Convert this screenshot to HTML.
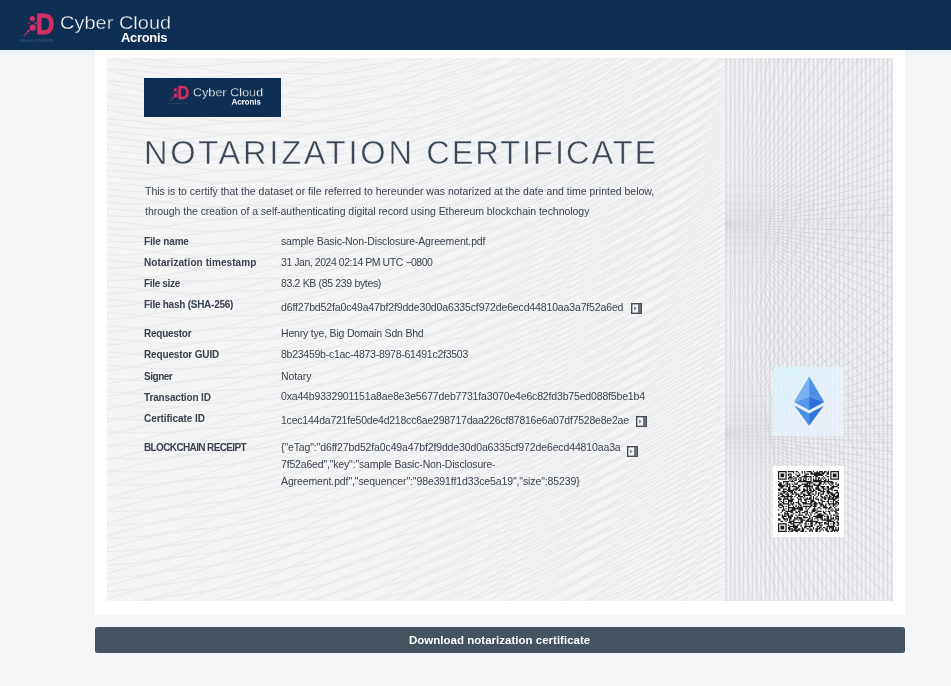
<!DOCTYPE html>
<html lang="en"><head><meta charset="utf-8"><title>Notarization certificate</title>
<style>
*{box-sizing:border-box}
html,body,dl,dt,dd,p,h1{margin:0;padding:0}
body{width:951px;height:686px;overflow:hidden;background:#f4f6f8;font-family:"Liberation Sans",sans-serif;position:relative}
.hdr{position:absolute;left:0;top:0;width:951px;height:49.5px;background:#0e2f54}
.hl{position:absolute;left:0;top:49.5px;width:951px;height:5.5px;background:#ecf3fa}
.card{position:absolute;left:94.6px;top:49.5px;width:810.6px;height:565px;background:#fff}
.cert{position:absolute;left:107px;top:58px;width:786px;height:543px;background:#f5f5f6;overflow:hidden}
.cert svg.bg{position:absolute;left:0;top:0}
.btn{position:absolute;left:95px;top:627px;width:810px;height:26px;background:#45525f;border-radius:2.5px;border:0;padding:0;margin:0;font:inherit;display:block;cursor:pointer}
.lg{position:absolute;width:180px;height:50px}
.lbox{position:absolute;left:143.5px;top:78px;width:137px;height:38.5px;background:#0e2f54}
.eth{position:absolute;left:772.5px;top:366.5px;width:71.5px;height:69px;background:linear-gradient(135deg,rgba(214,244,252,.85),rgba(232,243,253,.78) 55%,rgba(236,242,253,.72))}
.qrbox{position:absolute;left:772.7px;top:466.2px;width:71.3px;height:70.8px;background:#fff}
.qrbox svg{position:absolute;left:5.3px;top:5.2px}

.t{position:absolute;white-space:nowrap;line-height:1;margin:0;font-weight:400;will-change:transform}
.ttl{font-size:32.6px;color:#3c4858;-webkit-text-stroke:.5px #f3f4f6}
.v{font-size:10.5px;color:#3a434f}
.l{font-size:10px;font-weight:700;color:#39414d}
.bt{font-size:11.5px;font-weight:700;color:#fff}
.cc{font-size:18.6px;color:#fff;-webkit-text-stroke:.35px #0e2f54;transform:scaleX(1.07);transform-origin:0 0}
.ac{font-size:13px;font-weight:700;color:#fff}
.cc2{font-size:10.8px;color:#fff;-webkit-text-stroke:.25px #0e2f54}
.ac2{font-size:7.6px;font-weight:700;color:#fff}

</style></head><body>
<header>
<div class="hdr"></div>
<div class="lg" role="img" aria-label="Cyber Cloud Acronis" style="left:0px;top:0px;"><svg style="position:absolute;left:18px;top:8px" width="40.0" height="36.0" viewBox="0 0 40 36"><text x="17.6" y="25.7" font-family="Liberation Sans, sans-serif" font-weight="700" font-size="30" fill="#d42e63" stroke="#d42e63" stroke-width=".8" stroke-linejoin="round" textLength="18.6" lengthAdjust="spacingAndGlyphs">D</text><circle cx="14.3" cy="10.6" r="2.6" fill="#d42e63"/><circle cx="14.7" cy="19.7" r="3.1" fill="#d42e63"/><circle cx="10.5" cy="23" r="1.5" fill="#c12c62"/><circle cx="8.3" cy="25.6" r="1.2" fill="#a92a60"/><circle cx="6.4" cy="27.6" r="1" fill="#8f2a5f"/><circle cx="10.8" cy="15" r="1.1" fill="#a92a60"/><circle cx="17.6" cy="15.1" r="1.2" fill="#c12c62"/><text x="2" y="33.6" font-family="Liberation Sans, sans-serif" font-size="3.8" fill="#3f5781" textLength="33" lengthAdjust="spacingAndGlyphs">BIGDOMAIN</text></svg><span class="t cc" style="left:59.6px;top:14.06px;letter-spacing:0.050px">Cyber Cloud</span><span class="t ac" style="left:120.9px;top:30.60px;letter-spacing:-0.315px">Acronis</span></div>
<div class="hl"></div>
</header>
<main>
<div class="card"></div>
<section class="cert">
 <svg class="bg" width="786" height="543" viewBox="0 0 786 543">
 <defs><linearGradient id="fg" gradientUnits="userSpaceOnUse" x1="618.0" y1="0" x2="663.0" y2="0"><stop offset="0" stop-color="#c8cacf" stop-opacity=".12"/><stop offset="1" stop-color="#c3c6cc" stop-opacity=".6"/></linearGradient><linearGradient id="lg2" gradientUnits="userSpaceOnUse" x1="240" y1="0" x2="618.0" y2="0"><stop offset="0" stop-color="#e7e8ea" stop-opacity="0"/><stop offset="1" stop-color="#e7e8ea" stop-opacity="1"/></linearGradient><clipPath id="sc"><rect x="618.0" y="0" width="168.0" height="543"/></clipPath></defs>
 <path d="M-10 -18.4 L-1 -15.4 L8 -12.6 L17 -10.1 L26 -7.8 L35 -6.0 L44 -4.5 L53 -3.5 L62 -2.9 L71 -2.7 L80 -2.8 L89 -3.3 L98 -3.9 L107 -4.7 L116 -5.6 L125 -6.4 L134 -7.2 L143 -7.8 L152 -8.2 L161 -8.5 L170 -8.5 L179 -8.4 L188 -8.2 L197 -8.0 L206 -7.7 L215 -7.6 L224 -7.6 L233 -7.9 L242 -8.5 L251 -9.5 L260 -10.9 L269 -12.8 L278 -15.0 L287 -17.7 L296 -20.7 L305 -23.9 L314 -27.4 L323 -31.0 L332 -34.7 L341 -38.4 L350 -41.9 L359 -45.3 L368 -48.6 L377 -51.6 L386 -54.5 L395 -57.2 L404 -59.8 L413 -62.3 L422 -64.9 L431 -67.6 L440 -70.4 L449 -73.6 L458 -77.0 L467 -80.9 L476 -85.2 L485 -89.9 L494 -95.0 L503 -100.5 L512 -106.3 L521 -112.4 L530 -118.8 L539 -125.2 L548 -131.7 L557 -138.1 L566 -144.5 L575 -150.7 L584 -156.7 L593 -162.5 L602 -168.2 L611 -173.7 L620 -179.1 L629 -184.5 M-10 -4.9 L-1 -2.1 L8 0.6 L17 3.0 L26 5.1 L35 6.8 L44 8.1 L53 9.0 L62 9.4 L71 9.5 L80 9.2 L89 8.7 L98 7.9 L107 7.1 L116 6.2 L125 5.3 L134 4.6 L143 4.0 L152 3.6 L161 3.4 L170 3.4 L179 3.5 L188 3.7 L197 4.0 L206 4.2 L215 4.3 L224 4.1 L233 3.7 L242 3.0 L251 1.9 L260 0.4 L269 -1.6 L278 -4.0 L287 -6.7 L296 -9.8 L305 -13.2 L314 -16.7 L323 -20.3 L332 -24.0 L341 -27.6 L350 -31.1 L359 -34.5 L368 -37.6 L377 -40.6 L386 -43.4 L395 -46.0 L404 -48.6 L413 -51.1 L422 -53.7 L431 -56.4 L440 -59.3 L449 -62.5 L458 -66.0 L467 -70.0 L476 -74.3 L485 -79.1 L494 -84.3 L503 -89.9 L512 -95.8 L521 -101.9 L530 -108.2 L539 -114.7 L548 -121.1 L557 -127.5 L566 -133.7 L575 -139.8 L584 -145.8 L593 -151.5 L602 -157.0 L611 -162.4 L620 -167.7 L629 -173.0 M-10 8.5 L-1 11.3 L8 13.9 L17 16.1 L26 18.1 L35 19.6 L44 20.7 L53 21.4 L62 21.7 L71 21.6 L80 21.2 L89 20.6 L98 19.8 L107 18.9 L116 18.0 L125 17.1 L134 16.4 L143 15.8 L152 15.5 L161 15.3 L170 15.3 L179 15.4 L188 15.6 L197 15.9 L206 16.0 L215 16.1 L224 15.9 L233 15.4 L242 14.5 L251 13.3 L260 11.6 L269 9.5 L278 7.0 L287 4.2 L296 1.0 L305 -2.4 L314 -5.9 L323 -9.6 L332 -13.2 L341 -16.8 L350 -20.3 L359 -23.5 L368 -26.6 L377 -29.5 L386 -32.3 L395 -34.8 L404 -37.4 L413 -39.9 L422 -42.4 L431 -45.2 L440 -48.1 L449 -51.4 L458 -55.0 L467 -59.1 L476 -63.5 L485 -68.4 L494 -73.7 L503 -79.3 L512 -85.2 L521 -91.4 L530 -97.7 L539 -104.1 L548 -110.5 L557 -116.8 L566 -123.0 L575 -129.0 L584 -134.8 L593 -140.4 L602 -145.8 L611 -151.1 L620 -156.4 L629 -161.6 M-10 21.9 L-1 24.6 L8 27.1 L17 29.2 L26 31.0 L35 32.4 L44 33.3 L53 33.8 L62 34.0 L71 33.8 L80 33.3 L89 32.5 L98 31.6 L107 30.7 L116 29.8 L125 28.9 L134 28.2 L143 27.7 L152 27.3 L161 27.2 L170 27.2 L179 27.4 L188 27.6 L197 27.8 L206 27.9 L215 27.9 L224 27.6 L233 27.0 L242 26.0 L251 24.6 L260 22.9 L269 20.6 L278 18.0 L287 15.1 L296 11.8 L305 8.4 L314 4.8 L323 1.1 L332 -2.5 L341 -6.0 L350 -9.4 L359 -12.6 L368 -15.6 L377 -18.5 L386 -21.1 L395 -23.7 L404 -26.1 L413 -28.6 L422 -31.2 L431 -34.0 L440 -37.0 L449 -40.4 L458 -44.1 L467 -48.2 L476 -52.7 L485 -57.7 L494 -63.1 L503 -68.7 L512 -74.7 L521 -80.9 L530 -87.2 L539 -93.5 L548 -99.9 L557 -106.1 L566 -112.2 L575 -118.0 L584 -123.7 L593 -129.2 L602 -134.6 L611 -139.8 L620 -145.0 L629 -150.2 M-10 35.4 L-1 37.9 L8 40.3 L17 42.3 L26 43.9 L35 45.1 L44 45.9 L53 46.2 L62 46.2 L71 45.9 L80 45.3 L89 44.4 L98 43.5 L107 42.5 L116 41.6 L125 40.7 L134 40.1 L143 39.6 L152 39.3 L161 39.1 L170 39.2 L179 39.4 L188 39.6 L197 39.7 L206 39.8 L215 39.7 L224 39.3 L233 38.6 L242 37.5 L251 36.0 L260 34.1 L269 31.7 L278 29.0 L287 26.0 L296 22.7 L305 19.1 L314 15.5 L323 11.9 L332 8.3 L341 4.8 L350 1.5 L359 -1.7 L368 -4.6 L377 -7.4 L386 -10.0 L395 -12.5 L404 -14.9 L413 -17.4 L422 -20.0 L431 -22.8 L440 -25.9 L449 -29.3 L458 -33.1 L467 -37.4 L476 -42.0 L485 -47.0 L494 -52.5 L503 -58.2 L512 -64.2 L521 -70.4 L530 -76.7 L539 -83.0 L548 -89.2 L557 -95.4 L566 -101.3 L575 -107.1 L584 -112.7 L593 -118.1 L602 -123.4 L611 -128.5 L620 -133.6 L629 -138.8 M-10 48.8 L-1 51.3 L8 53.4 L17 55.3 L26 56.7 L35 57.8 L44 58.4 L53 58.6 L62 58.4 L71 58.0 L80 57.2 L89 56.4 L98 55.4 L107 54.4 L116 53.4 L125 52.6 L134 51.9 L143 51.5 L152 51.2 L161 51.1 L170 51.2 L179 51.3 L188 51.5 L197 51.7 L206 51.7 L215 51.5 L224 51.0 L233 50.1 L242 48.9 L251 47.3 L260 45.2 L269 42.8 L278 40.0 L287 36.8 L296 33.5 L305 29.9 L314 26.3 L323 22.7 L332 19.1 L341 15.7 L350 12.4 L359 9.3 L368 6.5 L377 3.8 L386 1.2 L395 -1.2 L404 -3.7 L413 -6.2 L422 -8.8 L431 -11.7 L440 -14.8 L449 -18.3 L458 -22.2 L467 -26.5 L476 -31.3 L485 -36.4 L494 -41.9 L503 -47.7 L512 -53.7 L521 -59.9 L530 -66.1 L539 -72.4 L548 -78.6 L557 -84.6 L566 -90.5 L575 -96.1 L584 -101.6 L593 -106.9 L602 -112.1 L611 -117.2 L620 -122.2 L629 -127.4 M-10 62.2 L-1 64.6 L8 66.6 L17 68.3 L26 69.6 L35 70.4 L44 70.9 L53 70.9 L62 70.6 L71 70.1 L80 69.2 L89 68.3 L98 67.2 L107 66.2 L116 65.3 L125 64.5 L134 63.8 L143 63.4 L152 63.2 L161 63.1 L170 63.2 L179 63.3 L188 63.5 L197 63.6 L206 63.5 L215 63.2 L224 62.6 L233 61.7 L242 60.3 L251 58.6 L260 56.4 L269 53.8 L278 50.9 L287 47.7 L296 44.3 L305 40.7 L314 37.1 L323 33.4 L332 29.9 L341 26.5 L350 23.3 L359 20.3 L368 17.5 L377 14.9 L386 12.4 L395 10.0 L404 7.6 L413 5.0 L422 2.4 L431 -0.6 L440 -3.8 L449 -7.4 L458 -11.3 L467 -15.8 L476 -20.6 L485 -25.8 L494 -31.3 L503 -37.1 L512 -43.2 L521 -49.4 L530 -55.6 L539 -61.8 L548 -67.9 L557 -73.8 L566 -79.6 L575 -85.2 L584 -90.5 L593 -95.7 L602 -100.8 L611 -105.8 L620 -110.9 L629 -116.0 M-10 75.6 L-1 77.8 L8 79.7 L17 81.2 L26 82.4 L35 83.1 L44 83.4 L53 83.3 L62 82.8 L71 82.1 L80 81.2 L89 80.2 L98 79.1 L107 78.1 L116 77.1 L125 76.3 L134 75.7 L143 75.3 L152 75.1 L161 75.1 L170 75.2 L179 75.3 L188 75.5 L197 75.5 L206 75.4 L215 75.0 L224 74.3 L233 73.2 L242 71.7 L251 69.8 L260 67.5 L269 64.8 L278 61.8 L287 58.5 L296 55.0 L305 51.5 L314 47.8 L323 44.2 L332 40.8 L341 37.4 L350 34.3 L359 31.4 L368 28.6 L377 26.1 L386 23.6 L395 21.2 L404 18.8 L413 16.3 L422 13.5 L431 10.6 L440 7.3 L449 3.6 L458 -0.5 L467 -5.0 L476 -9.9 L485 -15.2 L494 -20.8 L503 -26.6 L512 -32.7 L521 -38.8 L530 -45.0 L539 -51.2 L548 -57.2 L557 -63.0 L566 -68.7 L575 -74.1 L584 -79.4 L593 -84.5 L602 -89.5 L611 -94.5 L620 -99.5 L629 -104.6 M-10 89.0 L-1 91.1 L8 92.8 L17 94.2 L26 95.1 L35 95.7 L44 95.8 L53 95.6 L62 95.0 L71 94.2 L80 93.2 L89 92.1 L98 91.0 L107 90.0 L116 89.0 L125 88.3 L134 87.7 L143 87.3 L152 87.2 L161 87.1 L170 87.2 L179 87.4 L188 87.5 L197 87.4 L206 87.2 L215 86.7 L224 85.9 L233 84.7 L242 83.1 L251 81.0 L260 78.6 L269 75.8 L278 72.7 L287 69.4 L296 65.8 L305 62.2 L314 58.6 L323 55.1 L332 51.6 L341 48.4 L350 45.3 L359 42.5 L368 39.8 L377 37.3 L386 34.8 L395 32.5 L404 30.0 L413 27.5 L422 24.7 L431 21.7 L440 18.3 L449 14.5 L458 10.3 L467 5.7 L476 0.8 L485 -4.6 L494 -10.2 L503 -16.1 L512 -22.2 L521 -28.3 L530 -34.4 L539 -40.5 L548 -46.4 L557 -52.2 L566 -57.7 L575 -63.1 L584 -68.3 L593 -73.3 L602 -78.2 L611 -83.1 L620 -88.1 L629 -93.2 M-10 102.4 L-1 104.3 L8 105.9 L17 107.1 L26 107.9 L35 108.3 L44 108.2 L53 107.8 L62 107.2 L71 106.3 L80 105.2 L89 104.0 L98 102.9 L107 101.9 L116 100.9 L125 100.2 L134 99.7 L143 99.3 L152 99.2 L161 99.2 L170 99.3 L179 99.4 L188 99.4 L197 99.3 L206 99.0 L215 98.4 L224 97.5 L233 96.2 L242 94.4 L251 92.2 L260 89.7 L269 86.8 L278 83.6 L287 80.2 L296 76.6 L305 73.0 L314 69.4 L323 65.9 L332 62.5 L341 59.3 L350 56.3 L359 53.5 L368 50.9 L377 48.5 L386 46.1 L395 43.7 L404 41.3 L413 38.7 L422 35.9 L431 32.7 L440 29.3 L449 25.4 L458 21.1 L467 16.5 L476 11.4 L485 6.0 L494 0.3 L503 -5.6 L512 -11.7 L521 -17.8 L530 -23.9 L539 -29.8 L548 -35.7 L557 -41.3 L566 -46.8 L575 -52.0 L584 -57.1 L593 -62.0 L602 -66.9 L611 -71.7 L620 -76.7 L629 -81.8 M-10 115.8 L-1 117.6 L8 119.0 L17 120.0 L26 120.6 L35 120.8 L44 120.6 L53 120.1 L62 119.3 L71 118.3 L80 117.2 L89 116.0 L98 114.8 L107 113.8 L116 112.9 L125 112.2 L134 111.7 L143 111.4 L152 111.3 L161 111.3 L170 111.3 L179 111.4 L188 111.4 L197 111.2 L206 110.8 L215 110.1 L224 109.1 L233 107.6 L242 105.7 L251 103.4 L260 100.8 L269 97.8 L278 94.5 L287 91.0 L296 87.4 L305 83.8 L314 80.2 L323 76.8 L332 73.4 L341 70.3 L350 67.4 L359 64.7 L368 62.1 L377 59.7 L386 57.3 L395 55.0 L404 52.5 L413 49.9 L422 47.0 L431 43.8 L440 40.2 L449 36.3 L458 31.9 L467 27.1 L476 22.0 L485 16.5 L494 10.8 L503 4.9 L512 -1.2 L521 -7.2 L530 -13.3 L539 -19.2 L548 -24.9 L557 -30.5 L566 -35.8 L575 -40.9 L584 -45.9 L593 -50.8 L602 -55.6 L611 -60.4 L620 -65.3 L629 -70.4 M-10 129.2 L-1 130.8 L8 132.0 L17 132.9 L26 133.3 L35 133.3 L44 133.0 L53 132.4 L62 131.5 L71 130.4 L80 129.2 L89 127.9 L98 126.8 L107 125.7 L116 124.9 L125 124.2 L134 123.7 L143 123.4 L152 123.3 L161 123.3 L170 123.4 L179 123.4 L188 123.4 L197 123.1 L206 122.6 L215 121.8 L224 120.6 L233 119.0 L242 117.0 L251 114.6 L260 111.8 L269 108.7 L278 105.4 L287 101.9 L296 98.2 L305 94.6 L314 91.1 L323 87.6 L332 84.4 L341 81.3 L350 78.5 L359 75.8 L368 73.3 L377 70.9 L386 68.6 L395 66.2 L404 63.7 L413 61.0 L422 58.1 L431 54.8 L440 51.2 L449 47.1 L458 42.7 L467 37.8 L476 32.6 L485 27.1 L494 21.3 L503 15.4 L512 9.3 L521 3.3 L530 -2.6 L539 -8.4 L548 -14.1 L557 -19.5 L566 -24.8 L575 -29.8 L584 -34.7 L593 -39.5 L602 -44.2 L611 -49.0 L620 -53.9 L629 -59.0 M-10 142.5 L-1 143.9 L8 145.0 L17 145.7 L26 146.0 L35 145.9 L44 145.4 L53 144.6 L62 143.6 L71 142.4 L80 141.2 L89 139.9 L98 138.7 L107 137.7 L116 136.9 L125 136.2 L134 135.8 L143 135.5 L152 135.4 L161 135.4 L170 135.5 L179 135.5 L188 135.3 L197 135.0 L206 134.4 L215 133.4 L224 132.1 L233 130.4 L242 128.2 L251 125.7 L260 122.8 L269 119.6 L278 116.2 L287 112.7 L296 109.1 L305 105.5 L314 101.9 L323 98.5 L332 95.3 L341 92.3 L350 89.6 L359 87.0 L368 84.5 L377 82.2 L386 79.8 L395 77.5 L404 74.9 L413 72.2 L422 69.2 L431 65.8 L440 62.1 L449 57.9 L458 53.4 L467 48.4 L476 43.2 L485 37.6 L494 31.8 L503 25.9 L512 19.9 L521 13.9 L530 8.0 L539 2.3 L548 -3.3 L557 -8.6 L566 -13.7 L575 -18.7 L584 -23.5 L593 -28.2 L602 -32.9 L611 -37.6 L620 -42.6 L629 -47.7 M-10 155.8 L-1 157.1 L8 158.0 L17 158.5 L26 158.6 L35 158.3 L44 157.7 L53 156.8 L62 155.7 L71 154.5 L80 153.2 L89 151.9 L98 150.7 L107 149.7 L116 148.9 L125 148.3 L134 147.9 L143 147.6 L152 147.5 L161 147.5 L170 147.6 L179 147.5 L188 147.3 L197 146.9 L206 146.1 L215 145.1 L224 143.6 L233 141.7 L242 139.5 L251 136.8 L260 133.8 L269 130.6 L278 127.1 L287 123.5 L296 119.9 L305 116.3 L314 112.8 L323 109.5 L332 106.3 L341 103.4 L350 100.7 L359 98.2 L368 95.8 L377 93.4 L386 91.1 L395 88.7 L404 86.1 L413 83.4 L422 80.3 L431 76.8 L440 73.0 L449 68.7 L458 64.1 L467 59.1 L476 53.7 L485 48.1 L494 42.3 L503 36.4 L512 30.4 L521 24.5 L530 18.7 L539 13.0 L548 7.6 L557 2.4 L566 -2.7 L575 -7.5 L584 -12.2 L593 -16.9 L602 -21.5 L611 -26.3 L620 -31.2 L629 -36.4 M-10 169.1 L-1 170.2 L8 171.0 L17 171.3 L26 171.2 L35 170.8 L44 170.1 L53 169.0 L62 167.8 L71 166.5 L80 165.2 L89 163.9 L98 162.7 L107 161.7 L116 160.9 L125 160.3 L134 160.0 L143 159.8 L152 159.7 L161 159.7 L170 159.6 L179 159.5 L188 159.2 L197 158.7 L206 157.9 L215 156.7 L224 155.1 L233 153.1 L242 150.7 L251 147.9 L260 144.8 L269 141.5 L278 138.0 L287 134.3 L296 130.7 L305 127.2 L314 123.7 L323 120.4 L332 117.4 L341 114.5 L350 111.8 L359 109.4 L368 107.0 L377 104.7 L386 102.4 L395 99.9 L404 97.3 L413 94.5 L422 91.3 L431 87.8 L440 83.8 L449 79.5 L458 74.8 L467 69.7 L476 64.3 L485 58.6 L494 52.8 L503 46.9 L512 40.9 L521 35.1 L530 29.4 L539 23.8 L548 18.5 L557 13.4 L566 8.4 L575 3.7 L584 -1.0 L593 -5.6 L602 -10.2 L611 -14.9 L620 -19.9 L629 -25.0 M-10 182.4 L-1 183.3 L8 183.9 L17 184.1 L26 183.8 L35 183.3 L44 182.4 L53 181.2 L62 180.0 L71 178.6 L80 177.2 L89 175.9 L98 174.8 L107 173.8 L116 173.0 L125 172.5 L134 172.1 L143 171.9 L152 171.8 L161 171.8 L170 171.7 L179 171.5 L188 171.2 L197 170.5 L206 169.6 L215 168.2 L224 166.5 L233 164.4 L242 161.8 L251 159.0 L260 155.8 L269 152.4 L278 148.8 L287 145.2 L296 141.6 L305 138.0 L314 134.6 L323 131.4 L332 128.4 L341 125.6 L350 123.0 L359 120.6 L368 118.3 L377 116.0 L386 113.6 L395 111.2 L404 108.5 L413 105.6 L422 102.3 L431 98.7 L440 94.7 L449 90.2 L458 85.4 L467 80.2 L476 74.8 L485 69.1 L494 63.3 L503 57.4 L512 51.5 L521 45.7 L530 40.1 L539 34.6 L548 29.4 L557 24.4 L566 19.5 L575 14.9 L584 10.3 L593 5.7 L602 1.1 L611 -3.6 L620 -8.5 L629 -13.7 M-10 195.6 L-1 196.4 L8 196.8 L17 196.8 L26 196.4 L35 195.7 L44 194.7 L53 193.4 L62 192.1 L71 190.7 L80 189.3 L89 188.0 L98 186.8 L107 185.9 L116 185.1 L125 184.6 L134 184.2 L143 184.1 L152 184.0 L161 183.9 L170 183.8 L179 183.5 L188 183.1 L197 182.3 L206 181.2 L215 179.8 L224 177.9 L233 175.6 L242 173.0 L251 170.0 L260 166.7 L269 163.3 L278 159.7 L287 156.0 L296 152.4 L305 148.9 L314 145.6 L323 142.4 L332 139.5 L341 136.8 L350 134.2 L359 131.8 L368 129.5 L377 127.2 L386 124.9 L395 122.4 L404 119.7 L413 116.7 L422 113.3 L431 109.6 L440 105.5 L449 100.9 L458 96.0 L467 90.8 L476 85.3 L485 79.6 L494 73.8 L503 67.9 L512 62.1 L521 56.4 L530 50.8 L539 45.5 L548 40.3 L557 35.4 L566 30.7 L575 26.1 L584 21.6 L593 17.1 L602 12.5 L611 7.8 L620 2.8 L629 -2.5 M-10 208.8 L-1 209.5 L8 209.7 L17 209.5 L26 209.0 L35 208.1 L44 207.0 L53 205.6 L62 204.2 L71 202.7 L80 201.3 L89 200.0 L98 198.9 L107 198.0 L116 197.2 L125 196.7 L134 196.4 L143 196.2 L152 196.1 L161 196.0 L170 195.9 L179 195.5 L188 195.0 L197 194.1 L206 192.9 L215 191.3 L224 189.3 L233 186.9 L242 184.1 L251 181.0 L260 177.7 L269 174.2 L278 170.5 L287 166.9 L296 163.3 L305 159.8 L314 156.6 L323 153.5 L332 150.6 L341 147.9 L350 145.4 L359 143.1 L368 140.8 L377 138.5 L386 136.2 L395 133.6 L404 130.8 L413 127.8 L422 124.3 L431 120.5 L440 116.2 L449 111.6 L458 106.6 L467 101.3 L476 95.8 L485 90.1 L494 84.3 L503 78.4 L512 72.7 L521 67.0 L530 61.6 L539 56.3 L548 51.3 L557 46.5 L566 41.8 L575 37.3 L584 32.9 L593 28.4 L602 23.8 L611 19.1 L620 14.1 L629 8.8 M-10 222.0 L-1 222.5 L8 222.5 L17 222.2 L26 221.5 L35 220.5 L44 219.2 L53 217.8 L62 216.3 L71 214.8 L80 213.4 L89 212.1 L98 211.0 L107 210.1 L116 209.4 L125 208.9 L134 208.6 L143 208.4 L152 208.3 L161 208.2 L170 207.9 L179 207.5 L188 206.9 L197 205.9 L206 204.5 L215 202.8 L224 200.6 L233 198.1 L242 195.2 L251 192.0 L260 188.6 L269 185.1 L278 181.4 L287 177.8 L296 174.2 L305 170.8 L314 167.6 L323 164.5 L332 161.7 L341 159.1 L350 156.7 L359 154.4 L368 152.1 L377 149.8 L386 147.4 L395 144.8 L404 142.0 L413 138.8 L422 135.3 L431 131.3 L440 127.0 L449 122.3 L458 117.2 L467 111.9 L476 106.3 L485 100.6 L494 94.8 L503 89.0 L512 83.3 L521 77.7 L530 72.4 L539 67.2 L548 62.3 L557 57.6 L566 53.0 L575 48.6 L584 44.2 L593 39.7 L602 35.1 L611 30.4 L620 25.4 L629 20.0 M-10 235.2 L-1 235.5 L8 235.3 L17 234.8 L26 234.0 L35 232.9 L44 231.5 L53 230.0 L62 228.5 L71 226.9 L80 225.5 L89 224.2 L98 223.1 L107 222.2 L116 221.6 L125 221.1 L134 220.8 L143 220.7 L152 220.5 L161 220.3 L170 220.0 L179 219.5 L188 218.7 L197 217.6 L206 216.1 L215 214.2 L224 212.0 L233 209.3 L242 206.3 L251 203.0 L260 199.6 L269 196.0 L278 192.3 L287 188.7 L296 185.1 L305 181.8 L314 178.6 L323 175.6 L332 172.9 L341 170.3 L350 167.9 L359 165.7 L368 163.4 L377 161.1 L386 158.7 L395 156.0 L404 153.1 L413 149.8 L422 146.2 L431 142.1 L440 137.7 L449 132.9 L458 127.8 L467 122.4 L476 116.8 L485 111.1 L494 105.3 L503 99.6 L512 93.9 L521 88.5 L530 83.2 L539 78.2 L548 73.3 L557 68.7 L566 64.2 L575 59.8 L584 55.5 L593 51.0 L602 46.5 L611 41.7 L620 36.6 L629 31.2 M-10 248.3 L-1 248.4 L8 248.1 L17 247.5 L26 246.5 L35 245.2 L44 243.8 L53 242.2 L62 240.6 L71 239.1 L80 237.6 L89 236.4 L98 235.3 L107 234.4 L116 233.8 L125 233.4 L134 233.1 L143 232.9 L152 232.7 L161 232.4 L170 232.1 L179 231.4 L188 230.5 L197 229.3 L206 227.7 L215 225.7 L224 223.3 L233 220.5 L242 217.4 L251 214.0 L260 210.5 L269 206.9 L278 203.2 L287 199.6 L296 196.1 L305 192.8 L314 189.6 L323 186.7 L332 184.1 L341 181.6 L350 179.2 L359 177.0 L368 174.7 L377 172.4 L386 169.9 L395 167.2 L404 164.2 L413 160.8 L422 157.1 L431 152.9 L440 148.4 L449 143.5 L458 138.3 L467 132.9 L476 127.3 L485 121.6 L494 115.8 L503 110.1 L512 104.6 L521 99.2 L530 94.0 L539 89.1 L548 84.4 L557 79.8 L566 75.4 L575 71.1 L584 66.8 L593 62.3 L602 57.8 L611 53.0 L620 47.8 L629 42.4 M-10 261.4 L-1 261.4 L8 260.9 L17 260.1 L26 259.0 L35 257.6 L44 256.1 L53 254.4 L62 252.8 L71 251.2 L80 249.8 L89 248.5 L98 247.5 L107 246.6 L116 246.0 L125 245.6 L134 245.3 L143 245.1 L152 244.9 L161 244.6 L170 244.1 L179 243.4 L188 242.4 L197 241.0 L206 239.2 L215 237.1 L224 234.5 L233 231.6 L242 228.4 L251 225.0 L260 221.4 L269 217.8 L278 214.1 L287 210.5 L296 207.0 L305 203.8 L314 200.7 L323 197.9 L332 195.3 L341 192.8 L350 190.5 L359 188.3 L368 186.0 L377 183.6 L386 181.1 L395 178.3 L404 175.2 L413 171.8 L422 167.9 L431 163.7 L440 159.1 L449 154.1 L458 148.9 L467 143.4 L476 137.8 L485 132.1 L494 126.4 L503 120.7 L512 115.3 L521 110.0 L530 104.9 L539 100.1 L548 95.4 L557 91.0 L566 86.7 L575 82.4 L584 78.1 L593 73.7 L602 69.1 L611 64.2 L620 59.1 L629 53.5 M-10 274.5 L-1 274.3 L8 273.7 L17 272.7 L26 271.4 L35 269.9 L44 268.3 L53 266.6 L62 265.0 L71 263.4 L80 261.9 L89 260.7 L98 259.7 L107 258.9 L116 258.3 L125 257.9 L134 257.6 L143 257.3 L152 257.1 L161 256.7 L170 256.1 L179 255.3 L188 254.1 L197 252.6 L206 250.7 L215 248.4 L224 245.8 L233 242.8 L242 239.5 L251 236.0 L260 232.4 L269 228.7 L278 225.0 L287 221.4 L296 218.0 L305 214.8 L314 211.8 L323 209.1 L332 206.5 L341 204.1 L350 201.8 L359 199.6 L368 197.3 L377 194.9 L386 192.3 L395 189.5 L404 186.3 L413 182.7 L422 178.8 L431 174.5 L440 169.7 L449 164.7 L458 159.4 L467 153.9 L476 148.3 L485 142.6 L494 136.9 L503 131.4 L512 126.0 L521 120.8 L530 115.8 L539 111.1 L548 106.5 L557 102.2 L566 97.9 L575 93.7 L584 89.4 L593 85.0 L602 80.3 L611 75.5 L620 70.2 L629 64.6 M-10 287.6 L-1 287.2 L8 286.4 L17 285.3 L26 283.9 L35 282.3 L44 280.6 L53 278.8 L62 277.1 L71 275.6 L80 274.1 L89 272.9 L98 271.9 L107 271.1 L116 270.6 L125 270.2 L134 269.9 L143 269.6 L152 269.3 L161 268.8 L170 268.1 L179 267.2 L188 265.9 L197 264.3 L206 262.2 L215 259.8 L224 257.0 L233 253.9 L242 250.5 L251 247.0 L260 243.3 L269 239.6 L278 235.9 L287 232.4 L296 229.0 L305 225.9 L314 223.0 L323 220.3 L332 217.7 L341 215.4 L350 213.1 L359 210.9 L368 208.6 L377 206.2 L386 203.5 L395 200.6 L404 197.3 L413 193.6 L422 189.6 L431 185.2 L440 180.4 L449 175.3 L458 169.9 L467 164.4 L476 158.7 L485 153.1 L494 147.5 L503 142.0 L512 136.7 L521 131.6 L530 126.7 L539 122.1 L548 117.7 L557 113.4 L566 109.1 L575 104.9 L584 100.7 L593 96.2 L602 91.6 L611 86.7 L620 81.4 L629 75.7 M-10 300.6 L-1 300.0 L8 299.1 L17 297.8 L26 296.3 L35 294.6 L44 292.9 L53 291.1 L62 289.4 L71 287.8 L80 286.3 L89 285.2 L98 284.2 L107 283.4 L116 282.9 L125 282.5 L134 282.1 L143 281.8 L152 281.4 L161 280.9 L170 280.1 L179 279.1 L188 277.7 L197 275.9 L206 273.7 L215 271.1 L224 268.2 L233 265.0 L242 261.6 L251 257.9 L260 254.2 L269 250.5 L278 246.9 L287 243.4 L296 240.1 L305 237.0 L314 234.1 L323 231.5 L332 229.0 L341 226.7 L350 224.5 L359 222.2 L368 219.9 L377 217.4 L386 214.7 L395 211.7 L404 208.3 L413 204.5 L422 200.4 L431 195.9 L440 191.0 L449 185.8 L458 180.4 L467 174.9 L476 169.2 L485 163.6 L494 158.1 L503 152.7 L512 147.5 L521 142.5 L530 137.7 L539 133.2 L548 128.8 L557 124.6 L566 120.4 L575 116.2 L584 112.0 L593 107.5 L602 102.8 L611 97.9 L620 92.5 L629 86.8 M-10 313.6 L-1 312.9 L8 311.8 L17 310.4 L26 308.7 L35 307.0 L44 305.1 L53 303.3 L62 301.6 L71 300.0 L80 298.6 L89 297.4 L98 296.5 L107 295.8 L116 295.2 L125 294.8 L134 294.4 L143 294.1 L152 293.6 L161 293.0 L170 292.1 L179 290.9 L188 289.4 L197 287.4 L206 285.1 L215 282.4 L224 279.4 L233 276.1 L242 272.6 L251 268.9 L260 265.2 L269 261.5 L278 257.9 L287 254.4 L296 251.2 L305 248.1 L314 245.3 L323 242.7 L332 240.3 L341 238.0 L350 235.8 L359 233.5 L368 231.2 L377 228.6 L386 225.8 L395 222.7 L404 219.2 L413 215.4 L422 211.1 L431 206.5 L440 201.6 L449 196.4 L458 190.9 L467 185.4 L476 179.7 L485 174.2 L494 168.7 L503 163.4 L512 158.2 L521 153.3 L530 148.7 L539 144.2 L548 139.9 L557 135.8 L566 131.7 L575 127.5 L584 123.2 L593 118.8 L602 114.1 L611 109.0 L620 103.6 L629 97.8 M-10 326.6 L-1 325.7 L8 324.4 L17 322.9 L26 321.2 L35 319.3 L44 317.4 L53 315.6 L62 313.8 L71 312.2 L80 310.9 L89 309.7 L98 308.8 L107 308.1 L116 307.5 L125 307.1 L134 306.7 L143 306.3 L152 305.8 L161 305.1 L170 304.1 L179 302.7 L188 301.1 L197 299.0 L206 296.5 L215 293.7 L224 290.6 L233 287.2 L242 283.6 L251 279.9 L260 276.1 L269 272.4 L278 268.9 L287 265.4 L296 262.2 L305 259.3 L314 256.5 L323 254.0 L332 251.6 L341 249.4 L350 247.1 L359 244.8 L368 242.4 L377 239.8 L386 237.0 L395 233.8 L404 230.2 L413 226.2 L422 221.9 L431 217.2 L440 212.2 L449 206.9 L458 201.4 L467 195.9 L476 190.3 L485 184.7 L494 179.3 L503 174.1 L512 169.0 L521 164.3 L530 159.7 L539 155.3 L548 151.1 L557 147.0 L566 142.9 L575 138.8 L584 134.5 L593 130.0 L602 125.3 L611 120.2 L620 114.7 L629 108.9 M-10 339.6 L-1 338.5 L8 337.1 L17 335.4 L26 333.6 L35 331.7 L44 329.7 L53 327.8 L62 326.1 L71 324.5 L80 323.2 L89 322.0 L98 321.1 L107 320.4 L116 319.9 L125 319.5 L134 319.0 L143 318.6 L152 317.9 L161 317.1 L170 316.0 L179 314.5 L188 312.7 L197 310.5 L206 307.9 L215 305.0 L224 301.7 L233 298.3 L242 294.6 L251 290.9 L260 287.1 L269 283.4 L278 279.9 L287 276.5 L296 273.4 L305 270.5 L314 267.8 L323 265.3 L332 262.9 L341 260.7 L350 258.5 L359 256.2 L368 253.7 L377 251.0 L386 248.1 L395 244.8 L404 241.1 L413 237.0 L422 232.6 L431 227.8 L440 222.7 L449 217.4 L458 211.9 L467 206.4 L476 200.8 L485 195.3 L494 190.0 L503 184.8 L512 179.9 L521 175.2 L530 170.7 L539 166.4 L548 162.3 L557 158.2 L566 154.2 L575 150.1 L584 145.8 L593 141.3 L602 136.5 L611 131.3 L620 125.8 L629 119.8 M-10 352.5 L-1 351.2 L8 349.7 L17 347.9 L26 346.0 L35 344.0 L44 342.0 L53 340.1 L62 338.4 L71 336.8 L80 335.5 L89 334.4 L98 333.5 L107 332.8 L116 332.3 L125 331.8 L134 331.3 L143 330.8 L152 330.1 L161 329.1 L170 327.9 L179 326.3 L188 324.3 L197 322.0 L206 319.3 L215 316.2 L224 312.9 L233 309.3 L242 305.6 L251 301.8 L260 298.1 L269 294.4 L278 290.9 L287 287.6 L296 284.5 L305 281.7 L314 279.0 L323 276.6 L332 274.3 L341 272.1 L350 269.8 L359 267.5 L368 265.0 L377 262.2 L386 259.2 L395 255.7 L404 252.0 L413 247.8 L422 243.3 L431 238.4 L440 233.3 L449 227.9 L458 222.4 L467 216.9 L476 211.3 L485 205.9 L494 200.6 L503 195.6 L512 190.7 L521 186.2 L530 181.8 L539 177.6 L548 173.5 L557 169.5 L566 165.5 L575 161.3 L584 157.0 L593 152.5 L602 147.6 L611 142.4 L620 136.8 L629 130.8 M-10 365.4 L-1 364.0 L8 362.3 L17 360.4 L26 358.4 L35 356.4 L44 354.4 L53 352.4 L62 350.7 L71 349.1 L80 347.8 L89 346.8 L98 345.9 L107 345.2 L116 344.7 L125 344.2 L134 343.6 L143 343.0 L152 342.2 L161 341.2 L170 339.8 L179 338.1 L188 335.9 L197 333.5 L206 330.6 L215 327.4 L224 324.0 L233 320.4 L242 316.6 L251 312.8 L260 309.1 L269 305.4 L278 302.0 L287 298.7 L296 295.7 L305 292.9 L314 290.3 L323 287.9 L332 285.6 L341 283.4 L350 281.1 L359 278.8 L368 276.2 L377 273.4 L386 270.2 L395 266.7 L404 262.8 L413 258.6 L422 253.9 L431 249.0 L440 243.8 L449 238.4 L458 232.9 L467 227.4 L476 221.9 L485 216.5 L494 211.3 L503 206.4 L512 201.6 L521 197.1 L530 192.9 L539 188.7 L548 184.7 L557 180.7 L566 176.7 L575 172.6 L584 168.3 L593 163.7 L602 158.7 L611 153.5 L620 147.8 L629 141.7 M-10 378.3 L-1 376.7 L8 374.9 L17 372.9 L26 370.9 L35 368.7 L44 366.7 L53 364.8 L62 363.0 L71 361.5 L80 360.2 L89 359.2 L98 358.3 L107 357.6 L116 357.1 L125 356.5 L134 355.9 L143 355.2 L152 354.3 L161 353.2 L170 351.6 L179 349.8 L188 347.5 L197 344.9 L206 341.9 L215 338.6 L224 335.1 L233 331.4 L242 327.6 L251 323.8 L260 320.1 L269 316.5 L278 313.1 L287 309.9 L296 306.9 L305 304.2 L314 301.6 L323 299.3 L332 297.0 L341 294.8 L350 292.5 L359 290.1 L368 287.4 L377 284.5 L386 281.3 L395 277.6 L404 273.6 L413 269.3 L422 264.6 L431 259.6 L440 254.3 L449 248.9 L458 243.4 L467 237.9 L476 232.5 L485 227.2 L494 222.1 L503 217.2 L512 212.6 L521 208.2 L530 203.9 L539 199.9 L548 195.9 L557 192.0 L566 188.0 L575 183.8 L584 179.5 L593 174.8 L602 169.8 L611 164.5 L620 158.8 L629 152.6 M-10 391.1 L-1 389.4 L8 387.5 L17 385.4 L26 383.3 L35 381.1 L44 379.1 L53 377.1 L62 375.4 L71 373.9 L80 372.6 L89 371.6 L98 370.8 L107 370.1 L116 369.5 L125 368.9 L134 368.2 L143 367.4 L152 366.4 L161 365.1 L170 363.5 L179 361.5 L188 359.1 L197 356.3 L206 353.2 L215 349.8 L224 346.2 L233 342.5 L242 338.6 L251 334.8 L260 331.1 L269 327.5 L278 324.2 L287 321.0 L296 318.1 L305 315.4 L314 313.0 L323 310.6 L332 308.4 L341 306.1 L350 303.8 L359 301.3 L368 298.6 L377 295.6 L386 292.3 L395 288.5 L404 284.4 L413 280.0 L422 275.2 L431 270.1 L440 264.8 L449 259.4 L458 253.9 L467 248.4 L476 243.1 L485 237.8 L494 232.8 L503 228.0 L512 223.5 L521 219.2 L530 215.1 L539 211.1 L548 207.2 L557 203.3 L566 199.3 L575 195.1 L584 190.7 L593 186.0 L602 180.9 L611 175.5 L620 169.7 L629 163.5 M-10 404.0 L-1 402.1 L8 400.1 L17 397.9 L26 395.7 L35 393.5 L44 391.4 L53 389.5 L62 387.8 L71 386.3 L80 385.1 L89 384.0 L98 383.2 L107 382.5 L116 381.9 L125 381.3 L134 380.5 L143 379.6 L152 378.5 L161 377.1 L170 375.3 L179 373.1 L188 370.6 L197 367.7 L206 364.5 L215 361.0 L224 357.3 L233 353.5 L242 349.7 L251 345.9 L260 342.2 L269 338.6 L278 335.3 L287 332.2 L296 329.4 L305 326.8 L314 324.3 L323 322.0 L332 319.8 L341 317.5 L350 315.1 L359 312.6 L368 309.8 L377 306.7 L386 303.2 L395 299.4 L404 295.2 L413 290.7 L422 285.8 L431 280.7 L440 275.3 L449 269.9 L458 264.4 L467 259.0 L476 253.7 L485 248.5 L494 243.6 L503 238.9 L512 234.5 L521 230.3 L530 226.2 L539 222.3 L548 218.4 L557 214.5 L566 210.5 L575 206.3 L584 201.9 L593 197.1 L602 192.0 L611 186.5 L620 180.6 L629 174.4 M-10 416.8 L-1 414.8 L8 412.7 L17 410.4 L26 408.2 L35 405.9 L44 403.8 L53 401.9 L62 400.2 L71 398.7 L80 397.5 L89 396.5 L98 395.7 L107 395.0 L116 394.3 L125 393.6 L134 392.8 L143 391.8 L152 390.6 L161 389.0 L170 387.1 L179 384.8 L188 382.1 L197 379.1 L206 375.7 L215 372.2 L224 368.4 L233 364.6 L242 360.7 L251 356.9 L260 353.2 L269 349.7 L278 346.5 L287 343.4 L296 340.7 L305 338.1 L314 335.7 L323 333.4 L332 331.1 L341 328.9 L350 326.4 L359 323.8 L368 321.0 L377 317.8 L386 314.2 L395 310.3 L404 306.0 L413 301.3 L422 296.4 L431 291.2 L440 285.8 L449 280.4 L458 274.9 L467 269.5 L476 264.3 L485 259.2 L494 254.4 L503 249.8 L512 245.5 L521 241.3 L530 237.4 L539 233.5 L548 229.6 L557 225.8 L566 221.7 L575 217.5 L584 213.0 L593 208.2 L602 203.0 L611 197.4 L620 191.5 L629 185.2 M-10 429.6 L-1 427.5 L8 425.3 L17 422.9 L26 420.6 L35 418.3 L44 416.2 L53 414.3 L62 412.6 L71 411.2 L80 410.0 L89 409.0 L98 408.2 L107 407.4 L116 406.7 L125 406.0 L134 405.1 L143 404.0 L152 402.6 L161 400.9 L170 398.8 L179 396.4 L188 393.6 L197 390.4 L206 387.0 L215 383.3 L224 379.5 L233 375.6 L242 371.7 L251 368.0 L260 364.3 L269 360.9 L278 357.7 L287 354.7 L296 352.0 L305 349.4 L314 347.1 L323 344.8 L332 342.5 L341 340.2 L350 337.7 L359 335.1 L368 332.1 L377 328.8 L386 325.1 L395 321.1 L404 316.7 L413 312.0 L422 306.9 L431 301.7 L440 296.3 L449 290.9 L458 285.5 L467 280.1 L476 275.0 L485 270.0 L494 265.2 L503 260.8 L512 256.5 L521 252.4 L530 248.5 L539 244.7 L548 240.9 L557 237.0 L566 233.0 L575 228.7 L584 224.1 L593 219.3 L602 214.0 L611 208.4 L620 202.4 L629 196.1 M-10 442.4 L-1 440.2 L8 437.8 L17 435.4 L26 433.1 L35 430.8 L44 428.7 L53 426.8 L62 425.1 L71 423.7 L80 422.5 L89 421.5 L98 420.7 L107 419.9 L116 419.2 L125 418.3 L134 417.3 L143 416.1 L152 414.6 L161 412.8 L170 410.5 L179 408.0 L188 405.0 L197 401.8 L206 398.2 L215 394.5 L224 390.6 L233 386.7 L242 382.8 L251 379.0 L260 375.4 L269 372.0 L278 368.9 L287 366.0 L296 363.3 L305 360.8 L314 358.5 L323 356.2 L332 353.9 L341 351.6 L350 349.0 L359 346.3 L368 343.2 L377 339.8 L386 336.0 L395 331.9 L404 327.4 L413 322.6 L422 317.5 L431 312.2 L440 306.8 L449 301.4 L458 296.0 L467 290.7 L476 285.6 L485 280.7 L494 276.1 L503 271.7 L512 267.5 L521 263.6 L530 259.7 L539 255.9 L548 252.1 L557 248.2 L566 244.2 L575 239.9 L584 235.3 L593 230.3 L602 225.0 L611 219.3 L620 213.2 L629 206.9 M-10 455.2 L-1 452.8 L8 450.4 L17 448.0 L26 445.5 L35 443.3 L44 441.1 L53 439.3 L62 437.6 L71 436.2 L80 435.0 L89 434.0 L98 433.2 L107 432.4 L116 431.6 L125 430.7 L134 429.6 L143 428.2 L152 426.6 L161 424.6 L170 422.2 L179 419.5 L188 416.4 L197 413.1 L206 409.4 L215 405.6 L224 401.7 L233 397.8 L242 393.9 L251 390.1 L260 386.6 L269 383.2 L278 380.1 L287 377.3 L296 374.6 L305 372.2 L314 369.9 L323 367.6 L332 365.3 L341 362.9 L350 360.3 L359 357.5 L368 354.3 L377 350.8 L386 346.9 L395 342.7 L404 338.1 L413 333.2 L422 328.0 L431 322.7 L440 317.3 L449 311.9 L458 306.6 L467 301.4 L476 296.3 L485 291.5 L494 287.0 L503 282.7 L512 278.6 L521 274.7 L530 270.9 L539 267.2 L548 263.4 L557 259.5 L566 255.4 L575 251.0 L584 246.3 L593 241.3 L602 235.9 L611 230.1 L620 224.0 L629 217.6 M-10 467.9 L-1 465.5 L8 463.0 L17 460.5 L26 458.0 L35 455.7 L44 453.6 L53 451.8 L62 450.1 L71 448.8 L80 447.6 L89 446.6 L98 445.7 L107 444.9 L116 444.0 L125 443.0 L134 441.8 L143 440.3 L152 438.6 L161 436.4 L170 433.9 L179 431.1 L188 427.9 L197 424.4 L206 420.6 L215 416.8 L224 412.8 L233 408.8 L242 405.0 L251 401.2 L260 397.7 L269 394.4 L278 391.4 L287 388.6 L296 386.0 L305 383.6 L314 381.3 L323 379.0 L332 376.7 L341 374.2 L350 371.6 L359 368.6 L368 365.4 L377 361.7 L386 357.8 L395 353.4 L404 348.7 L413 343.8 L422 338.6 L431 333.2 L440 327.8 L449 322.4 L458 317.1 L467 312.0 L476 307.1 L485 302.4 L494 297.9 L503 293.7 L512 289.7 L521 285.8 L530 282.1 L539 278.4 L548 274.6 L557 270.7 L566 266.5 L575 262.1 L584 257.4 L593 252.3 L602 246.8 L611 241.0 L620 234.8 L629 228.4 M-10 480.7 L-1 478.2 L8 475.6 L17 473.0 L26 470.6 L35 468.2 L44 466.1 L53 464.3 L62 462.7 L71 461.3 L80 460.2 L89 459.2 L98 458.3 L107 457.4 L116 456.4 L125 455.3 L134 454.0 L143 452.4 L152 450.5 L161 448.2 L170 445.6 L179 442.6 L188 439.2 L197 435.6 L206 431.8 L215 427.9 L224 423.9 L233 419.9 L242 416.1 L251 412.4 L260 408.9 L269 405.7 L278 402.7 L287 400.0 L296 397.4 L305 395.0 L314 392.7 L323 390.4 L332 388.1 L341 385.5 L350 382.8 L359 379.8 L368 376.4 L377 372.7 L386 368.6 L395 364.1 L404 359.4 L413 354.3 L422 349.1 L431 343.7 L440 338.4 L449 333.0 L458 327.7 L467 322.7 L476 317.8 L485 313.2 L494 308.9 L503 304.7 L512 300.8 L521 297.0 L530 293.3 L539 289.6 L548 285.8 L557 281.9 L566 277.7 L575 273.2 L584 268.4 L593 263.3 L602 257.7 L611 251.8 L620 245.6 L629 239.2 M-10 493.4 L-1 490.8 L8 488.2 L17 485.6 L26 483.1 L35 480.8 L44 478.7 L53 476.9 L62 475.3 L71 473.9 L80 472.8 L89 471.7 L98 470.8 L107 469.9 L116 468.8 L125 467.6 L134 466.2 L143 464.5 L152 462.4 L161 460.0 L170 457.2 L179 454.0 L188 450.6 L197 446.9 L206 443.0 L215 439.0 L224 435.0 L233 431.0 L242 427.2 L251 423.6 L260 420.1 L269 417.0 L278 414.0 L287 411.3 L296 408.8 L305 406.5 L314 404.1 L323 401.8 L332 399.4 L341 396.8 L350 394.0 L359 390.9 L368 387.4 L377 383.6 L386 379.4 L395 374.8 L404 370.0 L413 364.9 L422 359.6 L431 354.3 L440 348.9 L449 343.6 L458 338.4 L467 333.4 L476 328.6 L485 324.1 L494 319.8 L503 315.8 L512 311.9 L521 308.2 L530 304.5 L539 300.8 L548 297.0 L557 293.1 L566 288.8 L575 284.3 L584 279.4 L593 274.2 L602 268.6 L611 262.6 L620 256.4 L629 249.9 M-10 506.2 L-1 503.5 L8 500.8 L17 498.1 L26 495.6 L35 493.3 L44 491.3 L53 489.4 L62 487.9 L71 486.5 L80 485.4 L89 484.3 L98 483.3 L107 482.3 L116 481.2 L125 479.9 L134 478.4 L143 476.5 L152 474.3 L161 471.7 L170 468.8 L179 465.5 L188 461.9 L197 458.2 L206 454.2 L215 450.2 L224 446.1 L233 442.2 L242 438.4 L251 434.7 L260 431.4 L269 428.2 L278 425.4 L287 422.7 L296 420.3 L305 417.9 L314 415.6 L323 413.2 L332 410.8 L341 408.1 L350 405.2 L359 402.0 L368 398.4 L377 394.4 L386 390.1 L395 385.5 L404 380.6 L413 375.4 L422 370.1 L431 364.8 L440 359.4 L449 354.1 L458 349.0 L467 344.1 L476 339.4 L485 335.0 L494 330.8 L503 326.9 L512 323.1 L521 319.4 L530 315.7 L539 312.1 L548 308.2 L557 304.2 L566 300.0 L575 295.4 L584 290.4 L593 285.1 L602 279.4 L611 273.4 L620 267.1 L629 260.6 M-10 518.9 L-1 516.2 L8 513.4 L17 510.7 L26 508.2 L35 505.9 L44 503.9 L53 502.1 L62 500.5 L71 499.2 L80 498.0 L89 496.9 L98 495.9 L107 494.8 L116 493.6 L125 492.2 L134 490.5 L143 488.5 L152 486.1 L161 483.4 L170 480.4 L179 477.0 L188 473.3 L197 469.4 L206 465.4 L215 461.3 L224 457.3 L233 453.3 L242 449.5 L251 446.0 L260 442.6 L269 439.6 L278 436.8 L287 434.1 L296 431.7 L305 429.3 L314 427.0 L323 424.6 L332 422.1 L341 419.4 L350 416.4 L359 413.0 L368 409.3 L377 405.3 L386 400.9 L395 396.2 L404 391.2 L413 386.0 L422 380.7 L431 375.3 L440 370.0 L449 364.7 L458 359.7 L467 354.8 L476 350.3 L485 345.9 L494 341.8 L503 337.9 L512 334.2 L521 330.6 L530 327.0 L539 323.3 L548 319.4 L557 315.4 L566 311.0 L575 306.4 L584 301.4 L593 296.0 L602 290.2 L611 284.2 L620 277.9 L629 271.4 M-10 531.7 L-1 528.8 L8 526.0 L17 523.3 L26 520.8 L35 518.5 L44 516.5 L53 514.7 L62 513.2 L71 511.8 L80 510.6 L89 509.5 L98 508.4 L107 507.3 L116 506.0 L125 504.4 L134 502.6 L143 500.5 L152 498.0 L161 495.1 L170 491.9 L179 488.4 L188 484.6 L197 480.6 L206 476.6 L215 472.5 L224 468.4 L233 464.5 L242 460.7 L251 457.2 L260 453.9 L269 450.9 L278 448.2 L287 445.6 L296 443.2 L305 440.8 L314 438.5 L323 436.0 L332 433.4 L341 430.6 L350 427.5 L359 424.1 L368 420.3 L377 416.1 L386 411.6 L395 406.8 L404 401.7 L413 396.5 L422 391.2 L431 385.8 L440 380.5 L449 375.3 L458 370.4 L467 365.6 L476 361.1 L485 356.9 L494 352.9 L503 349.1 L512 345.4 L521 341.8 L530 338.2 L539 334.5 L548 330.6 L557 326.5 L566 322.1 L575 317.4 L584 312.3 L593 306.8 L602 301.0 L611 294.9 L620 288.6 L629 282.1 M-10 544.4 L-1 541.5 L8 538.7 L17 535.9 L26 533.4 L35 531.2 L44 529.1 L53 527.4 L62 525.8 L71 524.5 L80 523.3 L89 522.1 L98 521.0 L107 519.8 L116 518.3 L125 516.7 L134 514.7 L143 512.4 L152 509.8 L161 506.8 L170 503.4 L179 499.8 L188 495.9 L197 491.9 L206 487.7 L215 483.6 L224 479.6 L233 475.7 L242 471.9 L251 468.5 L260 465.3 L269 462.3 L278 459.6 L287 457.0 L296 454.6 L305 452.3 L314 449.9 L323 447.4 L332 444.8 L341 441.9 L350 438.6 L359 435.1 L368 431.2 L377 426.9 L386 422.3 L395 417.4 L404 412.3 L413 407.0 L422 401.7 L431 396.3 L440 391.1 L449 386.0 L458 381.1 L467 376.4 L476 372.0 L485 367.9 L494 363.9 L503 360.2 L512 356.6 L521 353.0 L530 349.4 L539 345.7 L548 341.8 L557 337.6 L566 333.2 L575 328.3 L584 323.2 L593 317.6 L602 311.8 L611 305.7 L620 299.3 L629 292.8 M-10 557.2 L-1 554.2 L8 551.3 L17 548.6 L26 546.1 L35 543.8 L44 541.8 L53 540.1 L62 538.5 L71 537.2 L80 535.9 L89 534.8 L98 533.5 L107 532.2 L116 530.7 L125 528.9 L134 526.8 L143 524.4 L152 521.5 L161 518.4 L170 514.9 L179 511.2 L188 507.2 L197 503.1 L206 498.9 L215 494.8 L224 490.7 L233 486.9 L242 483.2 L251 479.8 L260 476.6 L269 473.7 L278 471.0 L287 468.5 L296 466.1 L305 463.7 L314 461.3 L323 458.8 L332 456.1 L341 453.1 L350 449.7 L359 446.1 L368 442.0 L377 437.7 L386 433.0 L395 428.0 L404 422.9 L413 417.6 L422 412.2 L431 406.9 L440 401.7 L449 396.6 L458 391.8 L467 387.2 L476 382.9 L485 378.9 L494 375.0 L503 371.3 L512 367.8 L521 364.2 L530 360.6 L539 356.9 L548 352.9 L557 348.7 L566 344.2 L575 339.3 L584 334.0 L593 328.5 L602 322.5 L611 316.4 L620 310.0 L629 303.5 M-10 569.9 L-1 566.9 L8 564.0 L17 561.3 L26 558.8 L35 556.5 L44 554.5 L53 552.8 L62 551.2 L71 549.9 L80 548.6 L89 547.4 L98 546.1 L107 544.6 L116 543.0 L125 541.1 L134 538.8 L143 536.2 L152 533.3 L161 530.0 L170 526.4 L179 522.5 L188 518.5 L197 514.3 L206 510.1 L215 506.0 L224 501.9 L233 498.1 L242 494.5 L251 491.1 L260 488.0 L269 485.1 L278 482.5 L287 480.0 L296 477.6 L305 475.2 L314 472.7 L323 470.1 L332 467.3 L341 464.2 L350 460.8 L359 457.0 L368 452.9 L377 448.4 L386 443.6 L395 438.6 L404 433.4 L413 428.1 L422 422.7 L431 417.5 L440 412.3 L449 407.3 L458 402.6 L467 398.1 L476 393.9 L485 389.9 L494 386.1 L503 382.5 L512 379.0 L521 375.4 L530 371.8 L539 368.0 L548 364.1 L557 359.8 L566 355.2 L575 350.2 L584 344.9 L593 339.2 L602 333.3 L611 327.1 L620 320.7 L629 314.2 M-10 582.7 L-1 579.6 L8 576.7 L17 574.0 L26 571.5 L35 569.2 L44 567.2 L53 565.5 L62 564.0 L71 562.6 L80 561.3 L89 560.0 L98 558.6 L107 557.1 L116 555.3 L125 553.2 L134 550.9 L143 548.1 L152 545.0 L161 541.6 L170 537.9 L179 533.9 L188 529.8 L197 525.6 L206 521.3 L215 517.2 L224 513.2 L233 509.3 L242 505.8 L251 502.5 L260 499.4 L269 496.6 L278 494.0 L287 491.5 L296 489.1 L305 486.7 L314 484.2 L323 481.5 L332 478.6 L341 475.4 L350 471.8 L359 468.0 L368 463.7 L377 459.1 L386 454.3 L395 449.2 L404 443.9 L413 438.6 L422 433.3 L431 428.0 L440 422.9 L449 418.0 L458 413.4 L467 409.0 L476 404.8 L485 400.9 L494 397.2 L503 393.7 L512 390.2 L521 386.6 L530 383.0 L539 379.2 L548 375.2 L557 370.8 L566 366.1 L575 361.1 L584 355.7 L593 350.0 L602 344.0 L611 337.8 L620 331.4 L629 325.0 M-10 595.4 L-1 592.3 L8 589.4 L17 586.7 L26 584.2 L35 582.0 L44 580.0 L53 578.3 L62 576.7 L71 575.3 L80 574.0 L89 572.6 L98 571.1 L107 569.5 L116 567.6 L125 565.4 L134 562.8 L143 560.0 L152 556.7 L161 553.1 L170 549.3 L179 545.3 L188 541.1 L197 536.8 L206 532.5 L215 528.4 L224 524.4 L233 520.6 L242 517.1 L251 513.8 L260 510.8 L269 508.1 L278 505.5 L287 503.0 L296 500.6 L305 498.1 L314 495.6 L323 492.8 L332 489.8 L341 486.5 L350 482.9 L359 478.9 L368 474.5 L377 469.8 L386 464.9 L395 459.8 L404 454.5 L413 449.1 L422 443.8 L431 438.6 L440 433.6 L449 428.8 L458 424.2 L467 419.9 L476 415.8 L485 412.0 L494 408.4 L503 404.8 L512 401.4 L521 397.8 L530 394.2 L539 390.3 L548 386.2 L557 381.8 L566 377.1 L575 371.9 L584 366.5 L593 360.7 L602 354.7 L611 348.4 L620 342.1 L629 335.7 M-10 608.2 L-1 605.1 L8 602.1 L17 599.4 L26 596.9 L35 594.7 L44 592.8 L53 591.1 L62 589.5 L71 588.1 L80 586.7 L89 585.2 L98 583.6 L107 581.9 L116 579.8 L125 577.5 L134 574.8 L143 571.8 L152 568.4 L161 564.7 L170 560.7 L179 556.6 L188 552.3 L197 548.0 L206 543.8 L215 539.6 L224 535.7 L233 531.9 L242 528.4 L251 525.2 L260 522.3 L269 519.5 L278 517.0 L287 514.5 L296 512.1 L305 509.6 L314 507.0 L323 504.1 L332 501.0 L341 497.6 L350 493.9 L359 489.7 L368 485.3 L377 480.5 L386 475.5 L395 470.3 L404 465.0 L413 459.7 L422 454.4 L431 449.2 L440 444.3 L449 439.5 L458 435.0 L467 430.8 L476 426.9 L485 423.1 L494 419.5 L503 416.0 L512 412.6 L521 409.0 L530 405.4 L539 401.5 L548 397.3 L557 392.8 L566 388.0 L575 382.8 L584 377.3 L593 371.4 L602 365.4 L611 359.1 L620 352.8 L629 346.4 M-10 621.0 L-1 617.9 L8 614.9 L17 612.2 L26 609.7 L35 607.5 L44 605.6 L53 603.9 L62 602.3 L71 600.8 L80 599.3 L89 597.8 L98 596.1 L107 594.2 L116 592.1 L125 589.6 L134 586.7 L143 583.6 L152 580.0 L161 576.2 L170 572.2 L179 567.9 L188 563.6 L197 559.3 L206 555.0 L215 550.9 L224 546.9 L233 543.3 L242 539.8 L251 536.7 L260 533.8 L269 531.1 L278 528.5 L287 526.0 L296 523.6 L305 521.0 L314 518.3 L323 515.4 L332 512.2 L341 508.7 L350 504.8 L359 500.6 L368 496.0 L377 491.2 L386 486.1 L395 480.9 L404 475.6 L413 470.2 L422 465.0 L431 459.9 L440 455.0 L449 450.3 L458 445.9 L467 441.8 L476 437.9 L485 434.2 L494 430.7 L503 427.2 L512 423.8 L521 420.2 L530 416.5 L539 412.6 L548 408.3 L557 403.8 L566 398.9 L575 393.6 L584 388.0 L593 382.1 L602 376.0 L611 369.8 L620 363.5 L629 357.1 M-10 633.8 L-1 630.6 L8 627.7 L17 625.0 L26 622.5 L35 620.3 L44 618.4 L53 616.7 L62 615.1 L71 613.6 L80 612.0 L89 610.4 L98 608.6 L107 606.6 L116 604.3 L125 601.6 L134 598.7 L143 595.3 L152 591.7 L161 587.7 L170 583.6 L179 579.3 L188 574.9 L197 570.5 L206 566.3 L215 562.2 L224 558.3 L233 554.6 L242 551.2 L251 548.1 L260 545.3 L269 542.6 L278 540.0 L287 537.6 L296 535.1 L305 532.5 L314 529.7 L323 526.7 L332 523.4 L341 519.7 L350 515.7 L359 511.4 L368 506.8 L377 501.8 L386 496.7 L395 491.4 L404 486.1 L413 480.8 L422 475.6 L431 470.5 L440 465.7 L449 461.1 L458 456.8 L467 452.8 L476 449.0 L485 445.4 L494 441.9 L503 438.4 L512 435.0 L521 431.4 L530 427.6 L539 423.6 L548 419.3 L557 414.7 L566 409.7 L575 404.4 L584 398.7 L593 392.8 L602 386.7 L611 380.5 L620 374.2 L629 367.9 M-10 646.6 L-1 643.5 L8 640.5 L17 637.8 L26 635.4 L35 633.2 L44 631.3 L53 629.5 L62 627.9 L71 626.3 L80 624.7 L89 623.0 L98 621.1 L107 618.9 L116 616.5 L125 613.7 L134 610.5 L143 607.1 L152 603.3 L161 599.2 L170 595.0 L179 590.6 L188 586.2 L197 581.8 L206 577.5 L215 573.5 L224 569.6 L233 566.0 L242 562.7 L251 559.6 L260 556.8 L269 554.1 L278 551.6 L287 549.1 L296 546.6 L305 543.9 L314 541.0 L323 537.9 L332 534.5 L341 530.8 L350 526.7 L359 522.2 L368 517.5 L377 512.5 L386 507.3 L395 502.0 L404 496.6 L413 491.4 L422 486.2 L431 481.2 L440 476.5 L449 472.0 L458 467.7 L467 463.8 L476 460.1 L485 456.5 L494 453.0 L503 449.6 L512 446.2 L521 442.6 L530 438.8 L539 434.7 L548 430.3 L557 425.6 L566 420.5 L575 415.1 L584 409.4 L593 403.5 L602 397.4 L611 391.1 L620 384.9 L629 378.7 M-10 659.5 L-1 656.3 L8 653.3 L17 650.6 L26 648.2 L35 646.1 L44 644.1 L53 642.4 L62 640.7 L71 639.1 L80 637.4 L89 635.6 L98 633.5 L107 631.2 L116 628.6 L125 625.7 L134 622.4 L143 618.8 L152 614.8 L161 610.7 L170 606.3 L179 601.9 L188 597.5 L197 593.1 L206 588.8 L215 584.8 L224 581.0 L233 577.4 L242 574.1 L251 571.1 L260 568.3 L269 565.7 L278 563.1 L287 560.6 L296 558.0 L305 555.3 L314 552.4 L323 549.2 L332 545.6 L341 541.8 L350 537.5 L359 533.0 L368 528.2 L377 523.1 L386 517.9 L395 512.5 L404 507.2 L413 501.9 L422 496.8 L431 491.9 L440 487.2 L449 482.8 L458 478.7 L467 474.8 L476 471.2 L485 467.6 L494 464.2 L503 460.8 L512 457.3 L521 453.7 L530 449.9 L539 445.7 L548 441.3 L557 436.5 L566 431.3 L575 425.9 L584 420.1 L593 414.1 L602 408.0 L611 401.8 L620 395.6 L629 389.4 M-10 672.4 L-1 669.2 L8 666.2 L17 663.5 L26 661.1 L35 659.0 L44 657.0 L53 655.2 L62 653.5 L71 651.8 L80 650.0 L89 648.1 L98 646.0 L107 643.5 L116 640.8 L125 637.7 L134 634.2 L143 630.5 L152 626.4 L161 622.1 L170 617.7 L179 613.2 L188 608.8 L197 604.4 L206 600.1 L215 596.1 L224 592.3 L233 588.9 L242 585.6 L251 582.6 L260 579.9 L269 577.2 L278 574.7 L287 572.1 L296 569.5 L305 566.7 L314 563.7 L323 560.4 L332 556.7 L341 552.7 L350 548.4 L359 543.7 L368 538.8 L377 533.7 L386 528.4 L395 523.1 L404 517.8 L413 512.5 L422 507.5 L431 502.6 L440 498.0 L449 493.7 L458 489.7 L467 485.9 L476 482.3 L485 478.8 L494 475.4 L503 472.0 L512 468.5 L521 464.8 L530 460.9 L539 456.7 L548 452.2 L557 447.3 L566 442.1 L575 436.6 L584 430.8 L593 424.8 L602 418.7 L611 412.5 L620 406.3 L629 400.2 M-10 685.2 L-1 682.0 L8 679.1 L17 676.5 L26 674.2 L35 672.0 L44 670.1 L53 668.4 L62 666.6 L71 664.9 L80 663.1 L89 661.1 L98 658.8 L107 656.3 L116 653.4 L125 650.2 L134 646.6 L143 642.7 L152 638.6 L161 634.3 L170 629.8 L179 625.3 L188 620.8 L197 616.5 L206 612.3 L215 608.3 L224 604.6 L233 601.2 L242 598.1 L251 595.1 L260 592.4 L269 589.8 L278 587.3 L287 584.7 L296 582.0 L305 579.1 L314 576.0 L323 572.6 L332 568.9 L341 564.8 L350 560.3 L359 555.6 L368 550.6 L377 545.4 L386 540.1 L395 534.8 L404 529.5 L413 524.3 L422 519.3 L431 514.6 L440 510.1 L449 505.9 L458 501.9 L467 498.2 L476 494.6 L485 491.2 L494 487.8 L503 484.4 L512 480.9 L521 477.1 L530 473.2 L539 468.9 L548 464.3 L557 459.3 L566 454.0 L575 448.4 L584 442.6 L593 436.6 L602 430.4 L611 424.2 L620 418.1 L629 412.1 M-10 698.0 L-1 694.9 L8 692.1 L17 689.6 L26 687.3 L35 685.3 L44 683.4 L53 681.7 L62 680.0 L71 678.2 L80 676.4 L89 674.3 L98 672.0 L107 669.4 L116 666.4 L125 663.1 L134 659.4 L143 655.5 L152 651.3 L161 646.9 L170 642.5 L179 638.0 L188 633.5 L197 629.2 L206 625.1 L215 621.2 L224 617.6 L233 614.3 L242 611.2 L251 608.4 L260 605.7 L269 603.1 L278 600.6 L287 598.0 L296 595.3 L305 592.4 L314 589.2 L323 585.7 L332 581.9 L341 577.7 L350 573.2 L359 568.4 L368 563.3 L377 558.1 L386 552.8 L395 547.5 L404 542.2 L413 537.1 L422 532.2 L431 527.5 L440 523.1 L449 519.0 L458 515.1 L467 511.4 L476 507.9 L485 504.5 L494 501.2 L503 497.7 L512 494.2 L521 490.4 L530 486.3 L539 482.0 L548 477.3 L557 472.2 L566 466.8 L575 461.2 L584 455.3 L593 449.2 L602 443.1 L611 436.9 L620 430.8 L629 424.9 M-10 710.8 L-1 707.9 L8 705.1 L17 702.7 L26 700.5 L35 698.6 L44 696.7 L53 695.0 L62 693.3 L71 691.6 L80 689.7 L89 687.5 L98 685.1 L107 682.4 L116 679.4 L125 676.0 L134 672.2 L143 668.2 L152 664.0 L161 659.6 L170 655.1 L179 650.6 L188 646.2 L197 642.0 L206 638.0 L215 634.2 L224 630.7 L233 627.4 L242 624.4 L251 621.7 L260 619.0 L269 616.5 L278 614.0 L287 611.3 L296 608.6 L305 605.6 L314 602.3 L323 598.7 L332 594.8 L341 590.5 L350 586.0 L359 581.1 L368 576.0 L377 570.8 L386 565.4 L395 560.1 L404 554.9 L413 549.9 L422 545.0 L431 540.4 L440 536.1 L449 532.1 L458 528.3 L467 524.7 L476 521.3 L485 517.9 L494 514.5 L503 511.1 L512 507.4 L521 503.6 L530 499.5 L539 495.0 L548 490.2 L557 485.1 L566 479.6 L575 473.9 L584 467.9 L593 461.9 L602 455.7 L611 449.6 L620 443.6 L629 437.7 M-10 723.7 L-1 720.8 L8 718.2 L17 715.8 L26 713.7 L35 711.8 L44 710.1 L53 708.4 L62 706.7 L71 704.9 L80 702.9 L89 700.7 L98 698.3 L107 695.5 L116 692.3 L125 688.8 L134 685.0 L143 680.9 L152 676.7 L161 672.2 L170 667.8 L179 663.3 L188 659.0 L197 654.8 L206 650.8 L215 647.1 L224 643.7 L233 640.6 L242 637.7 L251 634.9 L260 632.4 L269 629.8 L278 627.3 L287 624.7 L296 621.9 L305 618.8 L314 615.5 L323 611.8 L332 607.8 L341 603.4 L350 598.7 L359 593.8 L368 588.7 L377 583.4 L386 578.1 L395 572.8 L404 567.7 L413 562.7 L422 557.9 L431 553.4 L440 549.2 L449 545.2 L458 541.5 L467 538.0 L476 534.6 L485 531.2 L494 527.9 L503 524.4 L512 520.7 L521 516.8 L530 512.6 L539 508.0 L548 503.1 L557 497.9 L566 492.4 L575 486.6 L584 480.6 L593 474.5 L602 468.4 L611 462.3 L620 456.3 L629 450.5 M-10 736.6 L-1 733.8 L8 731.3 L17 729.0 L26 727.0 L35 725.1 L44 723.4 L53 721.7 L62 720.0 L71 718.2 L80 716.2 L89 713.9 L98 711.4 L107 708.5 L116 705.2 L125 701.7 L134 697.8 L143 693.6 L152 689.3 L161 684.9 L170 680.4 L179 676.0 L188 671.7 L197 667.6 L206 663.7 L215 660.1 L224 656.8 L233 653.7 L242 650.9 L251 648.2 L260 645.7 L269 643.2 L278 640.6 L287 638.0 L296 635.1 L305 632.0 L314 628.6 L323 624.8 L332 620.7 L341 616.2 L350 611.5 L359 606.5 L368 601.3 L377 596.1 L386 590.8 L395 585.5 L404 580.4 L413 575.5 L422 570.8 L431 566.4 L440 562.3 L449 558.4 L458 554.8 L467 551.3 L476 547.9 L485 544.6 L494 541.2 L503 537.7 L512 534.0 L521 530.0 L530 525.7 L539 521.0 L548 516.0 L557 510.7 L566 505.1 L575 499.3 L584 493.3 L593 487.2 L602 481.0 L611 475.0 L620 469.1 L629 463.3 M-10 749.5 L-1 746.8 L8 744.4 L17 742.2 L26 740.2 L35 738.4 L44 736.7 L53 735.1 L62 733.4 L71 731.5 L80 729.4 L89 727.1 L98 724.4 L107 721.5 L116 718.1 L125 714.5 L134 710.5 L143 706.3 L152 702.0 L161 697.5 L170 693.1 L179 688.7 L188 684.5 L197 680.5 L206 676.7 L215 673.2 L224 669.9 L233 666.9 L242 664.2 L251 661.6 L260 659.0 L269 656.5 L278 654.0 L287 651.3 L296 648.3 L305 645.1 L314 641.6 L323 637.8 L332 633.6 L341 629.0 L350 624.2 L359 619.2 L368 614.0 L377 608.7 L386 603.4 L395 598.2 L404 593.2 L413 588.4 L422 583.8 L431 579.5 L440 575.4 L449 571.6 L458 568.0 L467 564.6 L476 561.3 L485 557.9 L494 554.5 L503 551.0 L512 547.2 L521 543.1 L530 538.7 L539 534.0 L548 528.9 L557 523.5 L566 517.9 L575 512.0 L584 505.9 L593 499.8 L602 493.7 L611 487.7 L620 481.8 L629 476.2 M-10 762.5 L-1 759.8 L8 757.5 L17 755.4 L26 753.5 L35 751.8 L44 750.1 L53 748.4 L62 746.7 L71 744.8 L80 742.7 L89 740.2 L98 737.5 L107 734.4 L116 731.0 L125 727.3 L134 723.2 L143 719.0 L152 714.6 L161 710.2 L170 705.8 L179 701.4 L188 697.3 L197 693.3 L206 689.6 L215 686.2 L224 683.1 L233 680.1 L242 677.4 L251 674.9 L260 672.4 L269 669.9 L278 667.3 L287 664.5 L296 661.5 L305 658.3 L314 654.7 L323 650.7 L332 646.4 L341 641.8 L350 636.9 L359 631.9 L368 626.6 L377 621.4 L386 616.1 L395 611.0 L404 606.0 L413 601.2 L422 596.7 L431 592.5 L440 588.6 L449 584.8 L458 581.3 L467 577.9 L476 574.6 L485 571.3 L494 567.8 L503 564.2 L512 560.4 L521 556.2 L530 551.8 L539 546.9 L548 541.8 L557 536.3 L566 530.6 L575 524.6 L584 518.6 L593 512.5 L602 506.4 L611 500.4 L620 494.6 L629 489.1 M-10 775.4 L-1 772.9 L8 770.6 L17 768.6 L26 766.8 L35 765.1 L44 763.4 L53 761.8 L62 760.0 L71 758.1 L80 755.9 L89 753.4 L98 750.5 L107 747.3 L116 743.8 L125 740.0 L134 735.9 L143 731.7 L152 727.3 L161 722.9 L170 718.5 L179 714.2 L188 710.1 L197 706.2 L206 702.6 L215 699.3 L224 696.2 L233 693.4 L242 690.7 L251 688.2 L260 685.7 L269 683.2 L278 680.6 L287 677.8 L296 674.7 L305 671.4 L314 667.7 L323 663.6 L332 659.3 L341 654.6 L350 649.6 L359 644.5 L368 639.3 L377 634.0 L386 628.8 L395 623.7 L404 618.8 L413 614.1 L422 609.7 L431 605.6 L440 601.7 L449 598.1 L458 594.6 L467 591.3 L476 588.0 L485 584.6 L494 581.2 L503 577.5 L512 573.6 L521 569.3 L530 564.8 L539 559.8 L548 554.6 L557 549.1 L566 543.3 L575 537.3 L584 531.2 L593 525.1 L602 519.1 L611 513.2 L620 507.5 L629 502.0 M-10 788.4 L-1 786.0 L8 783.8 L17 781.9 L26 780.1 L35 778.4 L44 776.8 L53 775.1 L62 773.3 L71 771.3 L80 769.0 L89 766.4 L98 763.5 L107 760.3 L116 756.7 L125 752.8 L134 748.6 L143 744.3 L152 739.9 L161 735.5 L170 731.2 L179 726.9 L188 722.9 L197 719.1 L206 715.6 L215 712.4 L224 709.4 L233 706.6 L242 704.0 L251 701.6 L260 699.1 L269 696.6 L278 693.9 L287 691.0 L296 687.9 L305 684.4 L314 680.7 L323 676.5 L332 672.1 L341 667.3 L350 662.3 L359 657.2 L368 651.9 L377 646.7 L386 641.5 L395 636.5 L404 631.6 L413 627.1 L422 622.7 L431 618.7 L440 614.9 L449 611.3 L458 607.9 L467 604.6 L476 601.3 L485 598.0 L494 594.4 L503 590.7 L512 586.7 L521 582.4 L530 577.7 L539 572.7 L548 567.4 L557 561.8 L566 555.9 L575 550.0 L584 543.9 L593 537.8 L602 531.8 L611 526.0 L620 520.3 L629 514.9 M-10 801.5 L-1 799.1 L8 797.0 L17 795.1 L26 793.4 L35 791.8 L44 790.1 L53 788.4 L62 786.6 L71 784.5 L80 782.2 L89 779.5 L98 776.5 L107 773.1 L116 769.5 L125 765.5 L134 761.3 L143 757.0 L152 752.6 L161 748.2 L170 743.9 L179 739.7 L188 735.8 L197 732.1 L206 728.7 L215 725.5 L224 722.6 L233 719.9 L242 717.4 L251 714.9 L260 712.4 L269 709.9 L278 707.2 L287 704.3 L296 701.0 L305 697.5 L314 693.6 L323 689.4 L332 684.9 L341 680.0 L350 675.0 L359 669.8 L368 664.6 L377 659.4 L386 654.2 L395 649.3 L404 644.5 L413 640.0 L422 635.8 L431 631.8 L440 628.1 L449 624.6 L458 621.3 L467 618.0 L476 614.7 L485 611.3 L494 607.7 L503 603.9 L512 599.8 L521 595.4 L530 590.7 L539 585.6 L548 580.2 L557 574.5 L566 568.6 L575 562.6 L584 556.5 L593 550.5 L602 544.5 L611 538.7 L620 533.2 L629 527.9 M-10 814.5 L-1 812.3 L8 810.2 L17 808.4 L26 806.7 L35 805.1 L44 803.5 L53 801.8 L62 799.9 L71 797.7 L80 795.3 L89 792.5 L98 789.4 L107 786.0 L116 782.2 L125 778.2 L134 774.0 L143 769.6 L152 765.2 L161 760.9 L170 756.6 L179 752.5 L188 748.6 L197 745.0 L206 741.7 L215 738.7 L224 735.8 L233 733.2 L242 730.7 L251 728.3 L260 725.8 L269 723.2 L278 720.5 L287 717.5 L296 714.2 L305 710.5 L314 706.5 L323 702.2 L332 697.6 L341 692.7 L350 687.7 L359 682.5 L368 677.2 L377 672.0 L386 667.0 L395 662.1 L404 657.4 L413 653.0 L422 648.9 L431 645.0 L440 641.4 L449 637.9 L458 634.6 L467 631.3 L476 628.0 L485 624.6 L494 621.0 L503 617.1 L512 612.9 L521 608.4 L530 603.6 L539 598.4 L548 592.9 L557 587.2 L566 581.3 L575 575.3 L584 569.2 L593 563.2 L602 557.3 L611 551.6 L620 546.1 L629 540.9" fill="none" stroke="#e9eaec" stroke-width="1.3"/>
<path d="M-10 -15.7 L-1 -15.0 L8 -14.4 L17 -13.7 L26 -13.0 L35 -12.1 L44 -11.0 L53 -9.8 L62 -8.3 L71 -6.7 L80 -5.0 L89 -3.2 L98 -1.5 L107 0.2 L116 1.7 L125 2.9 L134 3.8 L143 4.3 L152 4.4 L161 4.1 L170 3.4 L179 2.2 L188 0.7 L197 -1.0 L206 -3.0 L215 -5.1 L224 -7.3 L233 -9.4 L242 -11.4 L251 -13.3 L260 -15.1 L269 -16.6 L278 -17.9 L287 -19.1 L296 -20.2 L305 -21.2 L314 -22.3 L323 -23.5 L332 -24.8 L341 -26.4 L350 -28.4 L359 -30.7 L368 -33.5 L377 -36.6 L386 -40.2 L395 -44.2 L404 -48.5 L413 -53.1 L422 -57.9 L431 -62.9 L440 -67.8 L449 -72.8 L458 -77.6 L467 -82.3 L476 -86.8 L485 -91.1 L494 -95.2 L503 -99.2 L512 -103.1 L521 -106.9 L530 -110.8 L539 -114.8 L548 -119.0 L557 -123.4 L566 -128.2 L575 -133.4 L584 -139.0 L593 -145.0 L602 -151.5 L611 -158.3 L620 -165.5 L629 -172.9 M-10 -3.0 L-1 -2.4 L8 -1.8 L17 -1.1 L26 -0.4 L35 0.5 L44 1.6 L53 2.9 L62 4.3 L71 5.9 L80 7.6 L89 9.4 L98 11.1 L107 12.7 L116 14.0 L125 15.1 L134 15.9 L143 16.3 L152 16.3 L161 15.8 L170 14.9 L179 13.7 L188 12.1 L197 10.2 L206 8.2 L215 6.0 L224 3.9 L233 1.8 L242 -0.3 L251 -2.1 L260 -3.8 L269 -5.3 L278 -6.5 L287 -7.7 L296 -8.8 L305 -9.8 L314 -10.9 L323 -12.1 L332 -13.5 L341 -15.2 L350 -17.2 L359 -19.7 L368 -22.5 L377 -25.8 L386 -29.5 L395 -33.6 L404 -37.9 L413 -42.6 L422 -47.4 L431 -52.3 L440 -57.3 L449 -62.1 L458 -66.9 L467 -71.5 L476 -75.9 L485 -80.2 L494 -84.2 L503 -88.1 L512 -91.9 L521 -95.7 L530 -99.6 L539 -103.6 L548 -107.8 L557 -112.3 L566 -117.2 L575 -122.4 L584 -128.1 L593 -134.2 L602 -140.7 L611 -147.6 L620 -154.8 L629 -162.2 M-10 9.7 L-1 10.3 L8 10.9 L17 11.5 L26 12.2 L35 13.1 L44 14.2 L53 15.5 L62 17.0 L71 18.6 L80 20.3 L89 22.0 L98 23.6 L107 25.1 L116 26.4 L125 27.4 L134 28.0 L143 28.3 L152 28.1 L161 27.5 L170 26.4 L179 25.1 L188 23.4 L197 21.5 L206 19.4 L215 17.2 L224 15.0 L233 12.9 L242 10.9 L251 9.1 L260 7.5 L269 6.1 L278 4.9 L287 3.7 L296 2.7 L305 1.7 L314 0.6 L323 -0.7 L332 -2.2 L341 -3.9 L350 -6.1 L359 -8.6 L368 -11.6 L377 -15.0 L386 -18.8 L395 -22.9 L404 -27.4 L413 -32.1 L422 -36.9 L431 -41.8 L440 -46.7 L449 -51.5 L458 -56.2 L467 -60.7 L476 -65.1 L485 -69.2 L494 -73.2 L503 -77.0 L512 -80.8 L521 -84.5 L530 -88.4 L539 -92.4 L548 -96.6 L557 -101.2 L566 -106.1 L575 -111.4 L584 -117.2 L593 -123.3 L602 -129.9 L611 -136.8 L620 -144.0 L629 -151.5 M-10 22.5 L-1 23.0 L8 23.5 L17 24.1 L26 24.9 L35 25.8 L44 26.9 L53 28.2 L62 29.7 L71 31.3 L80 32.9 L89 34.6 L98 36.2 L107 37.6 L116 38.8 L125 39.6 L134 40.1 L143 40.2 L152 39.9 L161 39.1 L170 38.0 L179 36.5 L188 34.7 L197 32.7 L206 30.6 L215 28.4 L224 26.2 L233 24.1 L242 22.2 L251 20.4 L260 18.9 L269 17.5 L278 16.3 L287 15.2 L296 14.2 L305 13.1 L314 12.0 L323 10.7 L332 9.1 L341 7.3 L350 5.0 L359 2.4 L368 -0.7 L377 -4.2 L386 -8.1 L395 -12.3 L404 -16.8 L413 -21.5 L422 -26.4 L431 -31.3 L440 -36.1 L449 -40.9 L458 -45.5 L467 -49.9 L476 -54.2 L485 -58.2 L494 -62.1 L503 -65.8 L512 -69.6 L521 -73.3 L530 -77.2 L539 -81.2 L548 -85.5 L557 -90.1 L566 -95.1 L575 -100.5 L584 -106.3 L593 -112.5 L602 -119.1 L611 -126.1 L620 -133.3 L629 -140.8 M-10 35.2 L-1 35.7 L8 36.2 L17 36.8 L26 37.5 L35 38.4 L44 39.6 L53 40.9 L62 42.4 L71 44.0 L80 45.6 L89 47.2 L98 48.7 L107 50.0 L116 51.1 L125 51.8 L134 52.2 L143 52.1 L152 51.6 L161 50.7 L170 49.5 L179 47.8 L188 46.0 L197 43.9 L206 41.7 L215 39.5 L224 37.4 L233 35.3 L242 33.4 L251 31.7 L260 30.2 L269 28.9 L278 27.7 L287 26.7 L296 25.7 L305 24.6 L314 23.4 L323 22.1 L332 20.4 L341 18.5 L350 16.1 L359 13.3 L368 10.1 L377 6.6 L386 2.6 L395 -1.7 L404 -6.3 L413 -11.0 L422 -15.8 L431 -20.7 L440 -25.5 L449 -30.2 L458 -34.7 L467 -39.1 L476 -43.2 L485 -47.2 L494 -51.0 L503 -54.7 L512 -58.4 L521 -62.1 L530 -65.9 L539 -70.0 L548 -74.3 L557 -79.0 L566 -84.1 L575 -89.5 L584 -95.4 L593 -101.7 L602 -108.4 L611 -115.4 L620 -122.6 L629 -130.0 M-10 48.0 L-1 48.4 L8 48.9 L17 49.4 L26 50.2 L35 51.1 L44 52.3 L53 53.6 L62 55.1 L71 56.7 L80 58.3 L89 59.8 L98 61.3 L107 62.5 L116 63.4 L125 64.0 L134 64.2 L143 64.0 L152 63.4 L161 62.3 L170 60.9 L179 59.2 L188 57.3 L197 55.1 L206 52.9 L215 50.7 L224 48.6 L233 46.6 L242 44.7 L251 43.1 L260 41.6 L269 40.3 L278 39.2 L287 38.2 L296 37.2 L305 36.1 L314 34.9 L323 33.4 L332 31.7 L341 29.6 L350 27.2 L359 24.3 L368 21.0 L377 17.3 L386 13.2 L395 8.9 L404 4.3 L413 -0.5 L422 -5.3 L431 -10.1 L440 -14.9 L449 -19.5 L458 -24.0 L467 -28.2 L476 -32.3 L485 -36.1 L494 -39.9 L503 -43.5 L512 -47.2 L521 -50.9 L530 -54.7 L539 -58.8 L548 -63.2 L557 -68.0 L566 -73.1 L575 -78.6 L584 -84.6 L593 -91.0 L602 -97.7 L611 -104.7 L620 -111.9 L629 -119.3 M-10 60.7 L-1 61.1 L8 61.6 L17 62.1 L26 62.9 L35 63.9 L44 65.0 L53 66.4 L62 67.9 L71 69.4 L80 71.0 L89 72.5 L98 73.8 L107 74.9 L116 75.7 L125 76.2 L134 76.2 L143 75.8 L152 75.1 L161 73.9 L170 72.4 L179 70.6 L188 68.5 L197 66.4 L206 64.1 L215 61.9 L224 59.8 L233 57.8 L242 56.0 L251 54.4 L260 53.0 L269 51.8 L278 50.7 L287 49.7 L296 48.7 L305 47.5 L314 46.3 L323 44.8 L332 43.0 L341 40.8 L350 38.2 L359 35.2 L368 31.8 L377 28.0 L386 23.9 L395 19.4 L404 14.8 L413 10.0 L422 5.2 L431 0.4 L440 -4.3 L449 -8.8 L458 -13.2 L467 -17.3 L476 -21.3 L485 -25.1 L494 -28.8 L503 -32.4 L512 -36.0 L521 -39.7 L530 -43.6 L539 -47.7 L548 -52.1 L557 -56.9 L566 -62.1 L575 -67.8 L584 -73.8 L593 -80.2 L602 -87.0 L611 -94.0 L620 -101.2 L629 -108.6 M-10 73.5 L-1 73.9 L8 74.3 L17 74.9 L26 75.7 L35 76.6 L44 77.8 L53 79.1 L62 80.6 L71 82.1 L80 83.6 L89 85.1 L98 86.3 L107 87.3 L116 88.0 L125 88.3 L134 88.2 L143 87.7 L152 86.8 L161 85.5 L170 83.8 L179 81.9 L188 79.8 L197 77.6 L206 75.4 L215 73.2 L224 71.1 L233 69.1 L242 67.4 L251 65.8 L260 64.5 L269 63.3 L278 62.2 L287 61.2 L296 60.2 L305 59.0 L314 57.7 L323 56.1 L332 54.2 L341 51.9 L350 49.2 L359 46.1 L368 42.6 L377 38.7 L386 34.5 L395 30.0 L404 25.3 L413 20.6 L422 15.8 L431 11.0 L440 6.4 L449 1.9 L458 -2.3 L467 -6.4 L476 -10.3 L485 -14.0 L494 -17.6 L503 -21.2 L512 -24.8 L521 -28.5 L530 -32.4 L539 -36.6 L548 -41.1 L557 -45.9 L566 -51.2 L575 -56.9 L584 -63.0 L593 -69.5 L602 -76.3 L611 -83.3 L620 -90.6 L629 -97.9 M-10 86.3 L-1 86.6 L8 87.0 L17 87.6 L26 88.4 L35 89.4 L44 90.6 L53 91.9 L62 93.4 L71 94.9 L80 96.3 L89 97.7 L98 98.8 L107 99.7 L116 100.2 L125 100.4 L134 100.1 L143 99.5 L152 98.4 L161 97.0 L170 95.2 L179 93.3 L188 91.1 L197 88.9 L206 86.6 L215 84.4 L224 82.3 L233 80.4 L242 78.7 L251 77.2 L260 75.9 L269 74.8 L278 73.7 L287 72.7 L296 71.6 L305 70.5 L314 69.1 L323 67.4 L332 65.4 L341 63.0 L350 60.2 L359 57.0 L368 53.3 L377 49.4 L386 45.1 L395 40.6 L404 35.9 L413 31.1 L422 26.4 L431 21.7 L440 17.1 L449 12.7 L458 8.5 L467 4.5 L476 0.8 L485 -2.9 L494 -6.5 L503 -10.0 L512 -13.6 L521 -17.3 L530 -21.2 L539 -25.4 L548 -30.0 L557 -35.0 L566 -40.3 L575 -46.1 L584 -52.3 L593 -58.8 L602 -65.6 L611 -72.7 L620 -79.9 L629 -87.1 M-10 99.1 L-1 99.4 L8 99.8 L17 100.4 L26 101.2 L35 102.2 L44 103.4 L53 104.7 L62 106.2 L71 107.6 L80 109.0 L89 110.3 L98 111.3 L107 112.0 L116 112.4 L125 112.5 L134 112.1 L143 111.3 L152 110.1 L161 108.5 L170 106.7 L179 104.6 L188 102.4 L197 100.1 L206 97.8 L215 95.7 L224 93.6 L233 91.8 L242 90.1 L251 88.7 L260 87.4 L269 86.3 L278 85.3 L287 84.2 L296 83.1 L305 81.9 L314 80.4 L323 78.7 L332 76.6 L341 74.0 L350 71.1 L359 67.8 L368 64.1 L377 60.0 L386 55.7 L395 51.1 L404 46.4 L413 41.7 L422 36.9 L431 32.3 L440 27.8 L449 23.5 L458 19.4 L467 15.5 L476 11.8 L485 8.2 L494 4.7 L503 1.2 L512 -2.4 L521 -6.1 L530 -10.1 L539 -14.4 L548 -19.0 L557 -24.0 L566 -29.4 L575 -35.3 L584 -41.5 L593 -48.1 L602 -54.9 L611 -62.0 L620 -69.2 L629 -76.4 M-10 111.9 L-1 112.2 L8 112.6 L17 113.2 L26 114.0 L35 115.1 L44 116.2 L53 117.6 L62 119.0 L71 120.4 L80 121.7 L89 122.9 L98 123.8 L107 124.4 L116 124.6 L125 124.5 L134 124.0 L143 123.0 L152 121.7 L161 120.0 L170 118.1 L179 115.9 L188 113.7 L197 111.4 L206 109.1 L215 106.9 L224 105.0 L233 103.1 L242 101.6 L251 100.2 L260 98.9 L269 97.8 L278 96.8 L287 95.8 L296 94.6 L305 93.3 L314 91.8 L323 89.9 L332 87.7 L341 85.1 L350 82.1 L359 78.6 L368 74.8 L377 70.7 L386 66.3 L395 61.7 L404 57.0 L413 52.2 L422 47.5 L431 43.0 L440 38.6 L449 34.3 L458 30.3 L467 26.5 L476 22.9 L485 19.4 L494 15.9 L503 12.4 L512 8.8 L521 5.1 L530 1.0 L539 -3.3 L548 -8.0 L557 -13.1 L566 -18.6 L575 -24.5 L584 -30.8 L593 -37.4 L602 -44.3 L611 -51.3 L620 -58.5 L629 -65.6 M-10 124.8 L-1 125.0 L8 125.4 L17 126.1 L26 126.9 L35 127.9 L44 129.1 L53 130.4 L62 131.8 L71 133.1 L80 134.4 L89 135.4 L98 136.2 L107 136.7 L116 136.8 L125 136.5 L134 135.8 L143 134.7 L152 133.3 L161 131.5 L170 129.5 L179 127.2 L188 124.9 L197 122.6 L206 120.4 L215 118.3 L224 116.3 L233 114.5 L242 113.0 L251 111.6 L260 110.5 L269 109.4 L278 108.4 L287 107.3 L296 106.1 L305 104.8 L314 103.1 L323 101.2 L332 98.8 L341 96.1 L350 92.9 L359 89.4 L368 85.5 L377 81.3 L386 76.8 L395 72.2 L404 67.5 L413 62.8 L422 58.2 L431 53.7 L440 49.3 L449 45.2 L458 41.3 L467 37.5 L476 34.0 L485 30.5 L494 27.1 L503 23.6 L512 20.0 L521 16.2 L530 12.2 L539 7.8 L548 3.0 L557 -2.2 L566 -7.8 L575 -13.8 L584 -20.1 L593 -26.8 L602 -33.6 L611 -40.7 L620 -47.8 L629 -54.9 M-10 137.6 L-1 137.9 L8 138.3 L17 138.9 L26 139.8 L35 140.8 L44 142.0 L53 143.3 L62 144.6 L71 145.9 L80 147.0 L89 148.0 L98 148.7 L107 149.0 L116 149.0 L125 148.5 L134 147.7 L143 146.4 L152 144.8 L161 143.0 L170 140.8 L179 138.6 L188 136.2 L197 133.9 L206 131.7 L215 129.6 L224 127.7 L233 126.0 L242 124.5 L251 123.2 L260 122.0 L269 120.9 L278 119.9 L287 118.8 L296 117.6 L305 116.2 L314 114.4 L323 112.4 L332 109.9 L341 107.1 L350 103.8 L359 100.2 L368 96.2 L377 91.9 L386 87.4 L395 82.8 L404 78.1 L413 73.4 L422 68.8 L431 64.4 L440 60.1 L449 56.1 L458 52.2 L467 48.6 L476 45.1 L485 41.7 L494 38.3 L503 34.8 L512 31.2 L521 27.4 L530 23.2 L539 18.8 L548 13.9 L557 8.7 L566 3.0 L575 -3.0 L584 -9.4 L593 -16.1 L602 -23.0 L611 -30.0 L620 -37.0 L629 -44.1 M-10 150.5 L-1 150.7 L8 151.2 L17 151.8 L26 152.7 L35 153.7 L44 154.9 L53 156.1 L62 157.4 L71 158.6 L80 159.7 L89 160.5 L98 161.1 L107 161.3 L116 161.1 L125 160.5 L134 159.5 L143 158.1 L152 156.4 L161 154.4 L170 152.2 L179 149.9 L188 147.5 L197 145.2 L206 143.0 L215 140.9 L224 139.1 L233 137.4 L242 136.0 L251 134.7 L260 133.6 L269 132.5 L278 131.5 L287 130.3 L296 129.1 L305 127.5 L314 125.7 L323 123.6 L332 121.0 L341 118.0 L350 114.7 L359 110.9 L368 106.8 L377 102.5 L386 98.0 L395 93.3 L404 88.6 L413 84.0 L422 79.5 L431 75.1 L440 70.9 L449 67.0 L458 63.2 L467 59.7 L476 56.2 L485 52.8 L494 49.5 L503 46.0 L512 42.4 L521 38.5 L530 34.3 L539 29.8 L548 24.8 L557 19.5 L566 13.8 L575 7.7 L584 1.2 L593 -5.5 L602 -12.3 L611 -19.3 L620 -26.3 L629 -33.3 M-10 163.4 L-1 163.6 L8 164.1 L17 164.7 L26 165.6 L35 166.6 L44 167.8 L53 169.0 L62 170.2 L71 171.4 L80 172.3 L89 173.1 L98 173.5 L107 173.5 L116 173.2 L125 172.4 L134 171.3 L143 169.8 L152 167.9 L161 165.9 L170 163.6 L179 161.2 L188 158.9 L197 156.5 L206 154.4 L215 152.3 L224 150.5 L233 148.9 L242 147.5 L251 146.3 L260 145.2 L269 144.1 L278 143.0 L287 141.9 L296 140.5 L305 138.9 L314 137.0 L323 134.7 L332 132.0 L341 129.0 L350 125.5 L359 121.6 L368 117.5 L377 113.1 L386 108.5 L395 103.9 L404 99.2 L413 94.6 L422 90.2 L431 85.9 L440 81.8 L449 77.9 L458 74.2 L467 70.7 L476 67.4 L485 64.0 L494 60.6 L503 57.2 L512 53.5 L521 49.6 L530 45.4 L539 40.7 L548 35.7 L557 30.3 L566 24.5 L575 18.3 L584 11.9 L593 5.2 L602 -1.7 L611 -8.6 L620 -15.6 L629 -22.5 M-10 176.3 L-1 176.5 L8 177.0 L17 177.7 L26 178.5 L35 179.6 L44 180.7 L53 181.9 L62 183.1 L71 184.1 L80 185.0 L89 185.6 L98 185.8 L107 185.7 L116 185.2 L125 184.3 L134 183.1 L143 181.4 L152 179.5 L161 177.3 L170 175.0 L179 172.6 L188 170.2 L197 167.9 L206 165.7 L215 163.7 L224 162.0 L233 160.4 L242 159.0 L251 157.8 L260 156.7 L269 155.7 L278 154.6 L287 153.4 L296 152.0 L305 150.3 L314 148.2 L323 145.9 L332 143.1 L341 139.9 L350 136.3 L359 132.3 L368 128.1 L377 123.7 L386 119.1 L395 114.5 L404 109.8 L413 105.3 L422 100.9 L431 96.7 L440 92.7 L449 88.9 L458 85.3 L467 81.8 L476 78.5 L485 75.2 L494 71.8 L503 68.4 L512 64.7 L521 60.7 L530 56.4 L539 51.7 L548 46.6 L557 41.1 L566 35.2 L575 29.0 L584 22.5 L593 15.8 L602 9.0 L611 2.0 L620 -4.8 L629 -11.6 M-10 189.2 L-1 189.5 L8 189.9 L17 190.6 L26 191.5 L35 192.5 L44 193.6 L53 194.8 L62 195.9 L71 196.9 L80 197.6 L89 198.1 L98 198.2 L107 197.9 L116 197.3 L125 196.2 L134 194.8 L143 193.0 L152 191.0 L161 188.7 L170 186.4 L179 183.9 L188 181.5 L197 179.2 L206 177.1 L215 175.2 L224 173.4 L233 171.9 L242 170.6 L251 169.4 L260 168.4 L269 167.3 L278 166.2 L287 164.9 L296 163.4 L305 161.6 L314 159.5 L323 157.0 L332 154.0 L341 150.7 L350 147.1 L359 143.0 L368 138.8 L377 134.3 L386 129.7 L395 125.0 L404 120.4 L413 115.9 L422 111.6 L431 107.5 L440 103.6 L449 99.9 L458 96.3 L467 93.0 L476 89.7 L485 86.4 L494 83.0 L503 79.5 L512 75.8 L521 71.8 L530 67.4 L539 62.6 L548 57.4 L557 51.9 L566 45.9 L575 39.7 L584 33.1 L593 26.4 L602 19.6 L611 12.7 L620 5.9 L629 -0.7 M-10 202.2 L-1 202.5 L8 202.9 L17 203.6 L26 204.5 L35 205.5 L44 206.6 L53 207.7 L62 208.7 L71 209.6 L80 210.2 L89 210.5 L98 210.5 L107 210.1 L116 209.3 L125 208.1 L134 206.5 L143 204.6 L152 202.5 L161 200.2 L170 197.7 L179 195.3 L188 192.9 L197 190.6 L206 188.5 L215 186.6 L224 185.0 L233 183.5 L242 182.2 L251 181.1 L260 180.0 L269 178.9 L278 177.7 L287 176.4 L296 174.8 L305 172.9 L314 170.7 L323 168.0 L332 165.0 L341 161.6 L350 157.8 L359 153.7 L368 149.4 L377 144.9 L386 140.2 L395 135.6 L404 131.1 L413 126.6 L422 122.4 L431 118.3 L440 114.5 L449 110.9 L458 107.4 L467 104.1 L476 100.8 L485 97.6 L494 94.2 L503 90.7 L512 86.9 L521 82.8 L530 78.3 L539 73.5 L548 68.2 L557 62.6 L566 56.6 L575 50.3 L584 43.8 L593 37.0 L602 30.3 L611 23.5 L620 16.7 L629 10.1 M-10 215.2 L-1 215.5 L8 215.9 L17 216.6 L26 217.5 L35 218.5 L44 219.6 L53 220.6 L62 221.5 L71 222.3 L80 222.8 L89 223.0 L98 222.8 L107 222.2 L116 221.3 L125 219.9 L134 218.2 L143 216.2 L152 214.0 L161 211.6 L170 209.1 L179 206.7 L188 204.3 L197 202.0 L206 200.0 L215 198.1 L224 196.5 L233 195.1 L242 193.8 L251 192.7 L260 191.6 L269 190.5 L278 189.3 L287 187.8 L296 186.2 L305 184.2 L314 181.8 L323 179.1 L332 175.9 L341 172.4 L350 168.5 L359 164.4 L368 160.0 L377 155.4 L386 150.8 L395 146.2 L404 141.7 L413 137.3 L422 133.2 L431 129.2 L440 125.4 L449 121.9 L458 118.5 L467 115.3 L476 112.0 L485 108.8 L494 105.4 L503 101.8 L512 98.0 L521 93.8 L530 89.3 L539 84.3 L548 79.0 L557 73.3 L566 67.3 L575 60.9 L584 54.4 L593 47.7 L602 40.9 L611 34.2 L620 27.5 L629 21.1 M-10 228.2 L-1 228.5 L8 229.0 L17 229.7 L26 230.5 L35 231.5 L44 232.5 L53 233.5 L62 234.3 L71 235.0 L80 235.3 L89 235.4 L98 235.1 L107 234.3 L116 233.2 L125 231.7 L134 229.9 L143 227.8 L152 225.5 L161 223.0 L170 220.5 L179 218.1 L188 215.7 L197 213.5 L206 211.4 L215 209.6 L224 208.1 L233 206.7 L242 205.4 L251 204.3 L260 203.2 L269 202.1 L278 200.8 L287 199.3 L296 197.5 L305 195.5 L314 193.0 L323 190.1 L332 186.9 L341 183.2 L350 179.3 L359 175.0 L368 170.6 L377 166.0 L386 161.4 L395 156.8 L404 152.4 L413 148.1 L422 144.0 L431 140.1 L440 136.4 L449 133.0 L458 129.6 L467 126.4 L476 123.2 L485 120.0 L494 116.6 L503 112.9 L512 109.0 L521 104.8 L530 100.2 L539 95.2 L548 89.8 L557 84.0 L566 77.9 L575 71.5 L584 65.0 L593 58.3 L602 51.6 L611 44.9 L620 38.4 L629 32.0 M-10 241.3 L-1 241.5 L8 242.1 L17 242.7 L26 243.6 L35 244.5 L44 245.5 L53 246.4 L62 247.1 L71 247.6 L80 247.9 L89 247.8 L98 247.3 L107 246.4 L116 245.2 L125 243.5 L134 241.6 L143 239.4 L152 237.0 L161 234.5 L170 231.9 L179 229.5 L188 227.1 L197 224.9 L206 222.9 L215 221.2 L224 219.6 L233 218.3 L242 217.1 L251 216.0 L260 214.8 L269 213.7 L278 212.3 L287 210.8 L296 208.9 L305 206.7 L314 204.1 L323 201.1 L332 197.7 L341 194.0 L350 190.0 L359 185.7 L368 181.2 L377 176.6 L386 172.0 L395 167.5 L404 163.1 L413 158.8 L422 154.8 L431 151.0 L440 147.4 L449 144.0 L458 140.8 L467 137.6 L476 134.4 L485 131.1 L494 127.7 L503 124.1 L512 120.1 L521 115.8 L530 111.1 L539 106.0 L548 100.5 L557 94.7 L566 88.5 L575 82.1 L584 75.6 L593 68.9 L602 62.3 L611 55.7 L620 49.2 L629 42.9 M-10 254.3 L-1 254.6 L8 255.1 L17 255.8 L26 256.7 L35 257.6 L44 258.5 L53 259.3 L62 259.9 L71 260.3 L80 260.4 L89 260.2 L98 259.5 L107 258.5 L116 257.1 L125 255.3 L134 253.2 L143 250.9 L152 248.5 L161 245.9 L170 243.4 L179 240.9 L188 238.6 L197 236.4 L206 234.5 L215 232.8 L224 231.3 L233 229.9 L242 228.7 L251 227.6 L260 226.5 L269 225.2 L278 223.8 L287 222.2 L296 220.2 L305 217.9 L314 215.2 L323 212.1 L332 208.6 L341 204.8 L350 200.6 L359 196.3 L368 191.8 L377 187.2 L386 182.6 L395 178.1 L404 173.8 L413 169.6 L422 165.7 L431 162.0 L440 158.5 L449 155.1 L458 151.9 L467 148.8 L476 145.6 L485 142.3 L494 138.9 L503 135.1 L512 131.1 L521 126.7 L530 121.9 L539 116.8 L548 111.2 L557 105.3 L566 99.1 L575 92.7 L584 86.2 L593 79.6 L602 73.0 L611 66.5 L620 60.1 L629 53.9 M-10 267.4 L-1 267.7 L8 268.3 L17 268.9 L26 269.7 L35 270.6 L44 271.4 L53 272.1 L62 272.7 L71 272.9 L80 272.9 L89 272.5 L98 271.7 L107 270.5 L116 269.0 L125 267.1 L134 264.9 L143 262.5 L152 260.0 L161 257.4 L170 254.8 L179 252.3 L188 250.0 L197 247.9 L206 246.0 L215 244.4 L224 242.9 L233 241.6 L242 240.4 L251 239.3 L260 238.1 L269 236.8 L278 235.3 L287 233.6 L296 231.5 L305 229.1 L314 226.2 L323 223.0 L332 219.4 L341 215.5 L350 211.3 L359 206.9 L368 202.4 L377 197.8 L386 193.2 L395 188.8 L404 184.5 L413 180.4 L422 176.6 L431 173.0 L440 169.5 L449 166.3 L458 163.1 L467 160.0 L476 156.8 L485 153.5 L494 150.0 L503 146.2 L512 142.1 L521 137.6 L530 132.8 L539 127.5 L548 121.9 L557 115.9 L566 109.7 L575 103.3 L584 96.8 L593 90.2 L602 83.7 L611 77.3 L620 71.0 L629 65.0 M-10 280.6 L-1 280.9 L8 281.4 L17 282.1 L26 282.8 L35 283.6 L44 284.4 L53 285.0 L62 285.4 L71 285.6 L80 285.4 L89 284.8 L98 283.9 L107 282.5 L116 280.8 L125 278.8 L134 276.5 L143 274.0 L152 271.4 L161 268.8 L170 266.3 L179 263.8 L188 261.5 L197 259.4 L206 257.6 L215 256.0 L224 254.6 L233 253.3 L242 252.1 L251 251.0 L260 249.7 L269 248.4 L278 246.8 L287 245.0 L296 242.8 L305 240.2 L314 237.3 L323 233.9 L332 230.3 L341 226.2 L350 222.0 L359 217.5 L368 213.0 L377 208.4 L386 203.9 L395 199.5 L404 195.3 L413 191.3 L422 187.5 L431 184.0 L440 180.6 L449 177.4 L458 174.3 L467 171.1 L476 168.0 L485 164.6 L494 161.1 L503 157.3 L512 153.1 L521 148.5 L530 143.6 L539 138.2 L548 132.6 L557 126.6 L566 120.3 L575 113.9 L584 107.4 L593 100.9 L602 94.4 L611 88.1 L620 81.9 L629 76.0 M-10 293.7 L-1 294.0 L8 294.5 L17 295.2 L26 295.9 L35 296.7 L44 297.3 L53 297.9 L62 298.2 L71 298.2 L80 297.8 L89 297.1 L98 296.0 L107 294.5 L116 292.7 L125 290.5 L134 288.1 L143 285.6 L152 282.9 L161 280.3 L170 277.7 L179 275.3 L188 273.0 L197 271.0 L206 269.2 L215 267.6 L224 266.2 L233 265.0 L242 263.8 L251 262.6 L260 261.4 L269 259.9 L278 258.3 L287 256.3 L296 254.0 L305 251.4 L314 248.3 L323 244.8 L332 241.0 L341 237.0 L350 232.6 L359 228.1 L368 223.6 L377 219.0 L386 214.6 L395 210.2 L404 206.1 L413 202.2 L422 198.5 L431 195.0 L440 191.7 L449 188.5 L458 185.4 L467 182.3 L476 179.2 L485 175.8 L494 172.2 L503 168.3 L512 164.0 L521 159.4 L530 154.4 L539 148.9 L548 143.2 L557 137.2 L566 130.9 L575 124.5 L584 118.0 L593 111.5 L602 105.2 L611 98.9 L620 92.9 L629 87.1 M-10 306.9 L-1 307.2 L8 307.7 L17 308.4 L26 309.0 L35 309.7 L44 310.3 L53 310.7 L62 310.9 L71 310.7 L80 310.2 L89 309.4 L98 308.1 L107 306.5 L116 304.5 L125 302.2 L134 299.7 L143 297.1 L152 294.4 L161 291.8 L170 289.2 L179 286.8 L188 284.6 L197 282.6 L206 280.8 L215 279.3 L224 277.9 L233 276.7 L242 275.5 L251 274.3 L260 273.0 L269 271.5 L278 269.7 L287 267.7 L296 265.3 L305 262.5 L314 259.3 L323 255.7 L332 251.8 L341 247.7 L350 243.3 L359 238.8 L368 234.2 L377 229.7 L386 225.2 L395 221.0 L404 216.9 L413 213.1 L422 209.4 L431 206.0 L440 202.8 L449 199.7 L458 196.6 L467 193.5 L476 190.3 L485 186.9 L494 183.3 L503 179.3 L512 174.9 L521 170.2 L530 165.1 L539 159.6 L548 153.8 L557 147.7 L566 141.5 L575 135.1 L584 128.6 L593 122.2 L602 115.9 L611 109.8 L620 103.9 L629 98.2 M-10 320.1 L-1 320.4 L8 320.9 L17 321.5 L26 322.2 L35 322.8 L44 323.3 L53 323.5 L62 323.6 L71 323.3 L80 322.6 L89 321.6 L98 320.2 L107 318.4 L116 316.3 L125 313.9 L134 311.3 L143 308.7 L152 306.0 L161 303.3 L170 300.7 L179 298.3 L188 296.2 L197 294.2 L206 292.5 L215 291.0 L224 289.7 L233 288.4 L242 287.2 L251 286.0 L260 284.6 L269 283.0 L278 281.2 L287 279.0 L296 276.5 L305 273.5 L314 270.2 L323 266.6 L332 262.6 L341 258.3 L350 253.9 L359 249.4 L368 244.8 L377 240.3 L386 235.9 L395 231.7 L404 227.7 L413 224.0 L422 220.4 L431 217.1 L440 213.9 L449 210.9 L458 207.8 L467 204.7 L476 201.5 L485 198.0 L494 194.3 L503 190.3 L512 185.8 L521 181.0 L530 175.8 L539 170.3 L548 164.4 L557 158.3 L566 152.0 L575 145.7 L584 139.3 L593 132.9 L602 126.7 L611 120.7 L620 114.9 L629 109.3 M-10 333.4 L-1 333.7 L8 334.1 L17 334.7 L26 335.3 L35 335.8 L44 336.2 L53 336.4 L62 336.3 L71 335.8 L80 335.0 L89 333.8 L98 332.2 L107 330.3 L116 328.1 L125 325.6 L134 322.9 L143 320.2 L152 317.5 L161 314.8 L170 312.3 L179 309.9 L188 307.8 L197 305.9 L206 304.2 L215 302.7 L224 301.4 L233 300.1 L242 298.9 L251 297.6 L260 296.2 L269 294.5 L278 292.6 L287 290.3 L296 287.6 L305 284.6 L314 281.2 L323 277.4 L332 273.3 L341 269.0 L350 264.6 L359 260.0 L368 255.5 L377 251.0 L386 246.7 L395 242.5 L404 238.6 L413 234.9 L422 231.5 L431 228.2 L440 225.1 L449 222.0 L458 219.0 L467 215.9 L476 212.6 L485 209.1 L494 205.3 L503 201.2 L512 196.7 L521 191.8 L530 186.5 L539 180.9 L548 175.0 L557 168.9 L566 162.6 L575 156.2 L584 149.9 L593 143.6 L602 137.5 L611 131.6 L620 125.9 L629 120.4 M-10 346.6 L-1 346.9 L8 347.4 L17 347.9 L26 348.4 L35 348.8 L44 349.1 L53 349.2 L62 348.9 L71 348.3 L80 347.3 L89 346.0 L98 344.3 L107 342.2 L116 339.8 L125 337.3 L134 334.5 L143 331.8 L152 329.0 L161 326.3 L170 323.8 L179 321.5 L188 319.4 L197 317.5 L206 315.9 L215 314.4 L224 313.1 L233 311.9 L242 310.6 L251 309.3 L260 307.8 L269 306.0 L278 304.0 L287 301.6 L296 298.8 L305 295.6 L314 292.1 L323 288.2 L332 284.0 L341 279.7 L350 275.2 L359 270.6 L368 266.1 L377 261.7 L386 257.4 L395 253.3 L404 249.5 L413 245.9 L422 242.5 L431 239.3 L440 236.2 L449 233.2 L458 230.2 L467 227.1 L476 223.8 L485 220.2 L494 216.4 L503 212.1 L512 207.5 L521 202.6 L530 197.2 L539 191.5 L548 185.6 L557 179.4 L566 173.2 L575 166.8 L584 160.6 L593 154.4 L602 148.4 L611 142.5 L620 137.0 L629 131.6 M-10 359.9 L-1 360.2 L8 360.6 L17 361.1 L26 361.5 L35 361.9 L44 362.0 L53 361.9 L62 361.5 L71 360.8 L80 359.6 L89 358.1 L98 356.3 L107 354.1 L116 351.6 L125 348.9 L134 346.2 L143 343.3 L152 340.6 L161 337.9 L170 335.4 L179 333.1 L188 331.0 L197 329.2 L206 327.6 L215 326.2 L224 324.9 L233 323.6 L242 322.3 L251 320.9 L260 319.3 L269 317.5 L278 315.3 L287 312.8 L296 309.9 L305 306.6 L314 302.9 L323 299.0 L332 294.8 L341 290.4 L350 285.8 L359 281.3 L368 276.8 L377 272.4 L386 268.2 L395 264.2 L404 260.4 L413 256.9 L422 253.6 L431 250.5 L440 247.4 L449 244.4 L458 241.4 L467 238.2 L476 234.9 L485 231.3 L494 227.3 L503 223.0 L512 218.3 L521 213.3 L530 207.9 L539 202.1 L548 196.2 L557 190.0 L566 183.7 L575 177.5 L584 171.2 L593 165.1 L602 159.2 L611 153.5 L620 148.1 L629 142.8 M-10 373.2 L-1 373.5 L8 373.9 L17 374.3 L26 374.6 L35 374.9 L44 374.9 L53 374.7 L62 374.1 L71 373.2 L80 371.9 L89 370.3 L98 368.2 L107 365.9 L116 363.3 L125 360.6 L134 357.8 L143 354.9 L152 352.1 L161 349.5 L170 347.0 L179 344.7 L188 342.7 L197 341.0 L206 339.4 L215 338.0 L224 336.7 L233 335.4 L242 334.0 L251 332.6 L260 330.9 L269 328.9 L278 326.7 L287 324.0 L296 321.0 L305 317.6 L314 313.8 L323 309.8 L332 305.5 L341 301.0 L350 296.5 L359 291.9 L368 287.5 L377 283.1 L386 279.0 L395 275.1 L404 271.4 L413 267.9 L422 264.7 L431 261.6 L440 258.6 L449 255.6 L458 252.6 L467 249.4 L476 246.0 L485 242.3 L494 238.3 L503 233.9 L512 229.1 L521 224.0 L530 218.5 L539 212.7 L548 206.7 L557 200.6 L566 194.3 L575 188.1 L584 181.9 L593 175.9 L602 170.1 L611 164.5 L620 159.2 L629 154.0 M-10 386.5 L-1 386.8 L8 387.1 L17 387.5 L26 387.7 L35 387.9 L44 387.8 L53 387.4 L62 386.7 L71 385.6 L80 384.2 L89 382.4 L98 380.2 L107 377.8 L116 375.1 L125 372.3 L134 369.4 L143 366.5 L152 363.7 L161 361.1 L170 358.6 L179 356.4 L188 354.4 L197 352.7 L206 351.2 L215 349.8 L224 348.4 L233 347.1 L242 345.7 L251 344.2 L260 342.4 L269 340.4 L278 338.0 L287 335.2 L296 332.0 L305 328.5 L314 324.7 L323 320.5 L332 316.2 L341 311.7 L350 307.1 L359 302.6 L368 298.2 L377 293.9 L386 289.8 L395 286.0 L404 282.4 L413 279.0 L422 275.8 L431 272.8 L440 269.8 L449 266.8 L458 263.8 L467 260.5 L476 257.1 L485 253.3 L494 249.2 L503 244.7 L512 239.9 L521 234.7 L530 229.1 L539 223.3 L548 217.3 L557 211.1 L566 204.9 L575 198.7 L584 192.6 L593 186.7 L602 181.0 L611 175.5 L620 170.3 L629 165.3 M-10 399.9 L-1 400.1 L8 400.4 L17 400.7 L26 400.9 L35 400.9 L44 400.7 L53 400.1 L62 399.3 L71 398.0 L80 396.4 L89 394.4 L98 392.1 L107 389.6 L116 386.8 L125 383.9 L134 381.0 L143 378.1 L152 375.3 L161 372.7 L170 370.3 L179 368.1 L188 366.2 L197 364.5 L206 363.0 L215 361.6 L224 360.2 L233 358.9 L242 357.4 L251 355.8 L260 353.9 L269 351.8 L278 349.2 L287 346.3 L296 343.1 L305 339.4 L314 335.5 L323 331.3 L332 326.9 L341 322.3 L350 317.8 L359 313.3 L368 308.9 L377 304.7 L386 300.7 L395 296.9 L404 293.4 L413 290.1 L422 286.9 L431 283.9 L440 281.0 L449 278.0 L458 274.9 L467 271.7 L476 268.1 L485 264.3 L494 260.1 L503 255.6 L512 250.6 L521 245.3 L530 239.7 L539 233.9 L548 227.8 L557 221.7 L566 215.5 L575 209.4 L584 203.4 L593 197.6 L602 192.0 L611 186.6 L620 181.5 L629 176.6 M-10 413.2 L-1 413.4 L8 413.7 L17 413.9 L26 414.0 L35 413.9 L44 413.5 L53 412.8 L62 411.8 L71 410.4 L80 408.6 L89 406.5 L98 404.1 L107 401.4 L116 398.5 L125 395.6 L134 392.6 L143 389.7 L152 386.9 L161 384.3 L170 382.0 L179 379.8 L188 377.9 L197 376.3 L206 374.8 L215 373.4 L224 372.0 L233 370.6 L242 369.1 L251 367.4 L260 365.4 L269 363.1 L278 360.5 L287 357.5 L296 354.1 L305 350.3 L314 346.3 L323 342.0 L332 337.5 L341 333.0 L350 328.4 L359 324.0 L368 319.6 L377 315.5 L386 311.5 L395 307.8 L404 304.4 L413 301.2 L422 298.1 L431 295.1 L440 292.2 L449 289.2 L458 286.1 L467 282.8 L476 279.2 L485 275.3 L494 271.0 L503 266.3 L512 261.3 L521 256.0 L530 250.3 L539 244.4 L548 238.4 L557 232.2 L566 226.1 L575 220.0 L584 214.1 L593 208.4 L602 202.9 L611 197.7 L620 192.7 L629 187.9 M-10 426.6 L-1 426.8 L8 426.9 L17 427.1 L26 427.0 L35 426.8 L44 426.3 L53 425.5 L62 424.3 L71 422.7 L80 420.8 L89 418.5 L98 416.0 L107 413.2 L116 410.3 L125 407.3 L134 404.3 L143 401.3 L152 398.6 L161 396.0 L170 393.7 L179 391.6 L188 389.7 L197 388.1 L206 386.6 L215 385.2 L224 383.8 L233 382.4 L242 380.8 L251 379.0 L260 376.9 L269 374.5 L278 371.7 L287 368.6 L296 365.1 L305 361.2 L314 357.1 L323 352.7 L332 348.2 L341 343.7 L350 339.1 L359 334.7 L368 330.4 L377 326.3 L386 322.4 L395 318.8 L404 315.5 L413 312.3 L422 309.3 L431 306.3 L440 303.4 L449 300.4 L458 297.2 L467 293.9 L476 290.2 L485 286.2 L494 281.8 L503 277.1 L512 272.0 L521 266.6 L530 260.9 L539 254.9 L548 248.9 L557 242.8 L566 236.7 L575 230.7 L584 224.9 L593 219.3 L602 213.9 L611 208.8 L620 203.9 L629 199.2 M-10 440.0 L-1 440.1 L8 440.2 L17 440.2 L26 440.1 L35 439.8 L44 439.1 L53 438.1 L62 436.8 L71 435.0 L80 433.0 L89 430.6 L98 427.9 L107 425.0 L116 422.0 L125 418.9 L134 415.9 L143 413.0 L152 410.2 L161 407.7 L170 405.4 L179 403.4 L188 401.5 L197 399.9 L206 398.4 L215 397.0 L224 395.6 L233 394.1 L242 392.4 L251 390.5 L260 388.4 L269 385.8 L278 382.9 L287 379.6 L296 376.0 L305 372.1 L314 367.8 L323 363.4 L332 358.9 L341 354.3 L350 349.8 L359 345.4 L368 341.2 L377 337.2 L386 333.4 L395 329.8 L404 326.5 L413 323.4 L422 320.4 L431 317.5 L440 314.6 L449 311.6 L458 308.4 L467 304.9 L476 301.2 L485 297.1 L494 292.7 L503 287.8 L512 282.7 L521 277.2 L530 271.4 L539 265.5 L548 259.4 L557 253.4 L566 247.3 L575 241.4 L584 235.7 L593 230.2 L602 224.9 L611 219.9 L620 215.1 L629 210.5 M-10 453.4 L-1 453.5 L8 453.5 L17 453.4 L26 453.2 L35 452.7 L44 451.9 L53 450.7 L62 449.2 L71 447.3 L80 445.1 L89 442.5 L98 439.8 L107 436.8 L116 433.7 L125 430.6 L134 427.6 L143 424.7 L152 421.9 L161 419.4 L170 417.2 L179 415.2 L188 413.4 L197 411.8 L206 410.3 L215 408.9 L224 407.4 L233 405.8 L242 404.1 L251 402.1 L260 399.8 L269 397.1 L278 394.1 L287 390.7 L296 386.9 L305 382.9 L314 378.6 L323 374.2 L332 369.6 L341 365.0 L350 360.5 L359 356.2 L368 352.0 L377 348.0 L386 344.3 L395 340.9 L404 337.6 L413 334.6 L422 331.6 L431 328.7 L440 325.8 L449 322.7 L458 319.5 L467 316.0 L476 312.2 L485 308.0 L494 303.5 L503 298.5 L512 293.3 L521 287.7 L530 282.0 L539 276.0 L548 270.0 L557 263.9 L566 258.0 L575 252.2 L584 246.5 L593 241.1 L602 236.0 L611 231.1 L620 226.4 L629 221.9 M-10 466.8 L-1 466.8 L8 466.8 L17 466.6 L26 466.2 L35 465.6 L44 464.6 L53 463.3 L62 461.6 L71 459.6 L80 457.2 L89 454.5 L98 451.6 L107 448.6 L116 445.4 L125 442.3 L134 439.3 L143 436.4 L152 433.7 L161 431.2 L170 429.0 L179 427.0 L188 425.2 L197 423.6 L206 422.1 L215 420.7 L224 419.2 L233 417.6 L242 415.7 L251 413.6 L260 411.2 L269 408.4 L278 405.2 L287 401.7 L296 397.9 L305 393.7 L314 389.4 L323 384.9 L332 380.3 L341 375.7 L350 371.3 L359 366.9 L368 362.8 L377 358.9 L386 355.3 L395 351.9 L404 348.8 L413 345.7 L422 342.8 L431 339.9 L440 337.0 L449 333.9 L458 330.6 L467 327.0 L476 323.1 L485 318.9 L494 314.2 L503 309.2 L512 303.9 L521 298.3 L530 292.5 L539 286.5 L548 280.5 L557 274.5 L566 268.6 L575 262.9 L584 257.4 L593 252.1 L602 247.1 L611 242.3 L620 237.7 L629 233.2 M-10 480.3 L-1 480.2 L8 480.0 L17 479.7 L26 479.2 L35 478.4 L44 477.3 L53 475.9 L62 474.0 L71 471.8 L80 469.3 L89 466.5 L98 463.5 L107 460.4 L116 457.2 L125 454.0 L134 451.0 L143 448.1 L152 445.4 L161 443.0 L170 440.8 L179 438.8 L188 437.1 L197 435.5 L206 434.0 L215 432.5 L224 431.0 L233 429.3 L242 427.3 L251 425.1 L260 422.5 L269 419.6 L278 416.3 L287 412.7 L296 408.8 L305 404.5 L314 400.1 L323 395.6 L332 391.0 L341 386.4 L350 382.0 L359 377.7 L368 373.7 L377 369.9 L386 366.3 L395 363.0 L404 359.9 L413 356.9 L422 354.0 L431 351.1 L440 348.2 L449 345.0 L458 341.7 L467 338.0 L476 334.0 L485 329.7 L494 325.0 L503 319.9 L512 314.5 L521 308.9 L530 303.0 L539 297.1 L548 291.1 L557 285.1 L566 279.3 L575 273.7 L584 268.3 L593 263.1 L602 258.2 L611 253.5 L620 249.0 L629 244.6 M-10 493.7 L-1 493.5 L8 493.3 L17 492.9 L26 492.2 L35 491.3 L44 490.0 L53 488.4 L62 486.4 L71 484.0 L80 481.4 L89 478.4 L98 475.3 L107 472.1 L116 468.9 L125 465.7 L134 462.7 L143 459.8 L152 457.2 L161 454.8 L170 452.6 L179 450.7 L188 449.0 L197 447.4 L206 445.9 L215 444.4 L224 442.7 L233 440.9 L242 438.9 L251 436.6 L260 433.9 L269 430.8 L278 427.4 L287 423.7 L296 419.6 L305 415.3 L314 410.9 L323 406.3 L332 401.7 L341 397.2 L350 392.8 L359 388.6 L368 384.6 L377 380.9 L386 377.4 L395 374.1 L404 371.1 L413 368.1 L422 365.2 L431 362.3 L440 359.3 L449 356.2 L458 352.7 L467 349.0 L476 344.9 L485 340.5 L494 335.7 L503 330.5 L512 325.1 L521 319.4 L530 313.5 L539 307.6 L548 301.6 L557 295.8 L566 290.0 L575 284.5 L584 279.2 L593 274.1 L602 269.3 L611 264.7 L620 260.3 L629 256.0 M-10 507.1 L-1 506.9 L8 506.5 L17 506.0 L26 505.2 L35 504.1 L44 502.7 L53 500.9 L62 498.7 L71 496.2 L80 493.4 L89 490.4 L98 487.2 L107 483.9 L116 480.7 L125 477.5 L134 474.4 L143 471.6 L152 469.0 L161 466.6 L170 464.5 L179 462.6 L188 460.9 L197 459.3 L206 457.8 L215 456.2 L224 454.5 L233 452.6 L242 450.5 L251 448.0 L260 445.2 L269 442.0 L278 438.5 L287 434.6 L296 430.5 L305 426.1 L314 421.6 L323 417.0 L332 412.4 L341 407.9 L350 403.6 L359 399.4 L368 395.5 L377 391.8 L386 388.4 L395 385.3 L404 382.2 L413 379.3 L422 376.5 L431 373.6 L440 370.5 L449 367.3 L458 363.8 L467 360.0 L476 355.8 L485 351.3 L494 346.4 L503 341.1 L512 335.6 L521 329.9 L530 324.1 L539 318.1 L548 312.2 L557 306.4 L566 300.8 L575 295.3 L584 290.1 L593 285.2 L602 280.4 L611 276.0 L620 271.6 L629 267.4 M-10 520.6 L-1 520.3 L8 519.8 L17 519.1 L26 518.2 L35 516.9 L44 515.3 L53 513.4 L62 511.0 L71 508.4 L80 505.5 L89 502.3 L98 499.1 L107 495.7 L116 492.4 L125 489.2 L134 486.2 L143 483.4 L152 480.8 L161 478.5 L170 476.4 L179 474.5 L188 472.8 L197 471.2 L206 469.7 L215 468.0 L224 466.3 L233 464.3 L242 462.0 L251 459.4 L260 456.5 L269 453.2 L278 449.5 L287 445.6 L296 441.3 L305 436.9 L314 432.3 L323 427.7 L332 423.1 L341 418.7 L350 414.4 L359 410.3 L368 406.4 L377 402.9 L386 399.5 L395 396.4 L404 393.4 L413 390.5 L422 387.7 L431 384.7 L440 381.7 L449 378.4 L458 374.8 L467 370.9 L476 366.6 L485 362.0 L494 357.0 L503 351.7 L512 346.2 L521 340.4 L530 334.6 L539 328.7 L548 322.8 L557 317.1 L566 311.5 L575 306.2 L584 301.1 L593 296.2 L602 291.6 L611 287.2 L620 283.0 L629 278.8 M-10 534.0 L-1 533.6 L8 533.0 L17 532.2 L26 531.1 L35 529.7 L44 527.9 L53 525.8 L62 523.3 L71 520.5 L80 517.5 L89 514.2 L98 510.9 L107 507.5 L116 504.2 L125 501.0 L134 498.0 L143 495.2 L152 492.6 L161 490.4 L170 488.3 L179 486.5 L188 484.8 L197 483.2 L206 481.5 L215 479.8 L224 478.0 L233 475.9 L242 473.5 L251 470.8 L260 467.8 L269 464.3 L278 460.6 L287 456.5 L296 452.2 L305 447.7 L314 443.1 L323 438.4 L332 433.9 L341 429.4 L350 425.2 L359 421.2 L368 417.4 L377 413.9 L386 410.6 L395 407.6 L404 404.6 L413 401.8 L422 398.9 L431 395.9 L440 392.8 L449 389.4 L458 385.8 L467 381.8 L476 377.4 L485 372.7 L494 367.7 L503 362.3 L512 356.7 L521 351.0 L530 345.1 L539 339.2 L548 333.4 L557 327.7 L566 322.3 L575 317.0 L584 312.1 L593 307.3 L602 302.8 L611 298.5 L620 294.3 L629 290.2 M-10 547.5 L-1 546.9 L8 546.2 L17 545.3 L26 544.0 L35 542.5 L44 540.5 L53 538.2 L62 535.6 L71 532.7 L80 529.5 L89 526.2 L98 522.8 L107 519.3 L116 516.0 L125 512.8 L134 509.8 L143 507.0 L152 504.5 L161 502.3 L170 500.3 L179 498.4 L188 496.7 L197 495.1 L206 493.4 L215 491.7 L224 489.7 L233 487.5 L242 485.0 L251 482.2 L260 479.0 L269 475.4 L278 471.6 L287 467.4 L296 463.0 L305 458.4 L314 453.8 L323 449.2 L332 444.6 L341 440.2 L350 436.1 L359 432.1 L368 428.4 L377 425.0 L386 421.8 L395 418.7 L404 415.8 L413 413.0 L422 410.1 L431 407.1 L440 403.9 L449 400.5 L458 396.8 L467 392.7 L476 388.2 L485 383.4 L494 378.3 L503 372.9 L512 367.2 L521 361.5 L530 355.6 L539 349.8 L548 344.0 L557 338.5 L566 333.1 L575 327.9 L584 323.1 L593 318.4 L602 314.0 L611 309.8 L620 305.7 L629 301.6 M-10 560.9 L-1 560.3 L8 559.4 L17 558.3 L26 556.9 L35 555.2 L44 553.1 L53 550.6 L62 547.8 L71 544.8 L80 541.5 L89 538.1 L98 534.6 L107 531.2 L116 527.8 L125 524.6 L134 521.6 L143 518.9 L152 516.4 L161 514.2 L170 512.2 L179 510.4 L188 508.7 L197 507.0 L206 505.3 L215 503.5 L224 501.4 L233 499.1 L242 496.5 L251 493.5 L260 490.2 L269 486.5 L278 482.5 L287 478.3 L296 473.8 L305 469.2 L314 464.6 L323 459.9 L332 455.4 L341 451.1 L350 446.9 L359 443.1 L368 439.4 L377 436.1 L386 432.9 L395 429.9 L404 427.1 L413 424.2 L422 421.3 L431 418.3 L440 415.0 L449 411.5 L458 407.7 L467 403.5 L476 399.0 L485 394.1 L494 388.9 L503 383.4 L512 377.8 L521 372.0 L530 366.1 L539 360.4 L548 354.7 L557 349.2 L566 343.9 L575 338.9 L584 334.1 L593 329.6 L602 325.3 L611 321.1 L620 317.1 L629 313.1 M-10 574.3 L-1 573.6 L8 572.6 L17 571.4 L26 569.8 L35 567.9 L44 565.6 L53 563.0 L62 560.0 L71 556.9 L80 553.5 L89 550.0 L98 546.5 L107 543.0 L116 539.6 L125 536.4 L134 533.5 L143 530.8 L152 528.4 L161 526.2 L170 524.2 L179 522.4 L188 520.7 L197 518.9 L206 517.2 L215 515.2 L224 513.1 L233 510.7 L242 507.9 L251 504.8 L260 501.4 L269 497.6 L278 493.5 L287 489.1 L296 484.6 L305 480.0 L314 475.3 L323 470.7 L332 466.2 L341 461.9 L350 457.9 L359 454.0 L368 450.5 L377 447.2 L386 444.1 L395 441.2 L404 438.3 L413 435.4 L422 432.5 L431 429.4 L440 426.1 L449 422.5 L458 418.6 L467 414.3 L476 409.7 L485 404.7 L494 399.5 L503 394.0 L512 388.3 L521 382.5 L530 376.7 L539 370.9 L548 365.3 L557 359.9 L566 354.7 L575 349.8 L584 345.2 L593 340.8 L602 336.5 L611 332.5 L620 328.5 L629 324.5 M-10 587.8 L-1 586.9 L8 585.8 L17 584.4 L26 582.6 L35 580.5 L44 578.1 L53 575.3 L62 572.3 L71 568.9 L80 565.5 L89 561.9 L98 558.3 L107 554.8 L116 551.5 L125 548.3 L134 545.4 L143 542.7 L152 540.3 L161 538.2 L170 536.2 L179 534.4 L188 532.6 L197 530.9 L206 529.0 L215 527.0 L224 524.8 L233 522.2 L242 519.3 L251 516.1 L260 512.5 L269 508.6 L278 504.4 L287 500.0 L296 495.4 L305 490.7 L314 486.1 L323 481.5 L332 477.0 L341 472.8 L350 468.8 L359 465.1 L368 461.6 L377 458.3 L386 455.3 L395 452.4 L404 449.5 L413 446.7 L422 443.7 L431 440.6 L440 437.2 L449 433.5 L458 429.5 L467 425.1 L476 420.4 L485 415.4 L494 410.0 L503 404.5 L512 398.8 L521 393.0 L530 387.2 L539 381.5 L548 376.0 L557 370.7 L566 365.6 L575 360.8 L584 356.3 L593 352.0 L602 347.8 L611 343.8 L620 339.9 L629 335.9 M-10 601.2 L-1 600.2 L8 598.9 L17 597.3 L26 595.4 L35 593.2 L44 590.6 L53 587.6 L62 584.4 L71 581.0 L80 577.5 L89 573.8 L98 570.2 L107 566.7 L116 563.3 L125 560.2 L134 557.3 L143 554.7 L152 552.3 L161 550.2 L170 548.2 L179 546.4 L188 544.6 L197 542.8 L206 540.9 L215 538.8 L224 536.4 L233 533.7 L242 530.7 L251 527.4 L260 523.7 L269 519.6 L278 515.4 L287 510.8 L296 506.2 L305 501.5 L314 496.8 L323 492.3 L332 487.9 L341 483.7 L350 479.8 L359 476.1 L368 472.7 L377 469.5 L386 466.5 L395 463.6 L404 460.8 L413 457.9 L422 454.9 L431 451.7 L440 448.2 L449 444.5 L458 440.4 L467 435.9 L476 431.1 L485 426.0 L494 420.6 L503 415.0 L512 409.3 L521 403.5 L530 397.8 L539 392.2 L548 386.7 L557 381.5 L566 376.5 L575 371.8 L584 367.4 L593 363.2 L602 359.1 L611 355.2 L620 351.3 L629 347.3 M-10 614.6 L-1 613.4 L8 612.0 L17 610.3 L26 608.2 L35 605.8 L44 603.0 L53 600.0 L62 596.6 L71 593.1 L80 589.4 L89 585.8 L98 582.1 L107 578.6 L116 575.2 L125 572.1 L134 569.3 L143 566.7 L152 564.3 L161 562.2 L170 560.2 L179 558.4 L188 556.6 L197 554.7 L206 552.7 L215 550.5 L224 548.0 L233 545.2 L242 542.1 L251 538.6 L260 534.8 L269 530.6 L278 526.3 L287 521.7 L296 517.0 L305 512.3 L314 507.6 L323 503.1 L332 498.7 L341 494.6 L350 490.8 L359 487.2 L368 483.8 L377 480.7 L386 477.7 L395 474.9 L404 472.0 L413 469.1 L422 466.1 L431 462.8 L440 459.3 L449 455.4 L458 451.2 L467 446.6 L476 441.7 L485 436.5 L494 431.1 L503 425.5 L512 419.8 L521 414.0 L530 408.4 L539 402.8 L548 397.4 L557 392.3 L566 387.5 L575 382.9 L584 378.5 L593 374.4 L602 370.4 L611 366.5 L620 362.7 L629 358.7 M-10 628.0 L-1 626.7 L8 625.1 L17 623.2 L26 621.0 L35 618.4 L44 615.5 L53 612.2 L62 608.8 L71 605.1 L80 601.4 L89 597.7 L98 594.0 L107 590.5 L116 587.2 L125 584.1 L134 581.2 L143 578.7 L152 576.4 L161 574.2 L170 572.3 L179 570.4 L188 568.6 L197 566.6 L206 564.5 L215 562.2 L224 559.6 L233 556.7 L242 553.4 L251 549.8 L260 545.9 L269 541.6 L278 537.2 L287 532.5 L296 527.8 L305 523.1 L314 518.4 L323 513.9 L332 509.6 L341 505.6 L350 501.8 L359 498.2 L368 495.0 L377 491.9 L386 489.0 L395 486.1 L404 483.2 L413 480.3 L422 477.2 L431 473.9 L440 470.2 L449 466.3 L458 462.0 L467 457.3 L476 452.4 L485 447.1 L494 441.6 L503 436.0 L512 430.3 L521 424.6 L530 418.9 L539 413.5 L548 408.2 L557 403.2 L566 398.4 L575 393.9 L584 389.7 L593 385.6 L602 381.7 L611 377.9 L620 374.0 L629 370.1 M-10 641.3 L-1 639.9 L8 638.2 L17 636.1 L26 633.7 L35 630.9 L44 627.9 L53 624.5 L62 620.9 L71 617.2 L80 613.4 L89 609.6 L98 605.9 L107 602.4 L116 599.1 L125 596.0 L134 593.2 L143 590.7 L152 588.4 L161 586.3 L170 584.3 L179 582.5 L188 580.5 L197 578.5 L206 576.3 L215 573.9 L224 571.2 L233 568.1 L242 564.7 L251 561.0 L260 556.9 L269 552.6 L278 548.0 L287 543.3 L296 538.6 L305 533.9 L314 529.2 L323 524.8 L332 520.5 L341 516.5 L350 512.8 L359 509.4 L368 506.1 L377 503.1 L386 500.2 L395 497.4 L404 494.5 L413 491.5 L422 488.3 L431 484.9 L440 481.2 L449 477.2 L458 472.8 L467 468.0 L476 463.0 L485 457.7 L494 452.1 L503 446.5 L512 440.8 L521 435.1 L530 429.5 L539 424.1 L548 419.0 L557 414.1 L566 409.4 L575 405.0 L584 400.9 L593 396.9 L602 393.1 L611 389.3 L620 385.4 L629 381.5 M-10 654.7 L-1 653.1 L8 651.2 L17 649.0 L26 646.4 L35 643.5 L44 640.2 L53 636.8 L62 633.1 L71 629.3 L80 625.4 L89 621.6 L98 617.9 L107 614.4 L116 611.1 L125 608.0 L134 605.3 L143 602.8 L152 600.5 L161 598.4 L170 596.4 L179 594.5 L188 592.5 L197 590.4 L206 588.1 L215 585.6 L224 582.7 L233 579.5 L242 576.0 L251 572.1 L260 568.0 L269 563.5 L278 558.9 L287 554.2 L296 549.4 L305 544.7 L314 540.1 L323 535.7 L332 531.5 L341 527.5 L350 523.9 L359 520.5 L368 517.3 L377 514.3 L386 511.5 L395 508.6 L404 505.7 L413 502.7 L422 499.5 L431 496.0 L440 492.2 L449 488.0 L458 483.5 L467 478.7 L476 473.6 L485 468.2 L494 462.6 L503 457.0 L512 451.3 L521 445.7 L530 440.2 L539 434.9 L548 429.8 L557 425.0 L566 420.4 L575 416.1 L584 412.1 L593 408.2 L602 404.4 L611 400.6 L620 396.8 L629 392.8 M-10 668.0 L-1 666.3 L8 664.2 L17 661.8 L26 659.1 L35 656.0 L44 652.6 L53 649.0 L62 645.2 L71 641.3 L80 637.4 L89 633.6 L98 629.8 L107 626.3 L116 623.1 L125 620.0 L134 617.3 L143 614.8 L152 612.6 L161 610.5 L170 608.5 L179 606.5 L188 604.5 L197 602.3 L206 599.9 L215 597.2 L224 594.3 L233 590.9 L242 587.3 L251 583.3 L260 579.0 L269 574.5 L278 569.8 L287 565.0 L296 560.2 L305 555.5 L314 550.9 L323 546.6 L332 542.4 L341 538.6 L350 535.0 L359 531.7 L368 528.5 L377 525.6 L386 522.7 L395 519.9 L404 516.9 L413 513.8 L422 510.6 L431 507.0 L440 503.1 L449 498.8 L458 494.2 L467 489.3 L476 484.1 L485 478.7 L494 473.1 L503 467.5 L512 461.8 L521 456.2 L530 450.8 L539 445.6 L548 440.6 L557 435.9 L566 431.5 L575 427.3 L584 423.3 L593 419.5 L602 415.7 L611 412.0 L620 408.2 L629 404.2 M-10 681.4 L-1 679.4 L8 677.2 L17 674.6 L26 671.7 L35 668.5 L44 665.0 L53 661.2 L62 657.3 L71 653.4 L80 649.4 L89 645.5 L98 641.8 L107 638.3 L116 635.1 L125 632.1 L134 629.4 L143 626.9 L152 624.7 L161 622.6 L170 620.6 L179 618.5 L188 616.4 L197 614.2 L206 611.6 L215 608.9 L224 605.7 L233 602.3 L242 598.5 L251 594.4 L260 590.0 L269 585.4 L278 580.6 L287 575.8 L296 571.0 L305 566.3 L314 561.8 L323 557.5 L332 553.4 L341 549.6 L350 546.1 L359 542.9 L368 539.8 L377 536.8 L386 534.0 L395 531.1 L404 528.1 L413 525.0 L422 521.6 L431 518.0 L440 514.0 L449 509.6 L458 504.9 L467 500.0 L476 494.7 L485 489.2 L494 483.6 L503 478.0 L512 472.4 L521 466.8 L530 461.5 L539 456.3 L548 451.5 L557 446.9 L566 442.5 L575 438.4 L584 434.5 L593 430.8 L602 427.1 L611 423.4 L620 419.5 L629 415.5 M-10 694.6 L-1 692.6 L8 690.2 L17 687.5 L26 684.5 L35 681.2 L44 677.6 L53 673.8 L62 669.8 L71 665.8 L80 661.9 L89 658.1 L98 654.4 L107 651.0 L116 647.8 L125 644.9 L134 642.2 L143 639.9 L152 637.6 L161 635.6 L170 633.5 L179 631.5 L188 629.3 L197 627.0 L206 624.4 L215 621.5 L224 618.3 L233 614.8 L242 610.9 L251 606.7 L260 602.2 L269 597.5 L278 592.8 L287 588.0 L296 583.2 L305 578.5 L314 574.1 L323 569.8 L332 565.8 L341 562.1 L350 558.7 L359 555.5 L368 552.5 L377 549.6 L386 546.7 L395 543.8 L404 540.8 L413 537.6 L422 534.2 L431 530.4 L440 526.4 L449 521.9 L458 517.2 L467 512.1 L476 506.8 L485 501.3 L494 495.7 L503 490.0 L512 484.4 L521 479.0 L530 473.7 L539 468.6 L548 463.9 L557 459.3 L566 455.1 L575 451.1 L584 447.3 L593 443.5 L602 439.9 L611 436.1 L620 432.3 L629 428.2 M-10 707.8 L-1 705.7 L8 703.2 L17 700.4 L26 697.3 L35 693.9 L44 690.3 L53 686.4 L62 682.5 L71 678.5 L80 674.6 L89 670.8 L98 667.2 L107 663.9 L116 660.8 L125 658.0 L134 655.4 L143 653.1 L152 651.0 L161 648.9 L170 646.9 L179 644.8 L188 642.6 L197 640.3 L206 637.6 L215 634.6 L224 631.3 L233 627.7 L242 623.7 L251 619.4 L260 614.9 L269 610.2 L278 605.4 L287 600.6 L296 595.9 L305 591.3 L314 586.9 L323 582.7 L332 578.9 L341 575.2 L350 571.9 L359 568.8 L368 565.8 L377 562.9 L386 560.1 L395 557.2 L404 554.1 L413 550.9 L422 547.4 L431 543.5 L440 539.3 L449 534.8 L458 530.0 L467 524.8 L476 519.5 L485 513.9 L494 508.3 L503 502.7 L512 497.1 L521 491.7 L530 486.5 L539 481.6 L548 476.9 L557 472.5 L566 468.3 L575 464.4 L584 460.6 L593 456.9 L602 453.2 L611 449.5 L620 445.6 L629 441.4 M-10 720.9 L-1 718.7 L8 716.2 L17 713.3 L26 710.1 L35 706.6 L44 702.9 L53 699.1 L62 695.1 L71 691.2 L80 687.3 L89 683.6 L98 680.1 L107 676.8 L116 673.8 L125 671.1 L134 668.6 L143 666.4 L152 664.3 L161 662.3 L170 660.2 L179 658.2 L188 655.9 L197 653.5 L206 650.7 L215 647.7 L224 644.3 L233 640.5 L242 636.5 L251 632.1 L260 627.6 L269 622.9 L278 618.1 L287 613.3 L296 608.6 L305 604.1 L314 599.8 L323 595.7 L332 591.9 L341 588.4 L350 585.1 L359 582.0 L368 579.1 L377 576.3 L386 573.4 L395 570.5 L404 567.4 L413 564.1 L422 560.5 L431 556.6 L440 552.3 L449 547.7 L458 542.8 L467 537.6 L476 532.1 L485 526.6 L494 521.0 L503 515.4 L512 509.9 L521 504.5 L530 499.4 L539 494.5 L548 489.9 L557 485.6 L566 481.5 L575 477.6 L584 473.9 L593 470.2 L602 466.5 L611 462.8 L620 458.8 L629 454.7 M-10 734.0 L-1 731.8 L8 729.1 L17 726.2 L26 722.9 L35 719.4 L44 715.6 L53 711.7 L62 707.8 L71 703.9 L80 700.0 L89 696.4 L98 692.9 L107 689.8 L116 686.9 L125 684.2 L134 681.8 L143 679.7 L152 677.6 L161 675.6 L170 673.6 L179 671.5 L188 669.2 L197 666.7 L206 663.9 L215 660.7 L224 657.2 L233 653.4 L242 649.2 L251 644.8 L260 640.2 L269 635.5 L278 630.7 L287 626.0 L296 621.3 L305 616.9 L314 612.6 L323 608.7 L332 605.0 L341 601.5 L350 598.3 L359 595.3 L368 592.4 L377 589.6 L386 586.8 L395 583.8 L404 580.7 L413 577.3 L422 573.6 L431 569.6 L440 565.2 L449 560.5 L458 555.5 L467 550.3 L476 544.8 L485 539.2 L494 533.6 L503 528.0 L512 522.6 L521 517.3 L530 512.3 L539 507.5 L548 503.0 L557 498.8 L566 494.8 L575 490.9 L584 487.2 L593 483.6 L602 479.9 L611 476.1 L620 472.1 L629 467.8 M-10 747.2 L-1 744.8 L8 742.1 L17 739.0 L26 735.7 L35 732.1 L44 728.3 L53 724.4 L62 720.4 L71 716.5 L80 712.8 L89 709.2 L98 705.8 L107 702.8 L116 699.9 L125 697.4 L134 695.1 L143 693.0 L152 690.9 L161 689.0 L170 686.9 L179 684.8 L188 682.5 L197 679.9 L206 677.0 L215 673.7 L224 670.1 L233 666.2 L242 662.0 L251 657.5 L260 652.9 L269 648.2 L278 643.4 L287 638.7 L296 634.1 L305 629.7 L314 625.5 L323 621.7 L332 618.1 L341 614.7 L350 611.6 L359 608.6 L368 605.8 L377 603.0 L386 600.1 L395 597.1 L404 593.9 L413 590.5 L422 586.7 L431 582.6 L440 578.1 L449 573.3 L458 568.3 L467 563.0 L476 557.5 L485 551.9 L494 546.3 L503 540.7 L512 535.4 L521 530.2 L530 525.2 L539 520.5 L548 516.1 L557 511.9 L566 508.0 L575 504.2 L584 500.6 L593 496.9 L602 493.2 L611 489.4 L620 485.3 L629 481.0 M-10 760.2 L-1 757.8 L8 755.0 L17 751.8 L26 748.4 L35 744.8 L44 740.9 L53 737.0 L62 733.1 L71 729.2 L80 725.5 L89 722.0 L98 718.8 L107 715.8 L116 713.1 L125 710.6 L134 708.4 L143 706.3 L152 704.3 L161 702.3 L170 700.3 L179 698.1 L188 695.7 L197 693.0 L206 690.0 L215 686.7 L224 683.0 L233 679.0 L242 674.7 L251 670.2 L260 665.6 L269 660.8 L278 656.1 L287 651.4 L296 646.9 L305 642.6 L314 638.5 L323 634.7 L332 631.2 L341 627.9 L350 624.8 L359 621.9 L368 619.1 L377 616.3 L386 613.4 L395 610.4 L404 607.1 L413 603.6 L422 599.7 L431 595.5 L440 591.0 L449 586.1 L458 581.0 L467 575.6 L476 570.1 L485 564.5 L494 559.0 L503 553.5 L512 548.1 L521 543.0 L530 538.1 L539 533.6 L548 529.2 L557 525.2 L566 521.3 L575 517.6 L584 513.9 L593 510.3 L602 506.6 L611 502.7 L620 498.5 L629 494.1 M-10 773.3 L-1 770.7 L8 767.8 L17 764.6 L26 761.1 L35 757.4 L44 753.6 L53 749.7 L62 745.8 L71 742.0 L80 738.3 L89 734.9 L98 731.7 L107 728.8 L116 726.2 L125 723.8 L134 721.6 L143 719.6 L152 717.6 L161 715.7 L170 713.6 L179 711.4 L188 708.9 L197 706.1 L206 703.1 L215 699.6 L224 695.9 L233 691.8 L242 687.5 L251 682.9 L260 678.2 L269 673.5 L278 668.7 L287 664.1 L296 659.7 L305 655.4 L314 651.4 L323 647.7 L332 644.3 L341 641.1 L350 638.1 L359 635.3 L368 632.5 L377 629.7 L386 626.8 L395 623.7 L404 620.3 L413 616.7 L422 612.8 L431 608.5 L440 603.9 L449 598.9 L458 593.7 L467 588.3 L476 582.8 L485 577.2 L494 571.6 L503 566.2 L512 560.9 L521 555.9 L530 551.1 L539 546.6 L548 542.4 L557 538.4 L566 534.6 L575 530.9 L584 527.3 L593 523.6 L602 519.9 L611 515.9 L620 511.7 L629 507.2 M-10 786.3 L-1 783.7 L8 780.7 L17 777.4 L26 773.8 L35 770.1 L44 766.2 L53 762.3 L62 758.5 L71 754.7 L80 751.1 L89 747.8 L98 744.7 L107 741.9 L116 739.4 L125 737.0 L134 734.9 L143 732.9 L152 731.0 L161 729.0 L170 726.9 L179 724.6 L188 722.1 L197 719.2 L206 716.1 L215 712.6 L224 708.7 L233 704.6 L242 700.2 L251 695.6 L260 690.9 L269 686.1 L278 681.4 L287 676.9 L296 672.5 L305 668.3 L314 664.4 L323 660.8 L332 657.5 L341 654.4 L350 651.4 L359 648.6 L368 645.8 L377 643.0 L386 640.1 L395 636.9 L404 633.5 L413 629.8 L422 625.8 L431 621.4 L440 616.7 L449 611.7 L458 606.4 L467 601.0 L476 595.4 L485 589.8 L494 584.3 L503 579.0 L512 573.8 L521 568.8 L530 564.1 L539 559.7 L548 555.6 L557 551.6 L566 547.9 L575 544.2 L584 540.6 L593 537.0 L602 533.2 L611 529.2 L620 524.9 L629 520.3 M-10 799.3 L-1 796.6 L8 793.5 L17 790.1 L26 786.5 L35 782.8 L44 778.9 L53 775.0 L62 771.2 L71 767.5 L80 764.0 L89 760.7 L98 757.7 L107 755.0 L116 752.5 L125 750.3 L134 748.2 L143 746.3 L152 744.3 L161 742.3 L170 740.2 L179 737.9 L188 735.3 L197 732.3 L206 729.1 L215 725.5 L224 721.5 L233 717.3 L242 712.8 L251 708.2 L260 703.5 L269 698.8 L278 694.1 L287 689.6 L296 685.3 L305 681.3 L314 677.5 L323 673.9 L332 670.7 L341 667.6 L350 664.7 L359 662.0 L368 659.2 L377 656.3 L386 653.4 L395 650.2 L404 646.7 L413 642.9 L422 638.8 L431 634.3 L440 629.5 L449 624.4 L458 619.1 L467 613.6 L476 608.1 L485 602.5 L494 597.0 L503 591.7 L512 586.6 L521 581.7 L530 577.1 L539 572.8 L548 568.8 L557 564.9 L566 561.2 L575 557.6 L584 554.0 L593 550.3 L602 546.5 L611 542.4 L620 538.1 L629 533.4 M-10 812.3 L-1 809.4 L8 806.3 L17 802.9 L26 799.2 L35 795.4 L44 791.5 L53 787.7 L62 783.9 L71 780.2 L80 776.8 L89 773.6 L98 770.7 L107 768.1 L116 765.7 L125 763.6 L134 761.6 L143 759.6 L152 757.7 L161 755.7 L170 753.5 L179 751.1 L188 748.4 L197 745.4 L206 742.0 L215 738.3 L224 734.3 L233 730.0 L242 725.5 L251 720.9 L260 716.2 L269 711.5 L278 706.9 L287 702.4 L296 698.2 L305 694.2 L314 690.5 L323 687.1 L332 683.9 L341 680.9 L350 678.1 L359 675.3 L368 672.5 L377 669.7 L386 666.6 L395 663.4 L404 659.8 L413 655.9 L422 651.7 L431 647.1 L440 642.3 L449 637.1 L458 631.8 L467 626.3 L476 620.7 L485 615.2 L494 609.8 L503 604.5 L512 599.5 L521 594.7 L530 590.2 L539 586.0 L548 582.0 L557 578.2 L566 574.5 L575 570.9 L584 567.3 L593 563.6 L602 559.7 L611 555.6 L620 551.2 L629 546.4" fill="none" stroke="#eaebed" stroke-width="1.3"/>
<path d="M230 0.9 L239 -0.3 L248 -1.9 L257 -4.0 L266 -6.4 L275 -9.2 L284 -12.2 L293 -15.5 L302 -18.8 L311 -22.2 L320 -25.6 L329 -28.9 L338 -32.0 L347 -34.9 L356 -37.6 L365 -40.2 L374 -42.6 L383 -44.9 L392 -47.2 L401 -49.5 L410 -51.9 L419 -54.5 L428 -57.4 L437 -60.6 L446 -64.3 L455 -68.3 L464 -72.8 L473 -77.6 L482 -82.9 L491 -88.5 L500 -94.3 L509 -100.4 L518 -106.5 L527 -112.7 L536 -118.9 L545 -124.9 L554 -130.8 L563 -136.5 L572 -142.0 L581 -147.3 L590 -152.5 L599 -157.6 L608 -162.7 L617 -167.8 L626 -173.0 M230 12.4 L239 11.0 L248 9.3 L257 7.1 L266 4.6 L275 1.7 L284 -1.4 L293 -4.7 L302 -8.0 L311 -11.4 L320 -14.8 L329 -18.0 L338 -21.0 L347 -23.9 L356 -26.6 L365 -29.1 L374 -31.4 L383 -33.7 L392 -35.9 L401 -38.2 L410 -40.7 L419 -43.4 L428 -46.3 L437 -49.6 L446 -53.3 L455 -57.5 L464 -62.0 L473 -67.0 L482 -72.3 L491 -78.0 L500 -83.8 L509 -89.9 L518 -96.0 L527 -102.2 L536 -108.2 L545 -114.2 L554 -120.0 L563 -125.6 L572 -131.0 L581 -136.2 L590 -141.3 L599 -146.3 L608 -151.3 L617 -156.4 L626 -161.6 M230 23.8 L239 22.4 L248 20.5 L257 18.2 L266 15.6 L275 12.6 L284 9.5 L293 6.2 L302 2.8 L311 -0.6 L320 -3.9 L329 -7.1 L338 -10.1 L347 -12.9 L356 -15.5 L365 -17.9 L374 -20.2 L383 -22.4 L392 -24.7 L401 -27.0 L410 -29.5 L419 -32.2 L428 -35.2 L437 -38.6 L446 -42.4 L455 -46.7 L464 -51.3 L473 -56.4 L482 -61.8 L491 -67.4 L500 -73.3 L509 -79.4 L518 -85.5 L527 -91.6 L536 -97.6 L545 -103.4 L554 -109.1 L563 -114.6 L572 -119.9 L581 -125.0 L590 -130.0 L599 -135.0 L608 -140.0 L617 -145.0 L626 -150.2 M230 35.3 L239 33.7 L248 31.7 L257 29.3 L266 26.5 L275 23.5 L284 20.3 L293 17.0 L302 13.6 L311 10.2 L320 7.0 L329 3.9 L338 0.9 L347 -1.8 L356 -4.3 L365 -6.7 L374 -9.0 L383 -11.2 L392 -13.4 L401 -15.8 L410 -18.3 L419 -21.1 L428 -24.2 L437 -27.7 L446 -31.6 L455 -35.9 L464 -40.6 L473 -45.8 L482 -51.2 L491 -56.9 L500 -62.8 L509 -68.9 L518 -74.9 L527 -81.0 L536 -86.9 L545 -92.7 L554 -98.2 L563 -103.6 L572 -108.8 L581 -113.9 L590 -118.8 L599 -123.7 L608 -128.6 L617 -133.6 L626 -138.9 M230 46.7 L239 45.0 L248 42.8 L257 40.3 L266 37.5 L275 34.4 L284 31.1 L293 27.8 L302 24.4 L311 21.1 L320 17.9 L329 14.8 L338 12.0 L347 9.3 L356 6.8 L365 4.5 L374 2.3 L383 0.1 L392 -2.2 L401 -4.5 L410 -7.1 L419 -10.0 L428 -13.2 L437 -16.7 L446 -20.7 L455 -25.2 L464 -30.0 L473 -35.2 L482 -40.7 L491 -46.4 L500 -52.3 L509 -58.4 L518 -64.4 L527 -70.3 L536 -76.2 L545 -81.8 L554 -87.3 L563 -92.6 L572 -97.7 L581 -102.6 L590 -107.5 L599 -112.3 L608 -117.2 L617 -122.3 L626 -127.5 M230 58.1 L239 56.2 L248 54.0 L257 51.4 L266 48.4 L275 45.3 L284 42.0 L293 38.6 L302 35.2 L311 31.9 L320 28.8 L329 25.8 L338 23.0 L347 20.4 L356 18.0 L365 15.7 L374 13.5 L383 11.3 L392 9.1 L401 6.7 L410 4.1 L419 1.1 L428 -2.2 L437 -5.8 L446 -9.9 L455 -14.4 L464 -19.3 L473 -24.6 L482 -30.2 L491 -35.9 L500 -41.9 L509 -47.8 L518 -53.8 L527 -59.7 L536 -65.4 L545 -71.0 L554 -76.4 L563 -81.6 L572 -86.6 L581 -91.4 L590 -96.2 L599 -101.0 L608 -105.9 L617 -110.9 L626 -116.2 M230 69.5 L239 67.5 L248 65.1 L257 62.4 L266 59.4 L275 56.2 L284 52.8 L293 49.4 L302 46.1 L311 42.8 L320 39.7 L329 36.8 L338 34.1 L347 31.6 L356 29.2 L365 27.0 L374 24.8 L383 22.6 L392 20.3 L401 17.9 L410 15.2 L419 12.2 L428 8.8 L437 5.1 L446 0.9 L455 -3.7 L464 -8.7 L473 -14.1 L482 -19.6 L491 -25.4 L500 -31.4 L509 -37.3 L518 -43.2 L527 -49.0 L536 -54.7 L545 -60.2 L554 -65.4 L563 -70.5 L572 -75.4 L581 -80.2 L590 -84.9 L599 -89.7 L608 -94.5 L617 -99.6 L626 -104.9 M230 80.8 L239 78.7 L248 76.2 L257 73.4 L266 70.3 L275 67.0 L284 63.7 L293 60.3 L302 57.0 L311 53.7 L320 50.7 L329 47.8 L338 45.2 L347 42.7 L356 40.4 L365 38.2 L374 36.1 L383 33.9 L392 31.6 L401 29.1 L410 26.3 L419 23.3 L428 19.8 L437 15.9 L446 11.6 L455 6.9 L464 1.9 L473 -3.5 L482 -9.1 L491 -14.9 L500 -20.8 L509 -26.8 L518 -32.6 L527 -38.3 L536 -43.9 L545 -49.3 L554 -54.4 L563 -59.4 L572 -64.2 L581 -68.9 L590 -73.6 L599 -78.3 L608 -83.2 L617 -88.2 L626 -93.6 M230 92.1 L239 89.9 L248 87.3 L257 84.3 L266 81.2 L275 77.9 L284 74.5 L293 71.2 L302 67.9 L311 64.7 L320 61.7 L329 58.9 L338 56.3 L347 53.9 L356 51.7 L365 49.5 L374 47.4 L383 45.2 L392 42.8 L401 40.3 L410 37.5 L419 34.3 L428 30.7 L437 26.7 L446 22.3 L455 17.6 L464 12.4 L473 7.0 L482 1.4 L491 -4.5 L500 -10.3 L509 -16.2 L518 -22.0 L527 -27.6 L536 -33.1 L545 -38.3 L554 -43.4 L563 -48.3 L572 -53.0 L581 -57.7 L590 -62.3 L599 -67.0 L608 -71.8 L617 -76.9 L626 -82.3 M230 103.4 L239 101.0 L248 98.3 L257 95.3 L266 92.1 L275 88.8 L284 85.4 L293 82.0 L302 78.8 L311 75.6 L320 72.7 L329 70.0 L338 67.5 L347 65.1 L356 62.9 L365 60.8 L374 58.6 L383 56.4 L392 54.1 L401 51.5 L410 48.5 L419 45.3 L428 41.6 L437 37.5 L446 33.1 L455 28.2 L464 23.0 L473 17.5 L482 11.8 L491 6.0 L500 0.2 L509 -5.6 L518 -11.3 L527 -16.9 L536 -22.2 L545 -27.4 L554 -32.4 L563 -37.1 L572 -41.8 L581 -46.4 L590 -51.0 L599 -55.7 L608 -60.5 L617 -65.6 L626 -71.0 M230 114.6 L239 112.2 L248 109.4 L257 106.3 L266 103.0 L275 99.7 L284 96.3 L293 92.9 L302 89.7 L311 86.6 L320 83.8 L329 81.1 L338 78.6 L347 76.4 L356 74.2 L365 72.1 L374 69.9 L383 67.7 L392 65.3 L401 62.6 L410 59.6 L419 56.2 L428 52.5 L437 48.3 L446 43.7 L455 38.8 L464 33.5 L473 28.0 L482 22.3 L491 16.5 L500 10.7 L509 5.0 L518 -0.7 L527 -6.1 L536 -11.4 L545 -16.4 L554 -21.3 L563 -26.0 L572 -30.6 L581 -35.1 L590 -39.7 L599 -44.3 L608 -49.2 L617 -54.3 L626 -59.8 M230 125.9 L239 123.3 L248 120.4 L257 117.2 L266 113.9 L275 110.5 L284 107.2 L293 103.8 L302 100.7 L311 97.6 L320 94.8 L329 92.3 L338 89.9 L347 87.6 L356 85.5 L365 83.4 L374 81.2 L383 78.9 L392 76.5 L401 73.7 L410 70.7 L419 67.2 L428 63.3 L437 59.1 L446 54.4 L455 49.4 L464 44.1 L473 38.5 L482 32.8 L491 27.0 L500 21.3 L509 15.6 L518 10.0 L527 4.7 L536 -0.5 L545 -5.4 L554 -10.2 L563 -14.8 L572 -19.3 L581 -23.8 L590 -28.4 L599 -33.0 L608 -37.9 L617 -43.1 L626 -48.6 M230 137.1 L239 134.4 L248 131.4 L257 128.2 L266 124.8 L275 121.4 L284 118.1 L293 114.8 L302 111.6 L311 108.7 L320 106.0 L329 103.4 L338 101.1 L347 98.9 L356 96.8 L365 94.7 L374 92.5 L383 90.2 L392 87.7 L401 84.8 L410 81.7 L419 78.1 L428 74.1 L437 69.8 L446 65.0 L455 59.9 L464 54.6 L473 49.0 L482 43.3 L491 37.6 L500 31.8 L509 26.2 L518 20.8 L527 15.5 L536 10.4 L545 5.6 L554 0.9 L563 -3.6 L572 -8.1 L581 -12.5 L590 -17.0 L599 -21.7 L608 -26.6 L617 -31.8 L626 -37.4 M230 148.3 L239 145.5 L248 142.4 L257 139.1 L266 135.8 L275 132.3 L284 129.0 L293 125.7 L302 122.6 L311 119.8 L320 117.1 L329 114.6 L338 112.3 L347 110.2 L356 108.1 L365 106.0 L374 103.8 L383 101.4 L392 98.8 L401 95.9 L410 92.7 L419 89.0 L428 84.9 L437 80.5 L446 75.6 L455 70.5 L464 65.1 L473 59.5 L482 53.8 L491 48.1 L500 42.4 L509 36.9 L518 31.5 L527 26.3 L536 21.4 L545 16.6 L554 12.0 L563 7.6 L572 3.2 L581 -1.2 L590 -5.7 L599 -10.4 L608 -15.4 L617 -20.6 L626 -26.2 M230 159.4 L239 156.5 L248 153.4 L257 150.1 L266 146.7 L275 143.3 L284 139.9 L293 136.7 L302 133.7 L311 130.9 L320 128.2 L329 125.8 L338 123.6 L347 121.5 L356 119.4 L365 117.3 L374 115.1 L383 112.7 L392 110.0 L401 107.0 L410 103.6 L419 99.9 L428 95.7 L437 91.2 L446 86.2 L455 81.0 L464 75.6 L473 70.0 L482 64.3 L491 58.6 L500 53.0 L509 47.6 L518 42.3 L527 37.2 L536 32.4 L545 27.7 L554 23.2 L563 18.8 L572 14.5 L581 10.1 L590 5.6 L599 0.9 L608 -4.1 L617 -9.4 L626 -15.1 M230 170.6 L239 167.6 L248 164.4 L257 161.0 L266 157.6 L275 154.2 L284 150.9 L293 147.7 L302 144.7 L311 142.0 L320 139.4 L329 137.1 L338 134.9 L347 132.8 L356 130.7 L365 128.6 L374 126.3 L383 123.9 L392 121.1 L401 118.0 L410 114.6 L419 110.7 L428 106.4 L437 101.8 L446 96.8 L455 91.6 L464 86.1 L473 80.5 L482 74.8 L491 69.2 L500 63.7 L509 58.3 L518 53.1 L527 48.1 L536 43.4 L545 38.8 L554 34.4 L563 30.0 L572 25.7 L581 21.4 L590 16.9 L599 12.1 L608 7.1 L617 1.8 L626 -4.0 M230 181.7 L239 178.6 L248 175.4 L257 172.0 L266 168.5 L275 165.1 L284 161.9 L293 158.7 L302 155.8 L311 153.1 L320 150.6 L329 148.3 L338 146.2 L347 144.1 L356 142.0 L365 139.9 L374 137.6 L383 135.1 L392 132.2 L401 129.0 L410 125.5 L419 121.5 L428 117.2 L437 112.4 L446 107.4 L455 102.1 L464 96.6 L473 91.0 L482 85.3 L491 79.8 L500 74.3 L509 69.0 L518 63.9 L527 59.1 L536 54.4 L545 49.9 L554 45.6 L563 41.3 L572 37.0 L581 32.7 L590 28.1 L599 23.4 L608 18.3 L617 12.9 L626 7.1 M230 192.8 L239 189.7 L248 186.3 L257 182.9 L266 179.5 L275 176.1 L284 172.9 L293 169.8 L302 166.9 L311 164.3 L320 161.9 L329 159.6 L338 157.5 L347 155.4 L356 153.4 L365 151.2 L374 148.8 L383 146.2 L392 143.3 L401 140.0 L410 136.4 L419 132.3 L428 127.8 L437 123.0 L446 117.9 L455 112.6 L464 107.1 L473 101.5 L482 95.9 L491 90.4 L500 85.0 L509 79.8 L518 74.8 L527 70.0 L536 65.4 L545 61.0 L554 56.8 L563 52.5 L572 48.3 L581 43.9 L590 39.4 L599 34.6 L608 29.5 L617 24.0 L626 18.2 M230 204.0 L239 200.7 L248 197.3 L257 193.9 L266 190.4 L275 187.1 L284 183.9 L293 180.9 L302 178.1 L311 175.5 L320 173.1 L329 170.9 L338 168.8 L347 166.8 L356 164.7 L365 162.5 L374 160.1 L383 157.4 L392 154.4 L401 151.0 L410 147.2 L419 143.1 L428 138.5 L437 133.6 L446 128.5 L455 123.1 L464 117.6 L473 112.0 L482 106.4 L491 101.0 L500 95.7 L509 90.6 L518 85.7 L527 81.0 L536 76.5 L545 72.2 L554 68.0 L563 63.8 L572 59.6 L581 55.2 L590 50.7 L599 45.8 L608 40.7 L617 35.1 L626 29.2 M230 215.0 L239 211.7 L248 208.3 L257 204.8 L266 201.4 L275 198.1 L284 194.9 L293 192.0 L302 189.3 L311 186.7 L320 184.4 L329 182.3 L338 180.2 L347 178.1 L356 176.0 L365 173.7 L374 171.3 L383 168.5 L392 165.4 L401 161.9 L410 158.1 L419 153.8 L428 149.2 L437 144.2 L446 139.0 L455 133.6 L464 128.0 L473 122.5 L482 117.0 L491 111.6 L500 106.4 L509 101.4 L518 96.6 L527 92.0 L536 87.6 L545 83.4 L554 79.2 L563 75.1 L572 70.9 L581 66.5 L590 61.9 L599 57.0 L608 51.8 L617 46.2 L626 40.2 M230 226.1 L239 222.8 L248 219.3 L257 215.8 L266 212.4 L275 209.1 L284 206.0 L293 203.1 L302 200.5 L311 198.0 L320 195.7 L329 193.6 L338 191.5 L347 189.5 L356 187.3 L365 185.0 L374 182.5 L383 179.6 L392 176.4 L401 172.8 L410 168.9 L419 164.5 L428 159.8 L437 154.8 L446 149.5 L455 144.1 L464 138.5 L473 133.0 L482 127.6 L491 122.3 L500 117.1 L509 112.2 L518 107.5 L527 103.0 L536 98.7 L545 94.6 L554 90.4 L563 86.3 L572 82.1 L581 77.7 L590 73.1 L599 68.2 L608 62.9 L617 57.2 L626 51.2 M230 237.2 L239 233.8 L248 230.3 L257 226.8 L266 223.4 L275 220.2 L284 217.1 L293 214.3 L302 211.7 L311 209.3 L320 207.0 L329 204.9 L338 202.9 L347 200.8 L356 198.6 L365 196.3 L374 193.6 L383 190.7 L392 187.4 L401 183.7 L410 179.6 L419 175.2 L428 170.4 L437 165.3 L446 160.0 L455 154.6 L464 149.1 L473 143.6 L482 138.2 L491 132.9 L500 127.9 L509 123.1 L518 118.5 L527 114.1 L536 109.9 L545 105.8 L554 101.7 L563 97.6 L572 93.4 L581 89.0 L590 84.3 L599 79.3 L608 74.0 L617 68.2 L626 62.1 M230 248.3 L239 244.8 L248 241.3 L257 237.8 L266 234.5 L275 231.3 L284 228.3 L293 225.5 L302 222.9 L311 220.6 L320 218.4 L329 216.3 L338 214.3 L347 212.2 L356 209.9 L365 207.5 L374 204.8 L383 201.8 L392 198.4 L401 194.6 L410 190.4 L419 185.8 L428 181.0 L437 175.8 L446 170.5 L455 165.1 L464 159.6 L473 154.1 L482 148.8 L491 143.6 L500 138.7 L509 134.0 L518 129.5 L527 125.2 L536 121.0 L545 117.0 L554 112.9 L563 108.9 L572 104.6 L581 100.2 L590 95.5 L599 90.5 L608 85.0 L617 79.2 L626 73.0 M230 259.3 L239 255.8 L248 252.3 L257 248.8 L266 245.5 L275 242.4 L284 239.4 L293 236.7 L302 234.2 L311 231.9 L320 229.7 L329 227.7 L338 225.6 L347 223.5 L356 221.2 L365 218.7 L374 215.9 L383 212.8 L392 209.3 L401 205.4 L410 201.1 L419 196.5 L428 191.5 L437 186.4 L446 181.0 L455 175.5 L464 170.1 L473 164.7 L482 159.4 L491 154.4 L500 149.5 L509 144.9 L518 140.5 L527 136.3 L536 132.2 L545 128.2 L554 124.2 L563 120.1 L572 115.9 L581 111.4 L590 106.7 L599 101.5 L608 96.1 L617 90.2 L626 83.9 M230 270.4 L239 266.9 L248 263.3 L257 259.9 L266 256.6 L275 253.5 L284 250.6 L293 247.9 L302 245.5 L311 243.2 L320 241.1 L329 239.1 L338 237.0 L347 234.8 L356 232.5 L365 229.9 L374 227.1 L383 223.8 L392 220.2 L401 216.2 L410 211.8 L419 207.1 L428 202.1 L437 196.9 L446 191.5 L455 186.1 L464 180.6 L473 175.3 L482 170.1 L491 165.1 L500 160.4 L509 155.8 L518 151.5 L527 147.4 L536 143.4 L545 139.4 L554 135.4 L563 131.4 L572 127.1 L581 122.6 L590 117.8 L599 112.6 L608 107.1 L617 101.1 L626 94.8 M230 281.5 L239 277.9 L248 274.4 L257 271.0 L266 267.7 L275 264.6 L284 261.8 L293 259.2 L302 256.8 L311 254.6 L320 252.5 L329 250.4 L338 248.4 L347 246.2 L356 243.8 L365 241.1 L374 238.1 L383 234.8 L392 231.1 L401 227.0 L410 222.5 L419 217.7 L428 212.6 L437 207.4 L446 202.0 L455 196.6 L464 191.2 L473 185.9 L482 180.8 L491 175.9 L500 171.2 L509 166.8 L518 162.6 L527 158.5 L536 154.6 L545 150.6 L554 146.7 L563 142.6 L572 138.3 L581 133.8 L590 128.9 L599 123.7 L608 118.0 L617 112.0 L626 105.6 M230 292.5 L239 289.0 L248 285.4 L257 282.0 L266 278.8 L275 275.8 L284 273.0 L293 270.5 L302 268.2 L311 266.0 L320 263.9 L329 261.8 L338 259.7 L347 257.5 L356 255.0 L365 252.3 L374 249.2 L383 245.8 L392 241.9 L401 237.7 L410 233.2 L419 228.3 L428 223.2 L437 217.9 L446 212.5 L455 207.1 L464 201.8 L473 196.6 L482 191.5 L491 186.7 L500 182.2 L509 177.8 L518 173.7 L527 169.7 L536 165.8 L545 161.9 L554 157.9 L563 153.8 L572 149.5 L581 144.9 L590 140.0 L599 134.7 L608 129.0 L617 122.9 L626 116.5 M230 303.6 L239 300.0 L248 296.5 L257 293.1 L266 290.0 L275 287.0 L284 284.3 L293 281.8 L302 279.5 L311 277.4 L320 275.3 L329 273.2 L338 271.1 L347 268.8 L356 266.2 L365 263.4 L374 260.2 L383 256.7 L392 252.8 L401 248.4 L410 243.8 L419 238.9 L428 233.7 L437 228.4 L446 223.0 L455 217.6 L464 212.3 L473 207.2 L482 202.3 L491 197.6 L500 193.1 L509 188.8 L518 184.8 L527 180.8 L536 177.0 L545 173.1 L554 169.2 L563 165.1 L572 160.7 L581 156.0 L590 151.0 L599 145.6 L608 139.9 L617 133.7 L626 127.3 M230 314.7 L239 311.1 L248 307.6 L257 304.3 L266 301.2 L275 298.3 L284 295.6 L293 293.2 L302 290.9 L311 288.8 L320 286.7 L329 284.6 L338 282.4 L347 280.1 L356 277.5 L365 274.5 L374 271.2 L383 267.6 L392 263.5 L401 259.1 L410 254.4 L419 249.4 L428 244.2 L437 238.9 L446 233.5 L455 228.2 L464 223.0 L473 217.9 L482 213.0 L491 208.4 L500 204.0 L509 199.9 L518 195.9 L527 192.0 L536 188.2 L545 184.4 L554 180.4 L563 176.3 L572 171.9 L581 167.1 L590 162.1 L599 156.6 L608 150.8 L617 144.6 L626 138.1 M230 325.8 L239 322.2 L248 318.7 L257 315.4 L266 312.4 L275 309.5 L284 306.9 L293 304.5 L302 302.3 L311 300.2 L320 298.1 L329 296.0 L338 293.8 L347 291.3 L356 288.6 L365 285.6 L374 282.2 L383 278.5 L392 274.3 L401 269.8 L410 265.0 L419 260.0 L428 254.7 L437 249.4 L446 244.0 L455 238.7 L464 233.6 L473 228.6 L482 223.8 L491 219.3 L500 215.0 L509 210.9 L518 207.0 L527 203.2 L536 199.4 L545 195.6 L554 191.6 L563 187.4 L572 183.0 L581 178.2 L590 173.1 L599 167.5 L608 161.6 L617 155.4 L626 148.8 M230 336.9 L239 333.3 L248 329.9 L257 326.6 L266 323.6 L275 320.8 L284 318.3 L293 315.9 L302 313.7 L311 311.6 L320 309.6 L329 307.4 L338 305.1 L347 302.6 L356 299.8 L365 296.7 L374 293.2 L383 289.3 L392 285.1 L401 280.5 L410 275.6 L419 270.5 L428 265.2 L437 259.9 L446 254.6 L455 249.3 L464 244.2 L473 239.3 L482 234.7 L491 230.2 L500 226.0 L509 222.0 L518 218.2 L527 214.4 L536 210.6 L545 206.8 L554 202.8 L563 198.6 L572 194.1 L581 189.3 L590 184.0 L599 178.4 L608 172.5 L617 166.2 L626 159.6 M230 348.0 L239 344.4 L248 341.0 L257 337.8 L266 334.9 L275 332.1 L284 329.6 L293 327.3 L302 325.2 L311 323.1 L320 321.0 L329 318.8 L338 316.4 L347 313.8 L356 311.0 L365 307.7 L374 304.1 L383 300.1 L392 295.8 L401 291.1 L410 286.2 L419 281.0 L428 275.7 L437 270.4 L446 265.1 L455 259.9 L464 254.9 L473 250.1 L482 245.5 L491 241.2 L500 237.1 L509 233.1 L518 229.4 L527 225.6 L536 221.9 L545 218.0 L554 214.0 L563 209.8 L572 205.2 L581 200.3 L590 195.0 L599 189.3 L608 183.3 L617 176.9 L626 170.3 M230 359.1 L239 355.6 L248 352.2 L257 349.0 L266 346.1 L275 343.5 L284 341.0 L293 338.8 L302 336.6 L311 334.5 L320 332.4 L329 330.2 L338 327.7 L347 325.1 L356 322.1 L365 318.7 L374 315.0 L383 310.9 L392 306.5 L401 301.7 L410 296.7 L419 291.5 L428 286.3 L437 280.9 L446 275.7 L455 270.6 L464 265.6 L473 260.9 L482 256.4 L491 252.2 L500 248.1 L509 244.3 L518 240.5 L527 236.8 L536 233.1 L545 229.2 L554 225.2 L563 220.9 L572 216.3 L581 211.3 L590 205.9 L599 200.2 L608 194.1 L617 187.7 L626 181.1 M230 370.2 L239 366.7 L248 363.4 L257 360.3 L266 357.5 L275 354.8 L284 352.4 L293 350.2 L302 348.1 L311 346.0 L320 343.8 L329 341.5 L338 339.0 L347 336.3 L356 333.2 L365 329.7 L374 325.9 L383 321.7 L392 317.2 L401 312.3 L410 307.3 L419 302.1 L428 296.8 L437 291.5 L446 286.3 L455 281.2 L464 276.3 L473 271.7 L482 267.3 L491 263.2 L500 259.2 L509 255.4 L518 251.7 L527 248.0 L536 244.3 L545 240.4 L554 236.4 L563 232.0 L572 227.3 L581 222.2 L590 216.8 L599 211.0 L608 204.9 L617 198.4 L626 191.8 M230 381.4 L239 377.9 L248 374.6 L257 371.6 L266 368.8 L275 366.2 L284 363.9 L293 361.7 L302 359.5 L311 357.4 L320 355.2 L329 352.9 L338 350.3 L347 347.4 L356 344.2 L365 340.7 L374 336.7 L383 332.4 L392 327.8 L401 322.9 L410 317.8 L419 312.6 L428 307.3 L437 302.0 L446 296.9 L455 291.9 L464 287.1 L473 282.5 L482 278.2 L491 274.2 L500 270.3 L509 266.6 L518 262.9 L527 259.3 L536 255.5 L545 251.6 L554 247.5 L563 243.1 L572 238.3 L581 233.2 L590 227.7 L599 221.8 L608 215.6 L617 209.2 L626 202.5 M230 392.6 L239 389.1 L248 385.9 L257 382.9 L266 380.2 L275 377.7 L284 375.3 L293 373.1 L302 371.0 L311 368.9 L320 366.6 L329 364.2 L338 361.5 L347 358.6 L356 355.3 L365 351.6 L374 347.6 L383 343.2 L392 338.5 L401 333.5 L410 328.4 L419 323.1 L428 317.8 L437 312.6 L446 307.5 L455 302.6 L464 297.9 L473 293.4 L482 289.2 L491 285.2 L500 281.4 L509 277.7 L518 274.1 L527 270.5 L536 266.7 L545 262.8 L554 258.6 L563 254.1 L572 249.3 L581 244.1 L590 238.5 L599 232.6 L608 226.4 L617 219.9 L626 213.2 M230 403.8 L239 400.4 L248 397.2 L257 394.3 L266 391.6 L275 389.1 L284 386.8 L293 384.6 L302 382.5 L311 380.3 L320 378.0 L329 375.5 L338 372.8 L347 369.7 L356 366.3 L365 362.5 L374 358.4 L383 353.9 L392 349.1 L401 344.1 L410 338.9 L419 333.6 L428 328.4 L437 323.2 L446 318.1 L455 313.3 L464 308.7 L473 304.3 L482 300.2 L491 296.3 L500 292.6 L509 288.9 L518 285.3 L527 281.7 L536 277.9 L545 274.0 L554 269.7 L563 265.2 L572 260.3 L581 255.0 L590 249.3 L599 243.3 L608 237.1 L617 230.6 L626 223.9 M230 415.0 L239 411.6 L248 408.5 L257 405.6 L266 403.0 L275 400.5 L284 398.3 L293 396.1 L302 393.9 L311 391.7 L320 389.4 L329 386.8 L338 384.0 L347 380.8 L356 377.3 L365 373.4 L374 369.1 L383 364.5 L392 359.7 L401 354.6 L410 349.4 L419 344.1 L428 338.9 L437 333.8 L446 328.8 L455 324.0 L464 319.5 L473 315.2 L482 311.2 L491 307.4 L500 303.7 L509 300.1 L518 296.5 L527 292.9 L536 289.1 L545 285.1 L554 280.8 L563 276.2 L572 271.2 L581 265.8 L590 260.1 L599 254.1 L608 247.8 L617 241.3 L626 234.6 M230 426.3 L239 422.9 L248 419.8 L257 417.0 L266 414.4 L275 412.0 L284 409.8 L293 407.6 L302 405.4 L311 403.2 L320 400.8 L329 398.1 L338 395.2 L347 391.9 L356 388.2 L365 384.2 L374 379.9 L383 375.2 L392 370.3 L401 365.2 L410 359.9 L419 354.7 L428 349.5 L437 344.4 L446 339.5 L455 334.8 L464 330.4 L473 326.2 L482 322.2 L491 318.5 L500 314.9 L509 311.3 L518 307.7 L527 304.1 L536 300.3 L545 296.2 L554 291.9 L563 287.2 L572 282.1 L581 276.7 L590 270.9 L599 264.8 L608 258.5 L617 252.0 L626 245.3 M230 437.5 L239 434.2 L248 431.2 L257 428.4 L266 425.9 L275 423.5 L284 421.3 L293 419.1 L302 416.9 L311 414.6 L320 412.1 L329 409.4 L338 406.3 L347 402.9 L356 399.2 L365 395.1 L374 390.6 L383 385.9 L392 380.9 L401 375.7 L410 370.5 L419 365.2 L428 360.1 L437 355.0 L446 350.2 L455 345.6 L464 341.3 L473 337.2 L482 333.3 L491 329.6 L500 326.0 L509 322.5 L518 318.9 L527 315.3 L536 311.4 L545 307.3 L554 302.9 L563 298.1 L572 293.0 L581 287.5 L590 281.6 L599 275.5 L608 269.1 L617 262.6 L626 256.1 M230 448.8 L239 445.6 L248 442.6 L257 439.9 L266 437.4 L275 435.0 L284 432.8 L293 430.6 L302 428.4 L311 426.0 L320 423.4 L329 420.6 L338 417.5 L347 413.9 L356 410.1 L365 405.9 L374 401.3 L383 396.5 L392 391.4 L401 386.3 L410 381.0 L419 375.8 L428 370.7 L437 365.7 L446 360.9 L455 356.4 L464 352.2 L473 348.2 L482 344.4 L491 340.7 L500 337.2 L509 333.7 L518 330.1 L527 326.5 L536 322.6 L545 318.4 L554 313.9 L563 309.0 L572 303.8 L581 298.2 L590 292.4 L599 286.2 L608 279.8 L617 273.3 L626 266.8 M230 460.1 L239 457.0 L248 454.0 L257 451.4 L266 448.9 L275 446.6 L284 444.3 L293 442.1 L302 439.8 L311 437.4 L320 434.8 L329 431.8 L338 428.6 L347 424.9 L356 421.0 L365 416.6 L374 412.0 L383 407.1 L392 402.0 L401 396.8 L410 391.6 L419 386.4 L428 381.3 L437 376.4 L446 371.7 L455 367.3 L464 363.1 L473 359.2 L482 355.5 L491 351.9 L500 348.4 L509 344.9 L518 341.3 L527 337.6 L536 333.7 L545 329.4 L554 324.9 L563 319.9 L572 314.6 L581 309.0 L590 303.1 L599 296.9 L608 290.5 L617 284.0 L626 277.5 M230 471.5 L239 468.4 L248 465.5 L257 462.8 L266 460.4 L275 458.1 L284 455.9 L293 453.6 L302 451.3 L311 448.8 L320 446.0 L329 443.0 L338 439.6 L347 435.9 L356 431.8 L365 427.4 L374 422.7 L383 417.7 L392 412.6 L401 407.3 L410 402.1 L419 396.9 L428 391.9 L437 387.1 L446 382.5 L455 378.2 L464 374.1 L473 370.2 L482 366.6 L491 363.1 L500 359.6 L509 356.1 L518 352.5 L527 348.8 L536 344.8 L545 340.5 L554 335.8 L563 330.8 L572 325.4 L581 319.7 L590 313.7 L599 307.5 L608 301.1 L617 294.7 L626 288.2 M230 482.9 L239 479.8 L248 477.0 L257 474.4 L266 471.9 L275 469.7 L284 467.4 L293 465.1 L302 462.7 L311 460.2 L320 457.3 L329 454.2 L338 450.7 L347 446.8 L356 442.6 L365 438.1 L374 433.3 L383 428.3 L392 423.1 L401 417.9 L410 412.7 L419 407.5 L428 402.6 L437 397.8 L446 393.3 L455 389.1 L464 385.1 L473 381.3 L482 377.7 L491 374.2 L500 370.8 L509 367.3 L518 363.7 L527 359.9 L536 355.8 L545 351.5 L554 346.7 L563 341.6 L572 336.2 L581 330.5 L590 324.4 L599 318.2 L608 311.8 L617 305.4 L626 299.0 M230 494.3 L239 491.2 L248 488.5 L257 485.9 L266 483.5 L275 481.2 L284 478.9 L293 476.6 L302 474.2 L311 471.5 L320 468.6 L329 465.3 L338 461.7 L347 457.7 L356 453.4 L365 448.8 L374 443.9 L383 438.9 L392 433.7 L401 428.4 L410 423.2 L419 418.2 L428 413.3 L437 408.6 L446 404.2 L455 400.0 L464 396.1 L473 392.4 L482 388.9 L491 385.4 L500 382.0 L509 378.5 L518 374.9 L527 371.0 L536 366.9 L545 362.4 L554 357.6 L563 352.5 L572 347.0 L581 341.1 L590 335.1 L599 328.8 L608 322.5 L617 316.1 L626 309.7 M230 505.7 L239 502.7 L248 500.0 L257 497.5 L266 495.1 L275 492.8 L284 490.5 L293 488.1 L302 485.6 L311 482.8 L320 479.8 L329 476.4 L338 472.7 L347 468.6 L356 464.2 L365 459.5 L374 454.6 L383 449.4 L392 444.2 L401 439.0 L410 433.8 L419 428.8 L428 424.0 L437 419.4 L446 415.0 L455 411.0 L464 407.1 L473 403.5 L482 400.0 L491 396.6 L500 393.2 L509 389.7 L518 386.0 L527 382.1 L536 377.9 L545 373.4 L554 368.5 L563 363.3 L572 357.7 L581 351.8 L590 345.7 L599 339.5 L608 333.1 L617 326.8 L626 320.5 M230 517.2 L239 514.2 L248 511.5 L257 509.0 L266 506.7 L275 504.3 L284 502.0 L293 499.6 L302 497.0 L311 494.1 L320 491.0 L329 487.5 L338 483.7 L347 479.5 L356 475.0 L365 470.2 L374 465.2 L383 460.0 L392 454.8 L401 449.6 L410 444.4 L419 439.5 L428 434.7 L437 430.2 L446 425.9 L455 422.0 L464 418.2 L473 414.6 L482 411.2 L491 407.8 L500 404.4 L509 400.8 L518 397.1 L527 393.2 L536 388.9 L545 384.3 L554 379.3 L563 374.0 L572 368.4 L581 362.5 L590 356.4 L599 350.1 L608 343.8 L617 337.5 L626 331.3 M230 528.7 L239 525.8 L248 523.1 L257 520.6 L266 518.2 L275 515.9 L284 513.6 L293 511.1 L302 508.4 L311 505.4 L320 502.2 L329 498.6 L338 494.6 L347 490.3 L356 485.7 L365 480.8 L374 475.8 L383 470.6 L392 465.3 L401 460.1 L410 455.1 L419 450.2 L428 445.5 L437 441.0 L446 436.9 L455 433.0 L464 429.3 L473 425.8 L482 422.4 L491 419.0 L500 415.6 L509 412.0 L518 408.2 L527 404.2 L536 399.9 L545 395.2 L554 390.1 L563 384.8 L572 379.1 L581 373.1 L590 367.0 L599 360.7 L608 354.5 L617 348.2 L626 342.1 M230 540.2 L239 537.3 L248 534.7 L257 532.2 L266 529.8 L275 527.5 L284 525.1 L293 522.5 L302 519.7 L311 516.7 L320 513.3 L329 509.6 L338 505.5 L347 501.1 L356 496.4 L365 491.5 L374 486.4 L383 481.2 L392 475.9 L401 470.7 L410 465.7 L419 460.9 L428 456.3 L437 451.9 L446 447.8 L455 444.0 L464 440.4 L473 436.9 L482 433.5 L491 430.2 L500 426.7 L509 423.1 L518 419.3 L527 415.2 L536 410.8 L545 406.0 L554 400.9 L563 395.5 L572 389.7 L581 383.8 L590 377.6 L599 371.4 L608 365.1 L617 359.0 L626 352.9 M230 551.7 L239 548.9 L248 546.3 L257 543.8 L266 541.5 L275 539.1 L284 536.6 L293 534.0 L302 531.1 L311 527.9 L320 524.4 L329 520.6 L338 516.4 L347 511.9 L356 507.1 L365 502.1 L374 497.0 L383 491.7 L392 486.5 L401 481.4 L410 476.4 L419 471.6 L428 467.1 L437 462.8 L446 458.8 L455 455.1 L464 451.5 L473 448.1 L482 444.7 L491 441.4 L500 437.9 L509 434.3 L518 430.4 L527 426.2 L536 421.7 L545 416.9 L554 411.7 L563 406.2 L572 400.4 L581 394.4 L590 388.2 L599 382.0 L608 375.8 L617 369.7 L626 363.8 M230 563.3 L239 560.5 L248 557.9 L257 555.5 L266 553.1 L275 550.6 L284 548.1 L293 545.4 L302 542.4 L311 539.1 L320 535.5 L329 531.6 L338 527.3 L347 522.7 L356 517.8 L365 512.7 L374 507.5 L383 502.3 L392 497.1 L401 492.0 L410 487.1 L419 482.4 L428 477.9 L437 473.7 L446 469.8 L455 466.1 L464 462.6 L473 459.3 L482 455.9 L491 452.5 L500 449.1 L509 445.4 L518 441.4 L527 437.2 L536 432.6 L545 427.7 L554 422.4 L563 416.8 L572 411.0 L581 405.0 L590 398.8 L599 392.7 L608 386.5 L617 380.5 L626 374.7 M230 574.9 L239 572.1 L248 569.5 L257 567.1 L266 564.7 L275 562.2 L284 559.6 L293 556.8 L302 553.7 L311 550.3 L320 546.6 L329 542.5 L338 538.1 L347 533.4 L356 528.5 L365 523.4 L374 518.1 L383 512.9 L392 507.7 L401 502.6 L410 497.8 L419 493.1 L428 488.8 L437 484.7 L446 480.8 L455 477.2 L464 473.8 L473 470.4 L482 467.1 L491 463.7 L500 460.2 L509 456.5 L518 452.5 L527 448.1 L536 443.5 L545 438.5 L554 433.1 L563 427.5 L572 421.6 L581 415.6 L590 409.5 L599 403.3 L608 397.2 L617 391.3 L626 385.5 M230 586.5 L239 583.8 L248 581.2 L257 578.7 L266 576.3 L275 573.7 L284 571.1 L293 568.2 L302 565.0 L311 561.5 L320 557.6 L329 553.5 L338 549.0 L347 544.2 L356 539.1 L365 534.0 L374 528.7 L383 523.5 L392 518.3 L401 513.3 L410 508.5 L419 503.9 L428 499.7 L437 495.7 L446 491.9 L455 488.3 L464 484.9 L473 481.6 L482 478.3 L491 474.9 L500 471.3 L509 467.5 L518 463.5 L527 459.1 L536 454.3 L545 449.2 L554 443.8 L563 438.1 L572 432.2 L581 426.2 L590 420.1 L599 414.0 L608 408.0 L617 402.1 L626 396.5 M230 598.4 L239 595.7 L248 593.1 L257 590.7 L266 588.2 L275 585.6 L284 582.8 L293 579.9 L302 576.6 L311 573.0 L320 569.0 L329 564.7 L338 560.1 L347 555.2 L356 550.1 L365 544.9 L374 539.7 L383 534.4 L392 529.3 L401 524.4 L410 519.6 L419 515.2 L428 511.0 L437 507.0 L446 503.3 L455 499.8 L464 496.5 L473 493.2 L482 489.9 L491 486.4 L500 482.8 L509 479.0 L518 474.8 L527 470.3 L536 465.5 L545 460.3 L554 454.9 L563 449.1 L572 443.2 L581 437.1 L590 431.1 L599 425.0 L608 419.1 L617 413.3 L626 407.8 M230 611.6 L239 609.0 L248 606.5 L257 604.0 L266 601.5 L275 598.9 L284 596.1 L293 593.0 L302 589.7 L311 586.0 L320 581.9 L329 577.5 L338 572.8 L347 567.9 L356 562.8 L365 557.6 L374 552.3 L383 547.1 L392 542.1 L401 537.2 L410 532.5 L419 528.2 L428 524.0 L437 520.2 L446 516.6 L455 513.2 L464 509.8 L473 506.5 L482 503.2 L491 499.7 L500 496.1 L509 492.1 L518 487.9 L527 483.3 L536 478.4 L545 473.2 L554 467.6 L563 461.8 L572 455.9 L581 449.8 L590 443.7 L599 437.7 L608 431.8 L617 426.1 L626 420.7 M230 624.9 L239 622.3 L248 619.8 L257 617.4 L266 614.9 L275 612.2 L284 609.3 L293 606.2 L302 602.7 L311 598.9 L320 594.8 L329 590.3 L338 585.6 L347 580.6 L356 575.5 L365 570.2 L374 565.0 L383 559.8 L392 554.8 L401 550.0 L410 545.5 L419 541.2 L428 537.2 L437 533.4 L446 529.9 L455 526.5 L464 523.2 L473 519.9 L482 516.5 L491 513.0 L500 509.3 L509 505.3 L518 501.0 L527 496.3 L536 491.3 L545 486.0 L554 480.3 L563 474.5 L572 468.5 L581 462.4 L590 456.4 L599 450.4 L608 444.6 L617 439.0 L626 433.6 M230 638.1 L239 635.6 L248 633.2 L257 630.7 L266 628.2 L275 625.5 L284 622.5 L293 619.3 L302 615.8 L311 611.9 L320 607.7 L329 603.1 L338 598.3 L347 593.3 L356 588.1 L365 582.9 L374 577.7 L383 572.6 L392 567.6 L401 562.9 L410 558.4 L419 554.2 L428 550.3 L437 546.6 L446 543.1 L455 539.8 L464 536.5 L473 533.2 L482 529.8 L491 526.3 L500 522.5 L509 518.4 L518 514.0 L527 509.2 L536 504.1 L545 498.7 L554 493.1 L563 487.2 L572 481.2 L581 475.1 L590 469.1 L599 463.1 L608 457.4 L617 451.9 L626 446.6 M230 651.4 L239 649.0 L248 646.5 L257 644.1 L266 641.5 L275 638.7 L284 635.7 L293 632.4 L302 628.8 L311 624.8 L320 620.5 L329 615.9 L338 611.0 L347 605.9 L356 600.8 L365 595.5 L374 590.4 L383 585.3 L392 580.4 L401 575.8 L410 571.4 L419 567.3 L428 563.5 L437 559.9 L446 556.4 L455 553.1 L464 549.9 L473 546.6 L482 543.2 L491 539.5 L500 535.7 L509 531.5 L518 527.0 L527 522.1 L536 517.0 L545 511.5 L554 505.8 L563 499.8 L572 493.8 L581 487.8 L590 481.8 L599 475.9 L608 470.2 L617 464.8 L626 459.6 M230 664.7 L239 662.3 L248 659.9 L257 657.4 L266 654.8 L275 652.0 L284 648.9 L293 645.5 L302 641.8 L311 637.7 L320 633.3 L329 628.6 L338 623.7 L347 618.6 L356 613.4 L365 608.2 L374 603.1 L383 598.1 L392 593.3 L401 588.7 L410 584.4 L419 580.4 L428 576.7 L437 573.1 L446 569.7 L455 566.5 L464 563.2 L473 559.9 L482 556.4 L491 552.8 L500 548.8 L509 544.6 L518 540.0 L527 535.0 L536 529.8 L545 524.2 L554 518.4 L563 512.5 L572 506.5 L581 500.4 L590 494.5 L599 488.7 L608 483.0 L617 477.7 L626 472.6 M230 678.1 L239 675.6 L248 673.2 L257 670.7 L266 668.1 L275 665.2 L284 662.1 L293 658.6 L302 654.8 L311 650.6 L320 646.1 L329 641.4 L338 636.4 L347 631.3 L356 626.1 L365 620.9 L374 615.8 L383 610.8 L392 606.1 L401 601.7 L410 597.5 L419 593.5 L428 589.9 L437 586.4 L446 583.1 L455 579.8 L464 576.6 L473 573.2 L482 569.7 L491 566.0 L500 562.0 L509 557.6 L518 552.9 L527 547.9 L536 542.6 L545 536.9 L554 531.1 L563 525.1 L572 519.1 L581 513.1 L590 507.2 L599 501.4 L608 495.9 L617 490.7 L626 485.7 M230 691.4 L239 689.0 L248 686.6 L257 684.0 L266 681.3 L275 678.4 L284 675.2 L293 671.6 L302 667.7 L311 663.4 L320 658.9 L329 654.1 L338 649.0 L347 643.9 L356 638.7 L365 633.6 L374 628.5 L383 623.6 L392 619.0 L401 614.6 L410 610.5 L419 606.7 L428 603.1 L437 599.7 L446 596.4 L455 593.2 L464 589.9 L473 586.5 L482 583.0 L491 579.2 L500 575.1 L509 570.6 L518 565.9 L527 560.7 L536 555.3 L545 549.6 L554 543.8 L563 537.8 L572 531.8 L581 525.8 L590 519.9 L599 514.3 L608 508.8 L617 503.6 L626 498.7 M230 704.7 L239 702.3 L248 699.9 L257 697.4 L266 694.6 L275 691.6 L284 688.3 L293 684.6 L302 680.6 L311 676.3 L320 671.6 L329 666.8 L338 661.7 L347 656.6 L356 651.4 L365 646.3 L374 641.3 L383 636.5 L392 631.9 L401 627.6 L410 623.6 L419 619.9 L428 616.3 L437 613.0 L446 609.7 L455 606.5 L464 603.2 L473 599.8 L482 596.2 L491 592.4 L500 588.2 L509 583.6 L518 578.8 L527 573.6 L536 568.1 L545 562.3 L554 556.4 L563 550.4 L572 544.4 L581 538.5 L590 532.7 L599 527.1 L608 521.7 L617 516.7 L626 511.8 M230 718.1 L239 715.7 L248 713.2 L257 710.6 L266 707.8 L275 704.7 L284 701.3 L293 697.6 L302 693.5 L311 689.1 L320 684.4 L329 679.4 L338 674.4 L347 669.2 L356 664.0 L365 659.0 L374 654.0 L383 649.3 L392 644.9 L401 640.7 L410 636.7 L419 633.1 L428 629.6 L437 626.3 L446 623.1 L455 619.9 L464 616.6 L473 613.1 L482 609.5 L491 605.5 L500 601.2 L509 596.6 L518 591.6 L527 586.4 L536 580.8 L545 575.0 L554 569.1 L563 563.1 L572 557.1 L581 551.2 L590 545.5 L599 540.0 L608 534.7 L617 529.7 L626 525.0 M230 731.4 L239 729.0 L248 726.6 L257 723.9 L266 721.0 L275 717.9 L284 714.4 L293 710.5 L302 706.3 L311 701.9 L320 697.1 L329 692.1 L338 687.0 L347 681.9 L356 676.7 L365 671.7 L374 666.8 L383 662.2 L392 657.8 L401 653.7 L410 649.9 L419 646.3 L428 642.9 L437 639.6 L446 636.4 L455 633.2 L464 629.9 L473 626.4 L482 622.7 L491 618.6 L500 614.2 L509 609.5 L518 604.5 L527 599.1 L536 593.5 L545 587.7 L554 581.7 L563 575.7 L572 569.8 L581 563.9 L590 558.3 L599 552.8 L608 547.7 L617 542.8 L626 538.1" fill="none" stroke="url(#lg2)" stroke-width="1.3"/>
<path d="M230 4.6 L239 3.2 L248 2.0 L257 0.9 L266 0.1 L275 -0.7 L284 -1.5 L293 -2.3 L302 -3.2 L311 -4.4 L320 -5.9 L329 -7.6 L338 -9.8 L347 -12.4 L356 -15.5 L365 -18.9 L374 -22.7 L383 -26.8 L392 -31.2 L401 -35.8 L410 -40.4 L419 -45.1 L428 -49.7 L437 -54.2 L446 -58.5 L455 -62.6 L464 -66.6 L473 -70.4 L482 -74.0 L491 -77.5 L500 -81.0 L509 -84.6 L518 -88.4 L527 -92.3 L536 -96.5 L545 -101.1 L554 -106.1 L563 -111.5 L572 -117.4 L581 -123.6 L590 -130.2 L599 -137.1 L608 -144.3 L617 -151.6 L626 -159.0 M230 15.9 L239 14.6 L248 13.4 L257 12.4 L266 11.6 L275 10.8 L284 10.1 L293 9.2 L302 8.2 L311 7.0 L320 5.4 L329 3.5 L338 1.2 L347 -1.5 L356 -4.6 L365 -8.2 L374 -12.1 L383 -16.2 L392 -20.7 L401 -25.2 L410 -29.9 L419 -34.5 L428 -39.1 L437 -43.5 L446 -47.7 L455 -51.8 L464 -55.6 L473 -59.3 L482 -62.9 L491 -66.4 L500 -69.9 L509 -73.4 L518 -77.2 L527 -81.2 L536 -85.5 L545 -90.1 L554 -95.2 L563 -100.7 L572 -106.6 L581 -112.9 L590 -119.5 L599 -126.5 L608 -133.6 L617 -140.9 L626 -148.3 M230 27.3 L239 26.0 L248 24.9 L257 24.0 L266 23.1 L275 22.4 L284 21.6 L293 20.7 L302 19.7 L311 18.3 L320 16.7 L329 14.7 L338 12.3 L347 9.5 L356 6.2 L365 2.6 L374 -1.4 L383 -5.7 L392 -10.1 L401 -14.7 L410 -19.3 L419 -23.9 L428 -28.4 L437 -32.7 L446 -36.9 L455 -40.9 L464 -44.6 L473 -48.2 L482 -51.7 L491 -55.2 L500 -58.7 L509 -62.2 L518 -66.0 L527 -70.0 L536 -74.4 L545 -79.1 L554 -84.3 L563 -89.8 L572 -95.8 L581 -102.2 L590 -108.9 L599 -115.8 L608 -123.0 L617 -130.3 L626 -137.6 M230 38.7 L239 37.5 L248 36.4 L257 35.5 L266 34.7 L275 33.9 L284 33.1 L293 32.2 L302 31.1 L311 29.7 L320 28.0 L329 25.8 L338 23.3 L347 20.4 L356 17.0 L365 13.3 L374 9.2 L383 4.9 L392 0.4 L401 -4.1 L410 -8.7 L419 -13.3 L428 -17.7 L437 -22.0 L446 -26.0 L455 -29.9 L464 -33.6 L473 -37.1 L482 -40.6 L491 -44.0 L500 -47.5 L509 -51.0 L518 -54.8 L527 -58.9 L536 -63.3 L545 -68.2 L554 -73.4 L563 -79.0 L572 -85.1 L581 -91.5 L590 -98.2 L599 -105.2 L608 -112.3 L617 -119.6 L626 -126.8 M230 50.1 L239 49.0 L248 47.9 L257 47.1 L266 46.3 L275 45.5 L284 44.7 L293 43.7 L302 42.5 L311 41.0 L320 39.2 L329 36.9 L338 34.3 L347 31.2 L356 27.8 L365 24.0 L374 19.8 L383 15.5 L392 11.0 L401 6.4 L410 1.9 L419 -2.6 L428 -7.0 L437 -11.2 L446 -15.2 L455 -19.0 L464 -22.6 L473 -26.0 L482 -29.4 L491 -32.8 L500 -36.3 L509 -39.9 L518 -43.7 L527 -47.8 L536 -52.3 L545 -57.2 L554 -62.5 L563 -68.2 L572 -74.3 L581 -80.8 L590 -87.6 L599 -94.5 L608 -101.7 L617 -108.9 L626 -116.0 M230 61.6 L239 60.5 L248 59.5 L257 58.6 L266 57.9 L275 57.1 L284 56.2 L293 55.2 L302 53.9 L311 52.3 L320 50.4 L329 48.0 L338 45.3 L347 42.1 L356 38.5 L365 34.6 L374 30.5 L383 26.1 L392 21.6 L401 17.0 L410 12.5 L419 8.0 L428 3.7 L437 -0.4 L446 -4.3 L455 -8.0 L464 -11.5 L473 -14.9 L482 -18.3 L491 -21.6 L500 -25.1 L509 -28.7 L518 -32.6 L527 -36.8 L536 -41.3 L545 -46.3 L554 -51.7 L563 -57.5 L572 -63.6 L581 -70.1 L590 -76.9 L599 -83.9 L608 -91.0 L617 -98.1 L626 -105.2 M230 73.1 L239 72.0 L248 71.1 L257 70.2 L266 69.4 L275 68.6 L284 67.7 L293 66.6 L302 65.3 L311 63.6 L320 61.5 L329 59.1 L338 56.2 L347 52.9 L356 49.3 L365 45.3 L374 41.1 L383 36.6 L392 32.1 L401 27.6 L410 23.1 L419 18.7 L428 14.5 L437 10.5 L446 6.7 L455 3.1 L464 -0.4 L473 -3.8 L482 -7.1 L491 -10.4 L500 -13.9 L509 -17.5 L518 -21.5 L527 -25.7 L536 -30.4 L545 -35.4 L554 -40.9 L563 -46.7 L572 -53.0 L581 -59.5 L590 -66.3 L599 -73.3 L608 -80.3 L617 -87.4 L626 -94.4 M230 84.6 L239 83.6 L248 82.6 L257 81.8 L266 81.0 L275 80.2 L284 79.3 L293 78.1 L302 76.6 L311 74.9 L320 72.7 L329 70.1 L338 67.1 L347 63.7 L356 60.0 L365 55.9 L374 51.7 L383 47.2 L392 42.7 L401 38.2 L410 33.7 L419 29.4 L428 25.3 L437 21.4 L446 17.6 L455 14.1 L464 10.7 L473 7.4 L482 4.1 L491 0.8 L500 -2.7 L509 -6.4 L518 -10.4 L527 -14.7 L536 -19.4 L545 -24.5 L554 -30.1 L563 -36.0 L572 -42.3 L581 -48.9 L590 -55.7 L599 -62.6 L608 -69.7 L617 -76.7 L626 -83.6 M230 96.2 L239 95.1 L248 94.2 L257 93.4 L266 92.7 L275 91.8 L284 90.8 L293 89.5 L302 88.0 L311 86.1 L320 83.8 L329 81.1 L338 78.0 L347 74.5 L356 70.7 L365 66.6 L374 62.2 L383 57.8 L392 53.3 L401 48.8 L410 44.4 L419 40.2 L428 36.1 L437 32.3 L446 28.6 L455 25.1 L464 21.8 L473 18.6 L482 15.3 L491 12.0 L500 8.5 L509 4.7 L518 0.7 L527 -3.7 L536 -8.5 L545 -13.7 L554 -19.3 L563 -25.3 L572 -31.6 L581 -38.3 L590 -45.1 L599 -52.0 L608 -59.0 L617 -65.9 L626 -72.7 M230 107.7 L239 106.7 L248 105.9 L257 105.1 L266 104.3 L275 103.4 L284 102.3 L293 101.0 L302 99.3 L311 97.3 L320 94.9 L329 92.1 L338 88.9 L347 85.3 L356 81.4 L365 77.2 L374 72.8 L383 68.4 L392 63.9 L401 59.4 L410 55.1 L419 50.9 L428 47.0 L437 43.2 L446 39.6 L455 36.2 L464 33.0 L473 29.7 L482 26.5 L491 23.1 L500 19.6 L509 15.8 L518 11.7 L527 7.3 L536 2.4 L545 -2.9 L554 -8.6 L563 -14.6 L572 -21.0 L581 -27.6 L590 -34.4 L599 -41.3 L608 -48.3 L617 -55.1 L626 -61.9 M230 119.3 L239 118.4 L248 117.5 L257 116.7 L266 115.9 L275 114.9 L284 113.8 L293 112.4 L302 110.6 L311 108.5 L320 106.0 L329 103.0 L338 99.7 L347 96.0 L356 92.0 L365 87.8 L374 83.4 L383 78.9 L392 74.5 L401 70.1 L410 65.8 L419 61.7 L428 57.8 L437 54.1 L446 50.7 L455 47.3 L464 44.1 L473 40.9 L482 37.7 L491 34.3 L500 30.8 L509 26.9 L518 22.7 L527 18.2 L536 13.2 L545 7.9 L554 2.1 L563 -4.0 L572 -10.4 L581 -17.0 L590 -23.8 L599 -30.7 L608 -37.5 L617 -44.3 L626 -51.0 M230 130.9 L239 130.0 L248 129.2 L257 128.3 L266 127.5 L275 126.5 L284 125.2 L293 123.7 L302 121.9 L311 119.6 L320 117.0 L329 114.0 L338 110.5 L347 106.7 L356 102.7 L365 98.4 L374 94.0 L383 89.5 L392 85.1 L401 80.7 L410 76.5 L419 72.5 L428 68.7 L437 65.1 L446 61.7 L455 58.4 L464 55.3 L473 52.1 L482 48.9 L491 45.5 L500 41.9 L509 38.0 L518 33.7 L527 29.1 L536 24.1 L545 18.6 L554 12.8 L563 6.6 L572 0.2 L581 -6.4 L590 -13.2 L599 -20.0 L608 -26.8 L617 -33.5 L626 -40.0 M230 142.6 L239 141.7 L248 140.8 L257 140.0 L266 139.1 L275 138.0 L284 136.7 L293 135.1 L302 133.1 L311 130.8 L320 128.0 L329 124.9 L338 121.3 L347 117.5 L356 113.3 L365 109.0 L374 104.6 L383 100.1 L392 95.7 L401 91.4 L410 87.3 L419 83.4 L428 79.6 L437 76.1 L446 72.8 L455 69.6 L464 66.4 L473 63.3 L482 60.0 L491 56.6 L500 53.0 L509 49.0 L518 44.7 L527 40.0 L536 34.9 L545 29.4 L554 23.5 L563 17.3 L572 10.8 L581 4.2 L590 -2.6 L599 -9.4 L608 -16.1 L617 -22.7 L626 -29.1 M230 154.2 L239 153.3 L248 152.5 L257 151.6 L266 150.7 L275 149.5 L284 148.1 L293 146.4 L302 144.4 L311 141.9 L320 139.0 L329 135.7 L338 132.1 L347 128.2 L356 124.0 L365 119.6 L374 115.2 L383 110.8 L392 106.4 L401 102.1 L410 98.1 L419 94.2 L428 90.6 L437 87.2 L446 83.9 L455 80.7 L464 77.6 L473 74.5 L482 71.2 L491 67.8 L500 64.1 L509 60.1 L518 55.7 L527 50.9 L536 45.7 L545 40.1 L554 34.1 L563 27.9 L572 21.4 L581 14.8 L590 8.0 L599 1.3 L608 -5.3 L617 -11.8 L626 -18.1 M230 165.9 L239 165.0 L248 164.2 L257 163.3 L266 162.3 L275 161.1 L284 159.6 L293 157.7 L302 155.5 L311 152.9 L320 150.0 L329 146.6 L338 142.8 L347 138.8 L356 134.6 L365 130.2 L374 125.8 L383 121.4 L392 117.1 L401 112.9 L410 108.9 L419 105.1 L428 101.6 L437 98.2 L446 95.0 L455 91.9 L464 88.8 L473 85.7 L482 82.4 L491 78.9 L500 75.2 L509 71.1 L518 66.6 L527 61.7 L536 56.4 L545 50.7 L554 44.7 L563 38.5 L572 32.0 L581 25.4 L590 18.7 L599 12.0 L608 5.5 L617 -0.9 L626 -7.1 M230 177.6 L239 176.7 L248 175.8 L257 174.9 L266 173.8 L275 172.6 L284 171.0 L293 169.0 L302 166.7 L311 164.0 L320 160.9 L329 157.4 L338 153.6 L347 149.5 L356 145.2 L365 140.8 L374 136.4 L383 132.0 L392 127.8 L401 123.7 L410 119.7 L419 116.1 L428 112.6 L437 109.3 L446 106.1 L455 103.1 L464 100.0 L473 96.8 L482 93.6 L491 90.0 L500 86.2 L509 82.0 L518 77.5 L527 72.5 L536 67.1 L545 61.4 L554 55.4 L563 49.0 L572 42.6 L581 36.0 L590 29.3 L599 22.8 L608 16.3 L617 10.0 L626 3.9 M230 189.3 L239 188.4 L248 187.5 L257 186.6 L266 185.4 L275 184.0 L284 182.3 L293 180.3 L302 177.9 L311 175.0 L320 171.8 L329 168.2 L338 164.3 L347 160.2 L356 155.9 L365 151.5 L374 147.0 L383 142.7 L392 138.5 L401 134.4 L410 130.6 L419 127.0 L428 123.6 L437 120.4 L446 117.3 L455 114.2 L464 111.2 L473 108.0 L482 104.7 L491 101.1 L500 97.2 L509 93.0 L518 88.3 L527 83.3 L536 77.8 L545 72.0 L554 66.0 L563 59.6 L572 53.1 L581 46.6 L590 40.0 L599 33.5 L608 27.1 L617 20.9 L626 15.0 M230 201.0 L239 200.1 L248 199.2 L257 198.2 L266 197.0 L275 195.5 L284 193.7 L293 191.5 L302 189.0 L311 186.0 L320 182.7 L329 179.0 L338 175.0 L347 170.8 L356 166.5 L365 162.1 L374 157.7 L383 153.4 L392 149.2 L401 145.3 L410 141.5 L419 138.0 L428 134.7 L437 131.5 L446 128.4 L455 125.4 L464 122.4 L473 119.2 L482 115.8 L491 112.2 L500 108.2 L509 103.9 L518 99.2 L527 94.0 L536 88.5 L545 82.7 L554 76.5 L563 70.2 L572 63.7 L581 57.2 L590 50.7 L599 44.2 L608 38.0 L617 31.9 L626 26.1 M230 212.8 L239 211.8 L248 210.9 L257 209.8 L266 208.5 L275 206.9 L284 205.0 L293 202.7 L302 200.1 L311 197.0 L320 193.5 L329 189.8 L338 185.7 L347 181.5 L356 177.1 L365 172.7 L374 168.3 L383 164.1 L392 160.0 L401 156.1 L410 152.4 L419 149.0 L428 145.7 L437 142.6 L446 139.6 L455 136.6 L464 133.6 L473 130.4 L482 126.9 L491 123.2 L500 119.2 L509 114.8 L518 110.0 L527 104.8 L536 99.2 L545 93.3 L554 87.1 L563 80.8 L572 74.3 L581 67.8 L590 61.4 L599 55.0 L608 48.9 L617 42.9 L626 37.2 M230 224.5 L239 223.6 L248 222.6 L257 221.4 L266 220.0 L275 218.4 L284 216.3 L293 213.9 L302 211.1 L311 207.9 L320 204.4 L329 200.5 L338 196.4 L347 192.1 L356 187.7 L365 183.3 L374 179.0 L383 174.8 L392 170.8 L401 167.0 L410 163.4 L419 160.0 L428 156.8 L437 153.8 L446 150.8 L455 147.8 L464 144.7 L473 141.5 L482 138.0 L491 134.3 L500 130.2 L509 125.6 L518 120.7 L527 115.5 L536 109.8 L545 103.9 L554 97.7 L563 91.3 L572 84.9 L581 78.4 L590 72.1 L599 65.8 L608 59.8 L617 53.9 L626 48.3 M230 236.2 L239 235.3 L248 234.2 L257 233.0 L266 231.5 L275 229.8 L284 227.6 L293 225.1 L302 222.1 L311 218.8 L320 215.2 L329 211.2 L338 207.1 L347 202.8 L356 198.4 L365 194.0 L374 189.7 L383 185.6 L392 181.6 L401 177.9 L410 174.4 L419 171.1 L428 167.9 L437 164.9 L446 162.0 L455 159.0 L464 155.9 L473 152.7 L482 149.1 L491 145.3 L500 141.1 L509 136.5 L518 131.5 L527 126.1 L536 120.4 L545 114.4 L554 108.2 L563 101.9 L572 95.5 L581 89.1 L590 82.8 L599 76.7 L608 70.7 L617 65.0 L626 59.5 M230 248.0 L239 247.0 L248 245.9 L257 244.6 L266 243.0 L275 241.1 L284 238.9 L293 236.2 L302 233.2 L311 229.7 L320 226.0 L329 222.0 L338 217.7 L347 213.4 L356 209.0 L365 204.7 L374 200.4 L383 196.3 L392 192.5 L401 188.8 L410 185.4 L419 182.1 L428 179.1 L437 176.1 L446 173.2 L455 170.2 L464 167.1 L473 163.8 L482 160.2 L491 156.3 L500 152.0 L509 147.3 L518 142.2 L527 136.8 L536 131.0 L545 125.0 L554 118.8 L563 112.4 L572 106.1 L581 99.8 L590 93.5 L599 87.5 L608 81.7 L617 76.1 L626 70.7 M230 259.8 L239 258.7 L248 257.6 L257 256.2 L266 254.5 L275 252.5 L284 250.1 L293 247.3 L302 244.1 L311 240.6 L320 236.8 L329 232.7 L338 228.4 L347 224.1 L356 219.7 L365 215.4 L374 211.2 L383 207.1 L392 203.3 L401 199.8 L410 196.4 L419 193.2 L428 190.2 L437 187.3 L446 184.4 L455 181.4 L464 178.2 L473 174.9 L482 171.2 L491 167.2 L500 162.8 L509 158.1 L518 152.9 L527 147.4 L536 141.6 L545 135.6 L554 129.3 L563 123.0 L572 116.7 L581 110.4 L590 104.3 L599 98.4 L608 92.7 L617 87.2 L626 81.9 M230 271.5 L239 270.5 L248 269.2 L257 267.7 L266 265.9 L275 263.8 L284 261.3 L293 258.4 L302 255.1 L311 251.5 L320 247.5 L329 243.4 L338 239.1 L347 234.7 L356 230.3 L365 226.1 L374 221.9 L383 218.0 L392 214.2 L401 210.7 L410 207.5 L419 204.4 L428 201.4 L437 198.5 L446 195.6 L455 192.6 L464 189.4 L473 186.0 L482 182.2 L491 178.2 L500 173.7 L509 168.8 L518 163.6 L527 158.0 L536 152.2 L545 146.1 L554 139.9 L563 133.6 L572 127.3 L581 121.1 L590 115.1 L599 109.3 L608 103.7 L617 98.3 L626 93.1 M230 283.3 L239 282.2 L248 280.8 L257 279.2 L266 277.3 L275 275.1 L284 272.4 L293 269.4 L302 266.0 L311 262.3 L320 258.3 L329 254.1 L338 249.8 L347 245.4 L356 241.0 L365 236.8 L374 232.7 L383 228.8 L392 225.2 L401 221.7 L410 218.5 L419 215.5 L428 212.6 L437 209.7 L446 206.8 L455 203.7 L464 200.5 L473 197.0 L482 193.2 L491 189.1 L500 184.5 L509 179.6 L518 174.3 L527 168.6 L536 162.7 L545 156.6 L554 150.4 L563 144.2 L572 138.0 L581 131.9 L590 125.9 L599 120.2 L608 114.7 L617 109.5 L626 104.4 M230 295.1 L239 293.9 L248 292.4 L257 290.8 L266 288.7 L275 286.4 L284 283.6 L293 280.4 L302 276.9 L311 273.1 L320 269.0 L329 264.8 L338 260.4 L347 256.0 L356 251.7 L365 247.5 L374 243.5 L383 239.7 L392 236.1 L401 232.8 L410 229.6 L419 226.6 L428 223.8 L437 220.9 L446 218.0 L455 214.9 L464 211.6 L473 208.1 L482 204.2 L491 199.9 L500 195.3 L509 190.3 L518 184.9 L527 179.2 L536 173.3 L545 167.2 L554 161.0 L563 154.8 L572 148.6 L581 142.6 L590 136.8 L599 131.2 L608 125.8 L617 120.6 L626 115.7 M230 306.8 L239 305.5 L248 304.0 L257 302.2 L266 300.1 L275 297.6 L284 294.7 L293 291.4 L302 287.8 L311 283.9 L320 279.8 L329 275.5 L338 271.1 L347 266.7 L356 262.4 L365 258.3 L374 254.3 L383 250.6 L392 247.1 L401 243.8 L410 240.7 L419 237.8 L428 234.9 L437 232.1 L446 229.2 L455 226.1 L464 222.7 L473 219.1 L482 215.1 L491 210.8 L500 206.1 L509 201.0 L518 195.5 L527 189.8 L536 183.8 L545 177.7 L554 171.5 L563 165.4 L572 159.3 L581 153.4 L590 147.7 L599 142.2 L608 136.9 L617 131.8 L626 127.0 M230 318.6 L239 317.2 L248 315.6 L257 313.7 L266 311.4 L275 308.8 L284 305.8 L293 302.4 L302 298.7 L311 294.7 L320 290.5 L329 286.2 L338 281.8 L347 277.4 L356 273.2 L365 269.1 L374 265.2 L383 261.5 L392 258.1 L401 254.9 L410 251.9 L419 249.0 L428 246.2 L437 243.3 L446 240.3 L455 237.2 L464 233.8 L473 230.1 L482 226.0 L491 221.6 L500 216.8 L509 211.6 L518 206.1 L527 200.3 L536 194.4 L545 188.3 L554 182.1 L563 176.0 L572 170.0 L581 164.2 L590 158.6 L599 153.2 L608 148.0 L617 143.1 L626 138.3 M230 330.3 L239 328.9 L248 327.2 L257 325.1 L266 322.8 L275 320.0 L284 316.9 L293 313.4 L302 309.5 L311 305.5 L320 301.2 L329 296.9 L338 292.5 L347 288.1 L356 283.9 L365 279.9 L374 276.1 L383 272.5 L392 269.2 L401 266.0 L410 263.0 L419 260.2 L428 257.4 L437 254.5 L446 251.5 L455 248.3 L464 244.9 L473 241.1 L482 236.9 L491 232.4 L500 227.5 L509 222.2 L518 216.7 L527 210.9 L536 204.9 L545 198.8 L554 192.7 L563 186.6 L572 180.7 L581 175.0 L590 169.5 L599 164.2 L608 159.2 L617 154.3 L626 149.6 M230 342.0 L239 340.5 L248 338.7 L257 336.6 L266 334.0 L275 331.2 L284 327.9 L293 324.3 L302 320.4 L311 316.2 L320 311.9 L329 307.6 L338 303.2 L347 298.9 L356 294.7 L365 290.7 L374 287.0 L383 283.5 L392 280.2 L401 277.1 L410 274.2 L419 271.4 L428 268.6 L437 265.7 L446 262.7 L455 259.4 L464 255.9 L473 252.0 L482 247.8 L491 243.2 L500 238.2 L509 232.9 L518 227.2 L527 221.4 L536 215.4 L545 209.3 L554 203.3 L563 197.3 L572 191.5 L581 185.8 L590 180.4 L599 175.3 L608 170.3 L617 165.6 L626 161.0 M230 353.8 L239 352.1 L248 350.2 L257 347.9 L266 345.3 L275 342.3 L284 338.9 L293 335.2 L302 331.2 L311 327.0 L320 322.7 L329 318.3 L338 313.9 L347 309.6 L356 305.5 L365 301.6 L374 297.9 L383 294.5 L392 291.3 L401 288.3 L410 285.4 L419 282.6 L428 279.8 L437 276.9 L446 273.8 L455 270.5 L464 266.9 L473 262.9 L482 258.6 L491 253.9 L500 248.8 L509 243.5 L518 237.8 L527 231.9 L536 225.9 L545 219.9 L554 213.9 L563 208.0 L572 202.2 L581 196.7 L590 191.4 L599 186.4 L608 181.5 L617 176.9 L626 172.4 M230 365.5 L239 363.7 L248 361.7 L257 359.3 L266 356.5 L275 353.4 L284 349.9 L293 346.1 L302 342.0 L311 337.8 L320 333.4 L329 329.0 L338 324.6 L347 320.4 L356 316.3 L365 312.5 L374 308.9 L383 305.5 L392 302.4 L401 299.4 L410 296.6 L419 293.8 L428 291.0 L437 288.1 L446 284.9 L455 281.6 L464 277.9 L473 273.8 L482 269.4 L491 264.6 L500 259.5 L509 254.0 L518 248.3 L527 242.4 L536 236.5 L545 230.4 L554 224.5 L563 218.7 L572 213.0 L581 207.6 L590 202.4 L599 197.5 L608 192.7 L617 188.2 L626 183.8 M230 377.2 L239 375.3 L248 373.2 L257 370.6 L266 367.7 L275 364.5 L284 360.9 L293 357.0 L302 352.8 L311 348.5 L320 344.1 L329 339.7 L338 335.4 L347 331.2 L356 327.2 L365 323.4 L374 319.9 L383 316.6 L392 313.5 L401 310.6 L410 307.8 L419 305.0 L428 302.2 L437 299.2 L446 296.1 L455 292.6 L464 288.8 L473 284.7 L482 280.2 L491 275.3 L500 270.1 L509 264.6 L518 258.9 L527 253.0 L536 247.0 L545 241.0 L554 235.1 L563 229.4 L572 223.8 L581 218.5 L590 213.5 L599 208.6 L608 204.0 L617 199.5 L626 195.1 M230 388.8 L239 386.9 L248 384.6 L257 381.9 L266 378.9 L275 375.5 L284 371.8 L293 367.8 L302 363.6 L311 359.3 L320 354.8 L329 350.4 L338 346.1 L347 342.0 L356 338.1 L365 334.4 L374 330.9 L383 327.7 L392 324.7 L401 321.8 L410 319.0 L419 316.2 L428 313.4 L437 310.4 L446 307.2 L455 303.6 L464 299.8 L473 295.5 L482 290.9 L491 286.0 L500 280.7 L509 275.1 L518 269.4 L527 263.5 L536 257.5 L545 251.6 L554 245.8 L563 240.1 L572 234.7 L581 229.5 L590 224.5 L599 219.8 L608 215.3 L617 210.9 L626 206.5 M230 400.5 L239 398.4 L248 396.0 L257 393.2 L266 390.1 L275 386.6 L284 382.7 L293 378.7 L302 374.4 L311 370.0 L320 365.6 L329 361.2 L338 356.9 L347 352.8 L356 349.0 L365 345.4 L374 342.0 L383 338.8 L392 335.9 L401 333.0 L410 330.3 L419 327.5 L428 324.6 L437 321.5 L446 318.2 L455 314.6 L464 310.7 L473 306.4 L482 301.7 L491 296.6 L500 291.3 L509 285.7 L518 279.9 L527 274.0 L536 268.1 L545 262.2 L554 256.5 L563 250.9 L572 245.6 L581 240.5 L590 235.6 L599 231.0 L608 226.5 L617 222.2 L626 217.9 M230 412.1 L239 409.9 L248 407.4 L257 404.5 L266 401.2 L275 397.6 L284 393.7 L293 389.5 L302 385.2 L311 380.7 L320 376.3 L329 372.0 L338 367.7 L347 363.7 L356 359.9 L365 356.4 L374 353.0 L383 350.0 L392 347.0 L401 344.2 L410 341.5 L419 338.7 L428 335.8 L437 332.7 L446 329.3 L455 325.6 L464 321.6 L473 317.1 L482 312.4 L491 307.3 L500 301.8 L509 296.2 L518 290.4 L527 284.5 L536 278.6 L545 272.8 L554 267.1 L563 261.7 L572 256.4 L581 251.5 L590 246.7 L599 242.2 L608 237.8 L617 233.6 L626 229.4 M230 423.7 L239 421.4 L248 418.7 L257 415.7 L266 412.3 L275 408.6 L284 404.5 L293 400.3 L302 395.9 L311 391.5 L320 387.1 L329 382.7 L338 378.6 L347 374.6 L356 370.9 L365 367.4 L374 364.1 L383 361.1 L392 358.2 L401 355.5 L410 352.7 L419 349.9 L428 346.9 L437 343.8 L446 340.3 L455 336.5 L464 332.4 L473 327.9 L482 323.0 L491 317.9 L500 312.4 L509 306.7 L518 300.9 L527 295.0 L536 289.2 L545 283.4 L554 277.9 L563 272.5 L572 267.4 L581 262.5 L590 257.9 L599 253.4 L608 249.1 L617 244.9 L626 240.8 M230 435.3 L239 432.9 L248 430.1 L257 426.9 L266 423.4 L275 419.5 L284 415.4 L293 411.1 L302 406.7 L311 402.3 L320 397.8 L329 393.5 L338 389.4 L347 385.5 L356 381.9 L365 378.4 L374 375.3 L383 372.3 L392 369.5 L401 366.7 L410 363.9 L419 361.1 L428 358.1 L437 354.9 L446 351.3 L455 347.5 L464 343.2 L473 338.6 L482 333.7 L491 328.4 L500 322.9 L509 317.2 L518 311.4 L527 305.6 L536 299.8 L545 294.1 L554 288.6 L563 283.3 L572 278.3 L581 273.6 L590 269.0 L599 264.7 L608 260.5 L617 256.3 L626 252.2 M230 446.9 L239 444.3 L248 441.4 L257 438.1 L266 434.4 L275 430.5 L284 426.3 L293 421.9 L302 417.5 L311 413.0 L320 408.6 L329 404.4 L338 400.3 L347 396.5 L356 392.9 L365 389.5 L374 386.4 L383 383.5 L392 380.7 L401 377.9 L410 375.2 L419 372.3 L428 369.2 L437 365.9 L446 362.3 L455 358.4 L464 354.0 L473 349.3 L482 344.3 L491 339.0 L500 333.4 L509 327.7 L518 321.9 L527 316.1 L536 310.4 L545 304.8 L554 299.4 L563 294.2 L572 289.3 L581 284.6 L590 280.2 L599 275.9 L608 271.8 L617 267.7 L626 263.6 M230 458.4 L239 455.7 L248 452.6 L257 449.2 L266 445.5 L275 441.4 L284 437.2 L293 432.7 L302 428.3 L311 423.8 L320 419.4 L329 415.2 L338 411.2 L347 407.4 L356 403.9 L365 400.6 L374 397.6 L383 394.7 L392 391.9 L401 389.2 L410 386.4 L419 383.5 L428 380.4 L437 377.0 L446 373.3 L455 369.2 L464 364.8 L473 360.0 L482 354.9 L491 349.5 L500 344.0 L509 338.2 L518 332.4 L527 326.7 L536 321.0 L545 315.5 L554 310.2 L563 305.1 L572 300.3 L581 295.7 L590 291.4 L599 287.2 L608 283.1 L617 279.1 L626 275.0 M230 469.9 L239 467.1 L248 463.9 L257 460.3 L266 456.5 L275 452.3 L284 448.0 L293 443.6 L302 439.1 L311 434.6 L320 430.3 L329 426.1 L338 422.1 L347 418.4 L356 415.0 L365 411.8 L374 408.8 L383 405.9 L392 403.2 L401 400.4 L410 397.6 L419 394.7 L428 391.5 L437 388.0 L446 384.2 L455 380.1 L464 375.5 L473 370.7 L482 365.5 L491 360.1 L500 354.5 L509 348.7 L518 342.9 L527 337.2 L536 331.6 L545 326.2 L554 321.0 L563 316.0 L572 311.3 L581 306.9 L590 302.6 L599 298.5 L608 294.5 L617 290.5 L626 286.4 M230 481.4 L239 478.4 L248 475.1 L257 471.4 L266 467.5 L275 463.2 L284 458.9 L293 454.4 L302 449.9 L311 445.4 L320 441.1 L329 437.0 L338 433.1 L347 429.4 L356 426.1 L365 422.9 L374 420.0 L383 417.2 L392 414.4 L401 411.7 L410 408.8 L419 405.8 L428 402.6 L437 399.0 L446 395.1 L455 390.9 L464 386.3 L473 381.3 L482 376.1 L491 370.6 L500 365.0 L509 359.2 L518 353.5 L527 347.8 L536 342.3 L545 336.9 L554 331.8 L563 327.0 L572 322.4 L581 318.0 L590 313.9 L599 309.8 L608 305.8 L617 301.8 L626 297.7 M230 492.9 L239 489.7 L248 486.3 L257 482.5 L266 478.4 L275 474.1 L284 469.7 L293 465.2 L302 460.7 L311 456.2 L320 452.0 L329 447.9 L338 444.1 L347 440.5 L356 437.2 L365 434.1 L374 431.2 L383 428.4 L392 425.7 L401 422.9 L410 420.0 L419 416.9 L428 413.6 L437 410.0 L446 406.0 L455 401.7 L464 397.0 L473 391.9 L482 386.6 L491 381.1 L500 375.5 L509 369.7 L518 364.0 L527 358.4 L536 352.9 L545 347.7 L554 342.7 L563 338.0 L572 333.5 L581 329.2 L590 325.1 L599 321.1 L608 317.2 L617 313.2 L626 309.1 M230 504.3 L239 501.0 L248 497.5 L257 493.6 L266 489.4 L275 485.0 L284 480.5 L293 476.0 L302 471.5 L311 467.1 L320 462.8 L329 458.8 L338 455.1 L347 451.6 L356 448.3 L365 445.3 L374 442.4 L383 439.7 L392 436.9 L401 434.1 L410 431.2 L419 428.1 L428 424.7 L437 420.9 L446 416.8 L455 412.4 L464 407.6 L473 402.5 L482 397.2 L491 391.6 L500 385.9 L509 380.2 L518 374.6 L527 369.0 L536 363.6 L545 358.5 L554 353.6 L563 349.0 L572 344.6 L581 340.4 L590 336.4 L599 332.5 L608 328.6 L617 324.6 L626 320.5 M230 515.7 L239 512.3 L248 508.6 L257 504.6 L266 500.3 L275 495.9 L284 491.4 L293 486.8 L302 482.3 L311 477.9 L320 473.8 L329 469.8 L338 466.1 L347 462.7 L356 459.5 L365 456.5 L374 453.7 L383 450.9 L392 448.2 L401 445.4 L410 442.4 L419 439.2 L428 435.7 L437 431.8 L446 427.7 L455 423.1 L464 418.3 L473 413.1 L482 407.7 L491 402.1 L500 396.4 L509 390.8 L518 385.1 L527 379.7 L536 374.4 L545 369.3 L554 364.5 L563 360.0 L572 355.7 L581 351.6 L590 347.7 L599 343.8 L608 339.9 L617 336.0 L626 331.8 M230 527.1 L239 523.6 L248 519.7 L257 515.6 L266 511.3 L275 506.8 L284 502.2 L293 497.6 L302 493.2 L311 488.8 L320 484.7 L329 480.8 L338 477.2 L347 473.8 L356 470.7 L365 467.7 L374 464.9 L383 462.2 L392 459.4 L401 456.6 L410 453.5 L419 450.3 L428 446.7 L437 442.7 L446 438.5 L455 433.8 L464 428.9 L473 423.7 L482 418.2 L491 412.6 L500 406.9 L509 401.3 L518 395.7 L527 390.3 L536 385.1 L545 380.2 L554 375.5 L563 371.1 L572 366.9 L581 362.9 L590 359.0 L599 355.1 L608 351.3 L617 347.3 L626 343.2 M230 538.4 L239 534.8 L248 530.8 L257 526.6 L266 522.2 L275 517.7 L284 513.1 L293 508.5 L302 504.0 L311 499.7 L320 495.6 L329 491.8 L338 488.3 L347 485.0 L356 481.9 L365 479.0 L374 476.2 L383 473.5 L392 470.7 L401 467.8 L410 464.7 L419 461.3 L428 457.6 L437 453.6 L446 449.2 L455 444.5 L464 439.5 L473 434.2 L482 428.7 L491 423.1 L500 417.4 L509 411.8 L518 406.3 L527 401.0 L536 395.9 L545 391.0 L554 386.5 L563 382.1 L572 378.0 L581 374.1 L590 370.3 L599 366.5 L608 362.6 L617 358.6 L626 354.5 M230 549.7 L239 546.0 L248 541.9 L257 537.6 L266 533.1 L275 528.5 L284 523.9 L293 519.3 L302 514.9 L311 510.6 L320 506.6 L329 502.9 L338 499.4 L347 496.1 L356 493.1 L365 490.3 L374 487.5 L383 484.7 L392 481.9 L401 479.0 L410 475.8 L419 472.3 L428 468.6 L437 464.5 L446 460.0 L455 455.2 L464 450.1 L473 444.7 L482 439.2 L491 433.6 L500 428.0 L509 422.4 L518 416.9 L527 411.7 L536 406.7 L545 402.0 L554 397.5 L563 393.2 L572 389.2 L581 385.4 L590 381.6 L599 377.8 L608 374.0 L617 370.0 L626 365.8 M230 561.0 L239 557.1 L248 553.0 L257 548.6 L266 544.0 L275 539.4 L284 534.8 L293 530.2 L302 525.8 L311 521.6 L320 517.6 L329 514.0 L338 510.5 L347 507.3 L356 504.4 L365 501.5 L374 498.8 L383 496.0 L392 493.2 L401 490.1 L410 486.9 L419 483.4 L428 479.5 L437 475.3 L446 470.7 L455 465.8 L464 460.6 L473 455.2 L482 449.7 L491 444.1 L500 438.5 L509 433.0 L518 427.6 L527 422.4 L536 417.5 L545 412.9 L554 408.5 L563 404.4 L572 400.4 L581 396.6 L590 392.9 L599 389.1 L608 385.3 L617 381.3 L626 377.0 M230 572.3 L239 568.3 L248 564.0 L257 559.5 L266 554.9 L275 550.3 L284 545.6 L293 541.1 L302 536.7 L311 532.6 L320 528.7 L329 525.1 L338 521.7 L347 518.6 L356 515.6 L365 512.8 L374 510.1 L383 507.3 L392 504.4 L401 501.3 L410 498.0 L419 494.3 L428 490.4 L437 486.0 L446 481.4 L455 476.4 L464 471.2 L473 465.8 L482 460.2 L491 454.6 L500 449.0 L509 443.5 L518 438.2 L527 433.2 L536 428.4 L545 423.8 L554 419.6 L563 415.5 L572 411.7 L581 407.9 L590 404.2 L599 400.5 L608 396.6 L617 392.6 L626 388.3 M230 583.5 L239 579.4 L248 575.1 L257 570.5 L266 565.8 L275 561.2 L284 556.5 L293 552.0 L302 547.7 L311 543.6 L320 539.8 L329 536.2 L338 532.9 L347 529.8 L356 526.9 L365 524.1 L374 521.4 L383 518.5 L392 515.6 L401 512.4 L410 509.0 L419 505.3 L428 501.2 L437 496.8 L446 492.1 L455 487.0 L464 481.7 L473 476.3 L482 470.7 L491 465.1 L500 459.5 L509 454.1 L518 448.9 L527 444.0 L536 439.3 L545 434.8 L554 430.6 L563 426.7 L572 422.9 L581 419.2 L590 415.5 L599 411.8 L608 407.9 L617 403.8 L626 399.5 M230 594.7 L239 590.5 L248 586.1 L257 581.5 L266 576.8 L275 572.0 L284 567.4 L293 562.9 L302 558.6 L311 554.6 L320 550.8 L329 547.4 L338 544.1 L347 541.1 L356 538.2 L365 535.4 L374 532.6 L383 529.8 L392 526.8 L401 523.6 L410 520.1 L419 516.2 L428 512.1 L437 507.5 L446 502.7 L455 497.6 L464 492.2 L473 486.7 L482 481.2 L491 475.6 L500 470.1 L509 464.8 L518 459.6 L527 454.8 L536 450.2 L545 445.8 L554 441.8 L563 437.9 L572 434.1 L581 430.5 L590 426.8 L599 423.1 L608 419.2 L617 415.1 L626 410.7 M230 606.0 L239 601.7 L248 597.1 L257 592.4 L266 587.7 L275 583.0 L284 578.4 L293 573.9 L302 569.7 L311 565.7 L320 562.0 L329 558.6 L338 555.4 L347 552.4 L356 549.5 L365 546.8 L374 544.0 L383 541.1 L392 538.0 L401 534.7 L410 531.1 L419 527.2 L428 522.9 L437 518.3 L446 513.4 L455 508.2 L464 502.8 L473 497.3 L482 491.7 L491 486.2 L500 480.7 L509 475.5 L518 470.4 L527 465.7 L536 461.1 L545 456.9 L554 452.9 L563 449.1 L572 445.4 L581 441.8 L590 438.2 L599 434.5 L608 430.5 L617 426.4 L626 421.9 M230 618.7 L239 614.4 L248 609.8 L257 605.1 L266 600.4 L275 595.7 L284 591.1 L293 586.7 L302 582.6 L311 578.7 L320 575.1 L329 571.7 L338 568.6 L347 565.7 L356 562.9 L365 560.1 L374 557.3 L383 554.4 L392 551.3 L401 547.9 L410 544.2 L419 540.2 L428 535.8 L437 531.1 L446 526.1 L455 520.9 L464 515.5 L473 509.9 L482 504.4 L491 498.9 L500 493.5 L509 488.3 L518 483.3 L527 478.6 L536 474.2 L545 470.1 L554 466.2 L563 462.4 L572 458.8 L581 455.2 L590 451.5 L599 447.8 L608 443.8 L617 439.5 L626 435.0 M230 631.5 L239 627.0 L248 622.4 L257 617.7 L266 613.0 L275 608.4 L284 603.9 L293 599.6 L302 595.5 L311 591.7 L320 588.2 L329 584.9 L338 581.9 L347 579.0 L356 576.2 L365 573.5 L374 570.6 L383 567.7 L392 564.5 L401 561.0 L410 557.3 L419 553.2 L428 548.7 L437 543.9 L446 538.9 L455 533.6 L464 528.1 L473 522.6 L482 517.0 L491 511.6 L500 506.2 L509 501.1 L518 496.3 L527 491.7 L536 487.4 L545 483.3 L554 479.4 L563 475.7 L572 472.1 L581 468.5 L590 464.9 L599 461.0 L608 457.0 L617 452.7 L626 448.0 M230 644.2 L239 639.7 L248 635.1 L257 630.4 L266 625.7 L275 621.1 L284 616.6 L293 612.4 L302 608.4 L311 604.7 L320 601.3 L329 598.1 L338 595.2 L347 592.3 L356 589.6 L365 586.8 L374 584.0 L383 580.9 L392 577.7 L401 574.2 L410 570.3 L419 566.1 L428 561.6 L437 556.7 L446 551.6 L455 546.2 L464 540.8 L473 535.2 L482 529.7 L491 524.3 L500 519.0 L509 514.0 L518 509.2 L527 504.7 L536 500.5 L545 496.5 L554 492.7 L563 489.1 L572 485.5 L581 481.9 L590 478.2 L599 474.3 L608 470.2 L617 465.8 L626 461.1 M230 656.9 L239 652.4 L248 647.7 L257 643.0 L266 638.4 L275 633.8 L284 629.5 L293 625.3 L302 621.4 L311 617.8 L320 614.5 L329 611.4 L338 608.5 L347 605.7 L356 602.9 L365 600.2 L374 597.3 L383 594.2 L392 590.9 L401 587.3 L410 583.3 L419 579.0 L428 574.4 L437 569.5 L446 564.3 L455 558.9 L464 553.4 L473 547.9 L482 542.4 L491 537.0 L500 531.8 L509 526.9 L518 522.2 L527 517.8 L536 513.7 L545 509.7 L554 506.0 L563 502.4 L572 498.8 L581 495.2 L590 491.5 L599 487.6 L608 483.4 L617 478.9 L626 474.1 M230 669.6 L239 665.1 L248 660.4 L257 655.7 L266 651.1 L275 646.6 L284 642.3 L293 638.2 L302 634.4 L311 630.9 L320 627.7 L329 624.6 L338 621.8 L347 619.0 L356 616.3 L365 613.5 L374 610.6 L383 607.5 L392 604.1 L401 600.4 L410 596.3 L419 591.9 L428 587.2 L437 582.2 L446 577.0 L455 571.6 L464 566.1 L473 560.5 L482 555.1 L491 549.8 L500 544.7 L509 539.8 L518 535.2 L527 530.9 L536 526.8 L545 523.0 L554 519.3 L563 515.7 L572 512.2 L581 508.6 L590 504.8 L599 500.8 L608 496.5 L617 492.0 L626 487.1 M230 682.3 L239 677.7 L248 673.0 L257 668.4 L266 663.8 L275 659.4 L284 655.1 L293 651.2 L302 647.5 L311 644.0 L320 640.9 L329 637.9 L338 635.1 L347 632.3 L356 629.6 L365 626.8 L374 623.9 L383 620.7 L392 617.2 L401 613.4 L410 609.3 L419 604.8 L428 600.0 L437 594.9 L446 589.7 L455 584.2 L464 578.7 L473 573.2 L482 567.8 L491 562.6 L500 557.5 L509 552.8 L518 548.3 L527 544.0 L536 540.1 L545 536.3 L554 532.7 L563 529.1 L572 525.5 L581 521.9 L590 518.1 L599 514.0 L608 509.7 L617 505.0 L626 500.0 M230 695.0 L239 690.4 L248 685.7 L257 681.1 L266 676.5 L275 672.2 L284 668.0 L293 664.1 L302 660.5 L311 657.2 L320 654.1 L329 651.2 L338 648.4 L347 645.7 L356 643.0 L365 640.1 L374 637.1 L383 633.9 L392 630.3 L401 626.4 L410 622.2 L419 617.7 L428 612.8 L437 607.7 L446 602.3 L455 596.9 L464 591.4 L473 585.9 L482 580.6 L491 575.4 L500 570.4 L509 565.8 L518 561.3 L527 557.2 L536 553.3 L545 549.6 L554 546.0 L563 542.4 L572 538.9 L581 535.2 L590 531.3 L599 527.2 L608 522.8 L617 518.0 L626 512.9 M230 707.6 L239 703.0 L248 698.4 L257 693.7 L266 689.3 L275 685.0 L284 680.9 L293 677.1 L302 673.6 L311 670.4 L320 667.3 L329 664.5 L338 661.7 L347 659.0 L356 656.3 L365 653.4 L374 650.4 L383 647.0 L392 643.4 L401 639.4 L410 635.1 L419 630.5 L428 625.5 L437 620.4 L446 615.0 L455 609.5 L464 604.0 L473 598.6 L482 593.3 L491 588.2 L500 583.3 L509 578.8 L518 574.4 L527 570.4 L536 566.5 L545 562.9 L554 559.3 L563 555.8 L572 552.2 L581 548.5 L590 544.6 L599 540.4 L608 535.9 L617 531.0 L626 525.8 M230 720.3 L239 715.7 L248 711.0 L257 706.5 L266 702.0 L275 697.8 L284 693.8 L293 690.1 L302 686.7 L311 683.5 L320 680.6 L329 677.8 L338 675.1 L347 672.4 L356 669.6 L365 666.7 L374 663.6 L383 660.2 L392 656.5 L401 652.4 L410 648.0 L419 643.3 L428 638.3 L437 633.0 L446 627.6 L455 622.2 L464 616.7 L473 611.3 L482 606.1 L491 601.1 L500 596.3 L509 591.8 L518 587.6 L527 583.6 L536 579.8 L545 576.2 L554 572.7 L563 569.1 L572 565.5 L581 561.8 L590 557.8 L599 553.5 L608 548.9 L617 544.0 L626 538.7" fill="none" stroke="url(#lg2)" stroke-width="1.3"/>
 <rect x="618.0" y="0" width="168.0" height="543" fill="#eff0f2"/>
<path d="M619.20 -5V548 M623.56 -5V548 M627.92 -5V548 M632.28 -5V548 M636.64 -5V548 M641.00 -5V548 M645.36 -5V548 M649.72 -5V548 M654.08 -5V548 M658.44 -5V548 M662.80 -5V548 M667.16 -5V548 M671.52 -5V548 M675.88 -5V548 M680.24 -5V548 M684.60 -5V548 M688.96 -5V548 M693.32 -5V548 M697.68 -5V548 M702.04 -5V548 M706.40 -5V548 M710.76 -5V548 M715.12 -5V548 M719.48 -5V548 M723.84 -5V548 M728.20 -5V548 M732.56 -5V548 M736.92 -5V548 M741.28 -5V548 M745.64 -5V548 M750.00 -5V548 M754.36 -5V548 M758.72 -5V548 M763.08 -5V548 M767.44 -5V548 M771.80 -5V548 M776.16 -5V548 M780.52 -5V548 M784.88 -5V548" stroke="#b9bcc4" stroke-width="2.4" stroke-opacity=".10" fill="none"/>
<path d="M619.20 -5V548 M623.56 -5V548 M627.92 -5V548 M632.28 -5V548 M636.64 -5V548 M641.00 -5V548 M645.36 -5V548 M649.72 -5V548 M654.08 -5V548 M658.44 -5V548 M662.80 -5V548 M667.16 -5V548 M671.52 -5V548 M675.88 -5V548 M680.24 -5V548 M684.60 -5V548 M688.96 -5V548 M693.32 -5V548 M697.68 -5V548 M702.04 -5V548 M706.40 -5V548 M710.76 -5V548 M715.12 -5V548 M719.48 -5V548 M723.84 -5V548 M728.20 -5V548 M732.56 -5V548 M736.92 -5V548 M741.28 -5V548 M745.64 -5V548 M750.00 -5V548 M754.36 -5V548 M758.72 -5V548 M763.08 -5V548 M767.44 -5V548 M771.80 -5V548 M776.16 -5V548 M780.52 -5V548 M784.88 -5V548" stroke="#b9bcc4" stroke-width="0.9" stroke-opacity=".42" fill="none"/>
<g clip-path="url(#sc)"><path d="M618.0 166.0H786 M618.0 163.7H786 M618.0 160.7H786 M618.0 157.0H786 M618.0 152.1H786 M618.0 146.0H786 M618.0 138.0H786 M618.0 127.9H786 M618.0 166.0H786 M618.0 168.3H786 M618.0 171.3H786 M618.0 175.0H786 M618.0 179.9H786 M618.0 186.0H786 M618.0 194.0H786 M618.0 204.1H786 M618.0 376.0H786 M618.0 373.7H786 M618.0 370.7H786 M618.0 367.0H786 M618.0 362.1H786 M618.0 356.0H786 M618.0 348.0H786 M618.0 337.9H786 M618.0 376.0H786 M618.0 378.3H786 M618.0 381.3H786 M618.0 385.0H786 M618.0 389.9H786 M618.0 396.0H786 M618.0 404.0H786 M618.0 414.1H786" stroke="#d2d4d8" stroke-width="0.7" stroke-opacity="0.55" fill="none"/>
<path d="M618.0 166.0L630.3 -69.0 M618.0 166.0L642.7 -69.0 M618.0 166.0L655.2 -69.0 M618.0 166.0L668.0 -69.0 M618.0 166.0L681.0 -69.0 M618.0 166.0L694.4 -69.0 M618.0 166.0L708.2 -69.0 M618.0 166.0L722.6 -69.0 M618.0 166.0L737.7 -69.0 M618.0 166.0L753.7 -69.0 M618.0 166.0L770.6 -69.0 M618.0 166.0L786.0 -65.2 M618.0 166.0L786.0 -41.5 M618.0 166.0L786.0 -20.6 M618.0 166.0L786.0 -2.0 M618.0 166.0L786.0 14.7 M618.0 166.0L786.0 30.0 M618.0 166.0L786.0 43.9 M618.0 166.0L786.0 56.9 M618.0 166.0L786.0 69.0 M618.0 166.0L786.0 80.4 M618.0 166.0L786.0 91.2 M618.0 166.0L786.0 101.5 M618.0 166.0L786.0 111.4 M618.0 166.0L786.0 121.0 M618.0 166.0L786.0 130.3 M618.0 166.0L786.0 139.4 M618.0 166.0L786.0 148.3 M618.0 166.0L786.0 157.2 M618.0 166.0L786.0 174.8 M618.0 166.0L786.0 183.7 M618.0 166.0L786.0 192.6 M618.0 166.0L786.0 201.7 M618.0 166.0L786.0 211.0 M618.0 166.0L786.0 220.6 M618.0 166.0L786.0 230.5 M618.0 166.0L786.0 240.8 M618.0 166.0L786.0 251.6 M618.0 166.0L786.0 263.0 M618.0 166.0L786.0 275.1 M618.0 166.0L786.0 288.1 M618.0 166.0L786.0 302.0 M618.0 166.0L786.0 317.3 M618.0 166.0L786.0 334.0 M618.0 166.0L786.0 352.6 M618.0 166.0L786.0 373.5 M618.0 166.0L786.0 397.2 M618.0 166.0L770.6 401.0 M618.0 166.0L753.7 401.0 M618.0 166.0L737.7 401.0 M618.0 166.0L722.6 401.0 M618.0 166.0L708.2 401.0 M618.0 166.0L694.4 401.0 M618.0 166.0L681.0 401.0 M618.0 166.0L668.0 401.0 M618.0 166.0L655.2 401.0 M618.0 166.0L642.7 401.0 M618.0 166.0L630.3 401.0 M618.0 376.0L630.3 141.0 M618.0 376.0L642.7 141.0 M618.0 376.0L655.2 141.0 M618.0 376.0L668.0 141.0 M618.0 376.0L681.0 141.0 M618.0 376.0L694.4 141.0 M618.0 376.0L708.2 141.0 M618.0 376.0L722.6 141.0 M618.0 376.0L737.7 141.0 M618.0 376.0L753.7 141.0 M618.0 376.0L770.6 141.0 M618.0 376.0L786.0 144.8 M618.0 376.0L786.0 168.5 M618.0 376.0L786.0 189.4 M618.0 376.0L786.0 208.0 M618.0 376.0L786.0 224.7 M618.0 376.0L786.0 240.0 M618.0 376.0L786.0 253.9 M618.0 376.0L786.0 266.9 M618.0 376.0L786.0 279.0 M618.0 376.0L786.0 290.4 M618.0 376.0L786.0 301.2 M618.0 376.0L786.0 311.5 M618.0 376.0L786.0 321.4 M618.0 376.0L786.0 331.0 M618.0 376.0L786.0 340.3 M618.0 376.0L786.0 349.4 M618.0 376.0L786.0 358.3 M618.0 376.0L786.0 367.2 M618.0 376.0L786.0 384.8 M618.0 376.0L786.0 393.7 M618.0 376.0L786.0 402.6 M618.0 376.0L786.0 411.7 M618.0 376.0L786.0 421.0 M618.0 376.0L786.0 430.6 M618.0 376.0L786.0 440.5 M618.0 376.0L786.0 450.8 M618.0 376.0L786.0 461.6 M618.0 376.0L786.0 473.0 M618.0 376.0L786.0 485.1 M618.0 376.0L786.0 498.1 M618.0 376.0L786.0 512.0 M618.0 376.0L786.0 527.3 M618.0 376.0L786.0 544.0 M618.0 376.0L786.0 562.6 M618.0 376.0L786.0 583.5 M618.0 376.0L786.0 607.2 M618.0 376.0L770.6 611.0 M618.0 376.0L753.7 611.0 M618.0 376.0L737.7 611.0 M618.0 376.0L722.6 611.0 M618.0 376.0L708.2 611.0 M618.0 376.0L694.4 611.0 M618.0 376.0L681.0 611.0 M618.0 376.0L668.0 611.0 M618.0 376.0L655.2 611.0 M618.0 376.0L642.7 611.0 M618.0 376.0L630.3 611.0" stroke="url(#fg)" stroke-width="0.8" fill="none"/></g>
 </svg>
</section>
<div class="lbox"></div>
<div class="lg" role="img" aria-label="Cyber Cloud Acronis" style="left:154.5px;top:78.1px;transform:scale(0.632);transform-origin:0 0;"><svg style="position:absolute;left:18px;top:8px" width="40.0" height="36.0" viewBox="0 0 40 36"><text x="17.6" y="25.7" font-family="Liberation Sans, sans-serif" font-weight="700" font-size="30" fill="#d42e63" stroke="#d42e63" stroke-width=".8" stroke-linejoin="round" textLength="18.6" lengthAdjust="spacingAndGlyphs">D</text><circle cx="14.3" cy="10.6" r="2.6" fill="#d42e63"/><circle cx="14.7" cy="19.7" r="3.1" fill="#d42e63"/><circle cx="10.5" cy="23" r="1.5" fill="#c12c62"/><circle cx="8.3" cy="25.6" r="1.2" fill="#a92a60"/><circle cx="6.4" cy="27.6" r="1" fill="#8f2a5f"/><circle cx="10.8" cy="15" r="1.1" fill="#a92a60"/><circle cx="17.6" cy="15.1" r="1.2" fill="#c12c62"/><text x="2" y="33.6" font-family="Liberation Sans, sans-serif" font-size="3.8" fill="#3f5781" textLength="33" lengthAdjust="spacingAndGlyphs">BIGDOMAIN</text></svg><span class="t cc" style="left:59.6px;top:14.06px;letter-spacing:0.050px">Cyber Cloud</span><span class="t ac" style="left:120.9px;top:30.60px;letter-spacing:-0.315px">Acronis</span></div>
<h1 class="t ttl" style="left:143.6px;top:136.80px;letter-spacing:2.410px"><span style="letter-spacing:2.75px">NOTARIZATION</span> <span style="letter-spacing:1.95px">CERTIFICATE</span></h1>
<p class="t v" style="left:144.5px;top:186.21px;letter-spacing:-0.008px">This is to certify that the dataset or file referred to hereunder was notarized at the date and time printed below,</p>
<p class="t v" style="left:144.5px;top:205.91px;letter-spacing:-0.034px">through the creation of a self-authenticating digital record using Ethereum blockchain technology</p>
<dl>
<dt class="t l" style="left:143.5px;top:237.03px;letter-spacing:-0.149px">File name</dt><dd class="t v" style="left:281.3px;top:235.91px;letter-spacing:-0.141px">sample Basic-Non-Disclosure-Agreement.pdf</dd><dt class="t l" style="left:143.5px;top:258.04px;letter-spacing:0.083px">Notarization timestamp</dt><dd class="t v" style="left:281.3px;top:256.91px;letter-spacing:-0.451px">31 Jan, 2024 02:14 PM UTC −0800</dd><dt class="t l" style="left:143.5px;top:279.13px;letter-spacing:-0.334px">File size</dt><dd class="t v" style="left:281.3px;top:278.01px;letter-spacing:-0.337px">83.2 KB (85 239 bytes)</dd><dt class="t l" style="left:143.5px;top:300.13px;letter-spacing:-0.249px">File hash (SHA-256)</dt><dd class="t v" style="left:281.3px;top:301.51px;letter-spacing:-0.141px">d6ff27bd52fa0c49a47bf2f9dde30d0a6335cf972de6ecd44810aa3a7f52a6ed</dd><dt class="t l" style="left:143.5px;top:329.04px;letter-spacing:-0.239px">Requestor</dt><dd class="t v" style="left:281.3px;top:327.91px;letter-spacing:-0.198px">Henry tye, Big Domain Sdn Bhd</dd><dt class="t l" style="left:143.5px;top:349.94px;letter-spacing:-0.152px">Requestor GUID</dt><dd class="t v" style="left:281.3px;top:348.51px;letter-spacing:-0.255px">8b23459b-c1ac-4873-8978-61491c2f3503</dd><dt class="t l" style="left:143.5px;top:371.74px;letter-spacing:-0.471px">Signer</dt><dd class="t v" style="left:281.3px;top:370.61px;letter-spacing:-0.100px">Notary</dd><dt class="t l" style="left:143.5px;top:392.84px;letter-spacing:-0.158px">Transaction ID</dt><dd class="t v" style="left:281.3px;top:391.41px;letter-spacing:-0.164px">0xa44b9332901151a8ae8e3e5677deb7731fa3070e4e6c82fd3b75ed088f5be1b4</dd><dt class="t l" style="left:143.5px;top:414.13px;letter-spacing:-0.063px">Certificate ID</dt><dd class="t v" style="left:281.3px;top:415.31px;letter-spacing:-0.222px">1cec144da721fe50de4d218cc6ae298717daa226cf87816e6a07df7528e8e2ae</dd><dt class="t l" style="left:143.5px;top:442.84px;letter-spacing:-0.630px">BLOCKCHAIN RECEIPT</dt><dd class="t v" style="left:281.3px;top:441.91px;letter-spacing:-0.128px">{"eTag":"d6ff27bd52fa0c49a47bf2f9dde30d0a6335cf972de6ecd44810aa3a</dd>
<dd class="t v" style="left:281.3px;top:458.81px;letter-spacing:-0.171px">7f52a6ed","key":"sample Basic-Non-Disclosure-</dd>
<dd class="t v" style="left:281.3px;top:475.51px;letter-spacing:-0.114px">Agreement.pdf","sequencer":"98e391ff1d33ce5a19","size":85239}</dd>
</dl>
<svg style="position:absolute;left:631px;top:303px" width="11" height="11" viewBox="0 0 11 11"><rect x=".7" y=".7" width="9.6" height="9.6" fill="#f7f7f9" stroke="#444c57" stroke-width="1.4"/><rect x="7" y="1" width="3" height="9" fill="#6b737d"/><path d="M3 3.3L5.8 5.5L3 7.7z" fill="#8a9099"/></svg>
<svg style="position:absolute;left:636.3px;top:416px" width="11" height="11" viewBox="0 0 11 11"><rect x=".7" y=".7" width="9.6" height="9.6" fill="#f7f7f9" stroke="#444c57" stroke-width="1.4"/><rect x="7" y="1" width="3" height="9" fill="#6b737d"/><path d="M3 3.3L5.8 5.5L3 7.7z" fill="#8a9099"/></svg>
<svg style="position:absolute;left:627px;top:445.7px" width="11" height="11" viewBox="0 0 11 11"><rect x=".7" y=".7" width="9.6" height="9.6" fill="#f7f7f9" stroke="#444c57" stroke-width="1.4"/><rect x="7" y="1" width="3" height="9" fill="#6b737d"/><path d="M3 3.3L5.8 5.5L3 7.7z" fill="#8a9099"/></svg>
<div class="eth"><svg width="71.5" height="69" viewBox="0 0 71.5 69">
   <polygon points="36.1,9.5 21,35 36.1,29.8" fill="#79aef0"/><polygon points="36.1,9.5 51.3,35 36.1,29.8" fill="#4d8fe6"/>
   <polygon points="21,35 36.1,29.8 36.1,43.2" fill="#5799ea"/><polygon points="51.3,35 36.1,29.8 36.1,43.2" fill="#2c70db"/>
   <polygon points="21.6,38.8 36.1,46.4 36.1,58.8" fill="#4a8ee6"/><polygon points="50.7,38.8 36.1,46.4 36.1,58.8" fill="#2f74dc"/>
</svg></div>
<div class="qrbox"><svg viewBox="0 0 49 49" width="61" height="61"><path d="M0 0h7v1h-7zM8 0h5v1h-5zM14 0h2v1h-2zM19 0h1v1h-1zM21 0h1v1h-1zM23 0h4v1h-4zM28 0h1v1h-1zM31 0h1v1h-1zM33 0h3v1h-3zM37 0h2v1h-2zM40 0h1v1h-1zM42 0h7v1h-7zM0 1h1v1h-1zM6 1h1v1h-1zM12 1h1v1h-1zM16 1h1v1h-1zM19 1h1v1h-1zM21 1h1v1h-1zM26 1h2v1h-2zM29 1h5v1h-5zM35 1h3v1h-3zM39 1h2v1h-2zM42 1h1v1h-1zM48 1h1v1h-1zM0 2h1v1h-1zM2 2h3v1h-3zM6 2h1v1h-1zM8 2h3v1h-3zM14 2h1v1h-1zM17 2h1v1h-1zM22 2h3v1h-3zM26 2h11v1h-11zM39 2h2v1h-2zM42 2h1v1h-1zM44 2h3v1h-3zM48 2h1v1h-1zM0 3h1v1h-1zM2 3h3v1h-3zM6 3h1v1h-1zM8 3h1v1h-1zM10 3h1v1h-1zM15 3h3v1h-3zM21 3h2v1h-2zM29 3h7v1h-7zM38 3h1v1h-1zM42 3h1v1h-1zM44 3h3v1h-3zM48 3h1v1h-1zM0 4h1v1h-1zM2 4h3v1h-3zM6 4h1v1h-1zM9 4h2v1h-2zM12 4h1v1h-1zM15 4h2v1h-2zM19 4h8v1h-8zM28 4h1v1h-1zM30 4h2v1h-2zM36 4h1v1h-1zM39 4h2v1h-2zM42 4h1v1h-1zM44 4h3v1h-3zM48 4h1v1h-1zM0 5h1v1h-1zM6 5h1v1h-1zM8 5h4v1h-4zM13 5h2v1h-2zM17 5h2v1h-2zM21 5h2v1h-2zM26 5h1v1h-1zM30 5h1v1h-1zM32 5h2v1h-2zM35 5h1v1h-1zM37 5h1v1h-1zM42 5h1v1h-1zM48 5h1v1h-1zM0 6h7v1h-7zM8 6h1v1h-1zM10 6h1v1h-1zM12 6h1v1h-1zM14 6h1v1h-1zM16 6h1v1h-1zM18 6h1v1h-1zM20 6h1v1h-1zM22 6h1v1h-1zM24 6h1v1h-1zM26 6h1v1h-1zM28 6h1v1h-1zM30 6h1v1h-1zM32 6h1v1h-1zM34 6h1v1h-1zM36 6h1v1h-1zM38 6h1v1h-1zM40 6h1v1h-1zM42 6h7v1h-7zM9 7h1v1h-1zM11 7h1v1h-1zM13 7h2v1h-2zM17 7h2v1h-2zM20 7h3v1h-3zM26 7h1v1h-1zM28 7h7v1h-7zM37 7h2v1h-2zM40 7h1v1h-1zM0 8h1v1h-1zM4 8h5v1h-5zM10 8h3v1h-3zM16 8h11v1h-11zM28 8h16v1h-16zM1 9h2v1h-2zM4 9h1v1h-1zM7 9h1v1h-1zM13 9h1v1h-1zM15 9h1v1h-1zM23 9h5v1h-5zM33 9h2v1h-2zM37 9h1v1h-1zM40 9h1v1h-1zM42 9h3v1h-3zM46 9h1v1h-1zM0 10h3v1h-3zM6 10h4v1h-4zM11 10h1v1h-1zM13 10h3v1h-3zM19 10h5v1h-5zM25 10h1v1h-1zM28 10h2v1h-2zM32 10h3v1h-3zM36 10h1v1h-1zM38 10h1v1h-1zM41 10h1v1h-1zM43 10h1v1h-1zM46 10h1v1h-1zM48 10h1v1h-1zM0 11h6v1h-6zM7 11h1v1h-1zM9 11h1v1h-1zM12 11h1v1h-1zM16 11h3v1h-3zM21 11h5v1h-5zM27 11h1v1h-1zM29 11h5v1h-5zM42 11h1v1h-1zM44 11h1v1h-1zM47 11h2v1h-2zM1 12h4v1h-4zM6 12h2v1h-2zM9 12h1v1h-1zM11 12h4v1h-4zM16 12h2v1h-2zM20 12h8v1h-8zM31 12h2v1h-2zM34 12h4v1h-4zM39 12h2v1h-2zM43 12h5v1h-5zM2 13h2v1h-2zM8 13h2v1h-2zM14 13h3v1h-3zM23 13h1v1h-1zM25 13h1v1h-1zM27 13h1v1h-1zM30 13h3v1h-3zM35 13h2v1h-2zM39 13h2v1h-2zM42 13h3v1h-3zM48 13h1v1h-1zM0 14h2v1h-2zM4 14h3v1h-3zM8 14h2v1h-2zM12 14h4v1h-4zM17 14h1v1h-1zM20 14h2v1h-2zM23 14h1v1h-1zM25 14h2v1h-2zM28 14h1v1h-1zM30 14h4v1h-4zM36 14h3v1h-3zM40 14h4v1h-4zM0 15h2v1h-2zM4 15h1v1h-1zM7 15h6v1h-6zM14 15h1v1h-1zM16 15h2v1h-2zM20 15h4v1h-4zM25 15h2v1h-2zM28 15h2v1h-2zM32 15h3v1h-3zM36 15h1v1h-1zM39 15h2v1h-2zM43 15h1v1h-1zM45 15h3v1h-3zM3 16h4v1h-4zM8 16h4v1h-4zM13 16h1v1h-1zM19 16h3v1h-3zM23 16h2v1h-2zM26 16h3v1h-3zM30 16h1v1h-1zM34 16h4v1h-4zM39 16h3v1h-3zM47 16h1v1h-1zM0 17h1v1h-1zM2 17h1v1h-1zM4 17h2v1h-2zM7 17h1v1h-1zM10 17h2v1h-2zM13 17h2v1h-2zM18 17h2v1h-2zM23 17h4v1h-4zM30 17h1v1h-1zM32 17h2v1h-2zM36 17h1v1h-1zM39 17h5v1h-5zM46 17h3v1h-3zM1 18h3v1h-3zM6 18h3v1h-3zM11 18h2v1h-2zM14 18h3v1h-3zM18 18h1v1h-1zM20 18h2v1h-2zM24 18h2v1h-2zM27 18h2v1h-2zM30 18h1v1h-1zM32 18h1v1h-1zM34 18h3v1h-3zM40 18h1v1h-1zM42 18h4v1h-4zM48 18h1v1h-1zM0 19h1v1h-1zM3 19h2v1h-2zM7 19h2v1h-2zM10 19h1v1h-1zM14 19h1v1h-1zM16 19h2v1h-2zM20 19h7v1h-7zM29 19h1v1h-1zM32 19h1v1h-1zM34 19h1v1h-1zM38 19h2v1h-2zM41 19h1v1h-1zM43 19h3v1h-3zM47 19h2v1h-2zM2 20h10v1h-10zM13 20h1v1h-1zM16 20h4v1h-4zM21 20h1v1h-1zM26 20h1v1h-1zM28 20h1v1h-1zM31 20h1v1h-1zM34 20h2v1h-2zM37 20h1v1h-1zM39 20h1v1h-1zM41 20h2v1h-2zM44 20h5v1h-5zM0 21h2v1h-2zM5 21h1v1h-1zM7 21h1v1h-1zM10 21h1v1h-1zM15 21h1v1h-1zM18 21h1v1h-1zM20 21h1v1h-1zM23 21h1v1h-1zM25 21h2v1h-2zM28 21h1v1h-1zM30 21h1v1h-1zM35 21h4v1h-4zM40 21h2v1h-2zM43 21h2v1h-2zM46 21h3v1h-3zM0 22h3v1h-3zM4 22h5v1h-5zM10 22h3v1h-3zM16 22h3v1h-3zM21 22h6v1h-6zM28 22h1v1h-1zM30 22h3v1h-3zM34 22h1v1h-1zM37 22h2v1h-2zM40 22h7v1h-7zM1 23h1v1h-1zM4 23h1v1h-1zM8 23h4v1h-4zM16 23h1v1h-1zM18 23h1v1h-1zM21 23h2v1h-2zM26 23h3v1h-3zM32 23h1v1h-1zM34 23h2v1h-2zM40 23h1v1h-1zM44 23h2v1h-2zM48 23h1v1h-1zM0 24h1v1h-1zM2 24h1v1h-1zM4 24h1v1h-1zM6 24h1v1h-1zM8 24h4v1h-4zM16 24h1v1h-1zM18 24h1v1h-1zM22 24h1v1h-1zM24 24h1v1h-1zM26 24h4v1h-4zM35 24h3v1h-3zM39 24h2v1h-2zM42 24h1v1h-1zM44 24h1v1h-1zM46 24h2v1h-2zM0 25h1v1h-1zM3 25h2v1h-2zM8 25h1v1h-1zM10 25h1v1h-1zM12 25h1v1h-1zM14 25h3v1h-3zM19 25h4v1h-4zM26 25h2v1h-2zM29 25h2v1h-2zM32 25h2v1h-2zM35 25h1v1h-1zM40 25h1v1h-1zM44 25h1v1h-1zM46 25h3v1h-3zM1 26h2v1h-2zM4 26h5v1h-5zM10 26h3v1h-3zM16 26h2v1h-2zM20 26h7v1h-7zM28 26h4v1h-4zM33 26h3v1h-3zM38 26h1v1h-1zM40 26h7v1h-7zM48 26h1v1h-1zM0 27h4v1h-4zM8 27h2v1h-2zM11 27h1v1h-1zM14 27h1v1h-1zM17 27h2v1h-2zM26 27h2v1h-2zM29 27h2v1h-2zM34 27h3v1h-3zM38 27h1v1h-1zM41 27h1v1h-1zM44 27h2v1h-2zM47 27h1v1h-1zM0 28h1v1h-1zM3 28h2v1h-2zM6 28h1v1h-1zM8 28h1v1h-1zM12 28h1v1h-1zM14 28h1v1h-1zM16 28h1v1h-1zM18 28h1v1h-1zM20 28h7v1h-7zM28 28h3v1h-3zM34 28h1v1h-1zM36 28h3v1h-3zM42 28h1v1h-1zM44 28h1v1h-1zM46 28h1v1h-1zM1 29h2v1h-2zM4 29h1v1h-1zM8 29h6v1h-6zM15 29h5v1h-5zM22 29h1v1h-1zM25 29h1v1h-1zM29 29h1v1h-1zM32 29h2v1h-2zM36 29h4v1h-4zM41 29h2v1h-2zM45 29h1v1h-1zM4 30h1v1h-1zM6 30h1v1h-1zM8 30h1v1h-1zM11 30h9v1h-9zM22 30h1v1h-1zM24 30h1v1h-1zM28 30h2v1h-2zM31 30h1v1h-1zM34 30h1v1h-1zM38 30h1v1h-1zM40 30h2v1h-2zM43 30h1v1h-1zM46 30h1v1h-1zM48 30h1v1h-1zM0 31h1v1h-1zM3 31h3v1h-3zM8 31h1v1h-1zM10 31h4v1h-4zM17 31h3v1h-3zM23 31h1v1h-1zM27 31h4v1h-4zM42 31h1v1h-1zM44 31h1v1h-1zM46 31h3v1h-3zM3 32h1v1h-1zM6 32h6v1h-6zM14 32h1v1h-1zM16 32h2v1h-2zM21 32h3v1h-3zM27 32h3v1h-3zM31 32h4v1h-4zM36 32h1v1h-1zM38 32h1v1h-1zM40 32h2v1h-2zM43 32h1v1h-1zM45 32h2v1h-2zM2 33h1v1h-1zM5 33h1v1h-1zM7 33h1v1h-1zM10 33h2v1h-2zM14 33h2v1h-2zM17 33h1v1h-1zM19 33h3v1h-3zM23 33h1v1h-1zM25 33h1v1h-1zM27 33h1v1h-1zM30 33h2v1h-2zM36 33h2v1h-2zM41 33h1v1h-1zM46 33h2v1h-2zM0 34h1v1h-1zM5 34h4v1h-4zM12 34h1v1h-1zM17 34h1v1h-1zM22 34h2v1h-2zM26 34h1v1h-1zM29 34h1v1h-1zM32 34h3v1h-3zM37 34h2v1h-2zM41 34h1v1h-1zM46 34h1v1h-1zM48 34h1v1h-1zM0 35h2v1h-2zM3 35h1v1h-1zM5 35h1v1h-1zM7 35h2v1h-2zM10 35h2v1h-2zM14 35h1v1h-1zM16 35h4v1h-4zM22 35h1v1h-1zM24 35h1v1h-1zM26 35h1v1h-1zM31 35h6v1h-6zM39 35h1v1h-1zM42 35h1v1h-1zM44 35h2v1h-2zM47 35h1v1h-1zM3 36h4v1h-4zM8 36h4v1h-4zM15 36h1v1h-1zM20 36h2v1h-2zM25 36h1v1h-1zM28 36h8v1h-8zM37 36h1v1h-1zM39 36h2v1h-2zM42 36h1v1h-1zM46 36h3v1h-3zM3 37h2v1h-2zM8 37h3v1h-3zM13 37h1v1h-1zM15 37h4v1h-4zM20 37h4v1h-4zM25 37h1v1h-1zM27 37h1v1h-1zM30 37h6v1h-6zM39 37h2v1h-2zM42 37h1v1h-1zM44 37h1v1h-1zM46 37h1v1h-1zM48 37h1v1h-1zM0 38h2v1h-2zM4 38h4v1h-4zM9 38h2v1h-2zM13 38h3v1h-3zM17 38h3v1h-3zM24 38h2v1h-2zM27 38h1v1h-1zM29 38h1v1h-1zM31 38h1v1h-1zM34 38h2v1h-2zM37 38h1v1h-1zM39 38h2v1h-2zM42 38h3v1h-3zM46 38h3v1h-3zM0 39h2v1h-2zM5 39h1v1h-1zM7 39h1v1h-1zM9 39h1v1h-1zM12 39h2v1h-2zM16 39h1v1h-1zM18 39h4v1h-4zM23 39h2v1h-2zM26 39h2v1h-2zM32 39h1v1h-1zM35 39h8v1h-8zM45 39h1v1h-1zM48 39h1v1h-1zM2 40h2v1h-2zM6 40h1v1h-1zM9 40h4v1h-4zM18 40h2v1h-2zM22 40h10v1h-10zM39 40h6v1h-6zM47 40h1v1h-1zM8 41h3v1h-3zM12 41h8v1h-8zM22 41h1v1h-1zM26 41h2v1h-2zM30 41h6v1h-6zM37 41h2v1h-2zM40 41h1v1h-1zM44 41h2v1h-2zM47 41h2v1h-2zM0 42h7v1h-7zM10 42h3v1h-3zM17 42h1v1h-1zM21 42h2v1h-2zM24 42h1v1h-1zM26 42h2v1h-2zM30 42h1v1h-1zM33 42h1v1h-1zM37 42h4v1h-4zM42 42h1v1h-1zM44 42h2v1h-2zM48 42h1v1h-1zM0 43h1v1h-1zM6 43h1v1h-1zM8 43h1v1h-1zM12 43h2v1h-2zM15 43h2v1h-2zM18 43h1v1h-1zM22 43h1v1h-1zM26 43h2v1h-2zM29 43h1v1h-1zM33 43h3v1h-3zM40 43h1v1h-1zM44 43h1v1h-1zM47 43h2v1h-2zM0 44h1v1h-1zM2 44h3v1h-3zM6 44h1v1h-1zM9 44h7v1h-7zM18 44h1v1h-1zM21 44h7v1h-7zM31 44h2v1h-2zM34 44h1v1h-1zM39 44h7v1h-7zM0 45h1v1h-1zM2 45h3v1h-3zM6 45h1v1h-1zM8 45h2v1h-2zM12 45h4v1h-4zM19 45h1v1h-1zM21 45h2v1h-2zM25 45h1v1h-1zM28 45h1v1h-1zM31 45h1v1h-1zM33 45h2v1h-2zM36 45h2v1h-2zM39 45h1v1h-1zM41 45h4v1h-4zM46 45h1v1h-1zM48 45h1v1h-1zM0 46h1v1h-1zM2 46h3v1h-3zM6 46h1v1h-1zM8 46h4v1h-4zM13 46h2v1h-2zM16 46h2v1h-2zM19 46h2v1h-2zM23 46h2v1h-2zM26 46h1v1h-1zM28 46h1v1h-1zM30 46h4v1h-4zM35 46h1v1h-1zM38 46h2v1h-2zM41 46h1v1h-1zM43 46h2v1h-2zM46 46h1v1h-1zM48 46h1v1h-1zM0 47h1v1h-1zM6 47h1v1h-1zM9 47h1v1h-1zM11 47h7v1h-7zM19 47h2v1h-2zM25 47h3v1h-3zM30 47h2v1h-2zM34 47h1v1h-1zM36 47h1v1h-1zM38 47h2v1h-2zM43 47h6v1h-6zM0 48h7v1h-7zM8 48h1v1h-1zM10 48h2v1h-2zM14 48h2v1h-2zM18 48h3v1h-3zM22 48h1v1h-1zM25 48h1v1h-1zM27 48h1v1h-1zM30 48h2v1h-2zM33 48h1v1h-1zM39 48h2v1h-2zM42 48h2v1h-2zM45 48h1v1h-1zM47 48h1v1h-1z" fill="#1c1c1c"/></svg></div>
<button class="btn" type="button"><span class="t bt" style="left:313.8px;top:7.87px;letter-spacing:0.011px">Download notarization certificate</span></button>
</main>
</body></html>
